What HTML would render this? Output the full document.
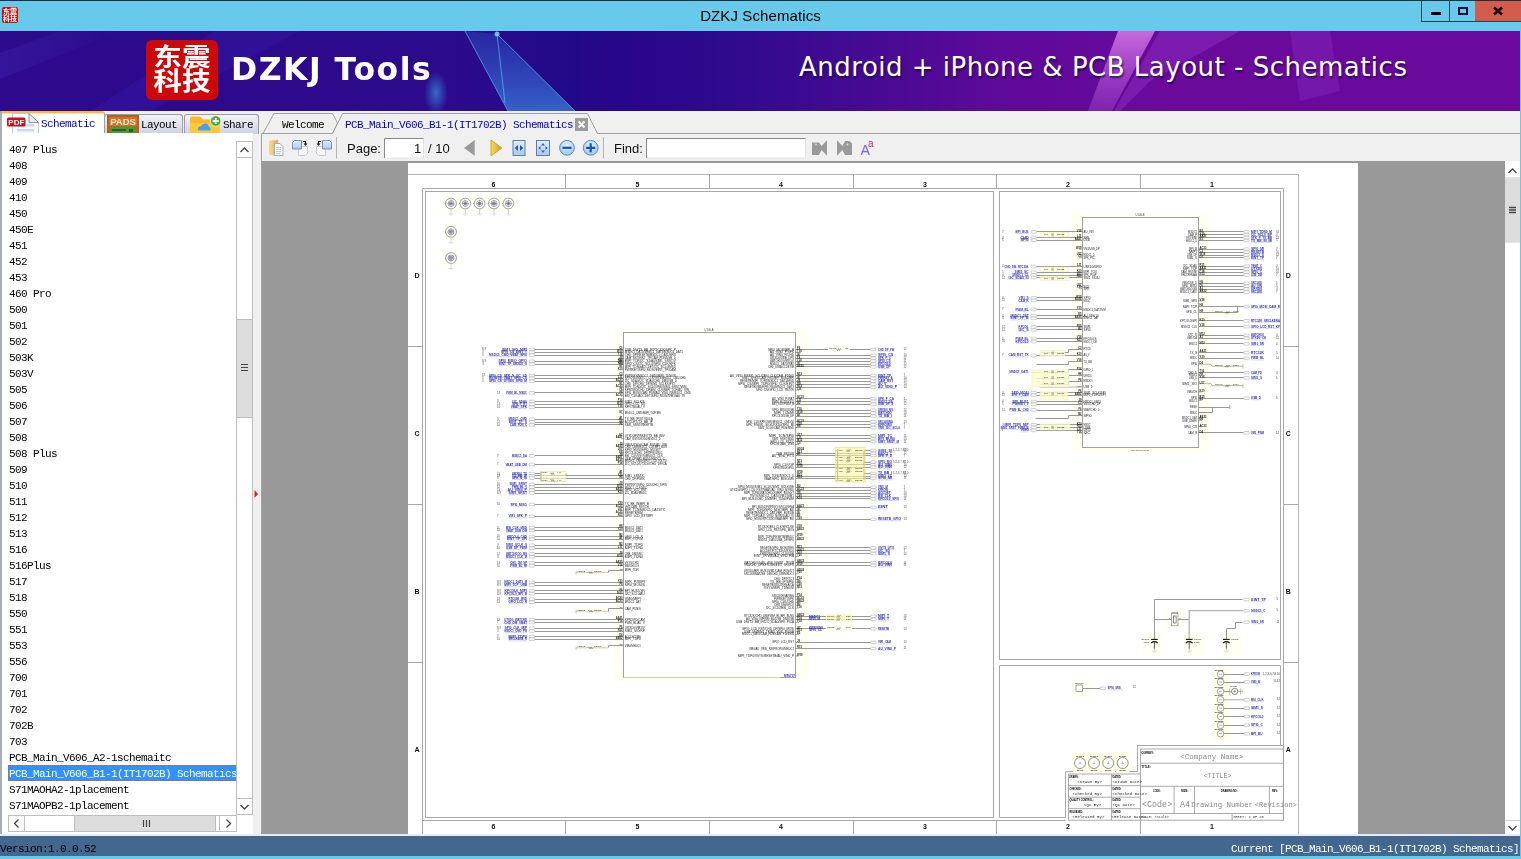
<!DOCTYPE html>
<html lang="en"><head><meta charset="utf-8"><title>DZKJ Schematics</title>
<style>
*{box-sizing:border-box;margin:0;padding:0}
html,body{width:1521px;height:859px;overflow:hidden}
body{position:relative;background:#67caea;font-family:"Liberation Sans",sans-serif;color:#000}
.abs{position:absolute}
.mono{font-family:"Liberation Mono",monospace;font-size:11px;letter-spacing:-0.6px;white-space:pre}
#topline{left:0;top:0;width:1521px;height:1px;background:#16323f}
#title{left:0;top:6px;width:1521px;text-align:center;font-size:15px;letter-spacing:.1px;line-height:20px;color:#000}
#appicon{left:2px;top:7px;width:16px;height:16px;background:#c4120c;border-radius:2px;color:#fff;font-size:7px;line-height:7px;font-family:"Liberation Sans","Noto Sans CJK SC",sans-serif;font-weight:bold;text-align:center;padding-top:1px;overflow:hidden}
#winbtns{left:1421px;top:1px;width:100px;height:21px;border-left:1px solid #12475c;border-bottom:1px solid #12475c}
#winbtns div{position:absolute;top:0;height:20px}
#bmin{left:0;width:28px;border-right:1px solid #12475c}
#bmax{left:28px;width:25px}
#bclose{left:53px;width:46px;background:#d35b4b}
#banner{left:0;top:31px;width:1520px;height:80px;overflow:hidden;background:linear-gradient(90deg,#2e0a8c 0%,#2b0a8b 30%,#220a88 37%,#29068a 42%,#2d0a8c 47%,#400a91 55%,#5e0a99 66%,#690a9b 76%,#6a0a9c 100%)}
#logo{left:146px;top:9px;width:72px;height:60px;background:#cc0808;border-radius:6px}
#logo span{position:absolute;left:0;top:4px;width:72px;color:#fff;font-family:"Noto Sans CJK SC","Liberation Sans",sans-serif;font-weight:700;font-size:24.5px;line-height:24px;text-align:center;transform:scaleX(1.17);transform-origin:36px 0;white-space:pre}
#brand{left:231px;top:18px;font-family:'DejaVu Sans',sans-serif;font-weight:bold;font-size:31.5px;line-height:40px;color:#fff;white-space:pre;letter-spacing:1.5px}
#slogan{left:799px;top:19px;font-family:'DejaVu Sans',sans-serif;letter-spacing:.5px;font-size:26px;line-height:34px;color:#fff;white-space:pre;text-shadow:1px 2px 2px rgba(20,0,60,.7)}
#tabrow{left:0;top:111px;width:1520px;height:50px;background:#f0f0f0}
.ltab{top:3px;height:20px;border:1px solid #9a9aa8;border-bottom:none;border-radius:3px 3px 0 0;background:linear-gradient(#f4f4f8,#cfd0e0)}
.ltab span{position:absolute;top:3px;line-height:14px}
#leftpane{left:2px;top:133px;width:251px;height:703px;background:#fff}
#list{left:6px;top:8px;width:229px;height:672px;overflow:hidden}
#list div{height:16px;line-height:16px;padding-left:1px;padding-top:1px;font-family:"Liberation Mono",monospace;font-size:11px;letter-spacing:-0.6px;white-space:pre}
#list div.sel{background:#3390ff;color:#fff;outline:1px dotted #c60;outline-offset:-1px}
#vsb{left:234px;top:8px;width:17px;height:674px;border:1px solid #bdbdbd;background:#fff}
#hsb{left:6px;top:682px;width:229px;height:17px;border:1px solid #bdbdbd;background:#fff}
#status{left:0;top:834px;width:1520px;height:22px;background:#44678f;border-top:2px solid #e4ecf4}
#status span{position:absolute;top:6px;color:#000;line-height:14px}
#viewer{left:262px;top:161px;width:1243px;height:673px;background:#999;overflow:hidden}
#page{left:146px;top:2px;width:950px;height:672px;background:#fff}
#rvsb{left:1505px;top:161px;width:15px;height:673px;background:#fff}
#toolbar{left:262px;top:134px;width:1258px;height:27px;background:#f0f0f0}
.tbt{font-size:13px;line-height:18px;top:6px;white-space:pre;color:#111}
.inp{background:#fff;border:1px solid #c8c8c8;border-top-color:#8c8c8c;border-left-color:#a8a8a8}

#schem,#list,#tabrow span,#status span,.tbt,#title{will-change:transform}

</style></head>
<body>
<div class="abs" id="title">DZKJ Schematics</div>
<div class="abs" id="topline"></div>
<div class="abs" id="appicon">东震<br>科技</div>
<div class="abs" id="winbtns">
  <div id="bmin"><svg width="27" height="20"><rect x="9" y="11" width="10" height="3" fill="#000"/></svg></div>
  <div id="bmax"><svg width="25" height="20"><rect x="9" y="7" width="8" height="6" fill="none" stroke="#0a0a3a" stroke-width="2"/></svg></div>
  <div id="bclose"><svg width="46" height="20"><path d="M19 6.5 L27 13.5 M27 6.5 L19 13.5" stroke="#1a0505" stroke-width="2.6" fill="none"/></svg></div>
</div>

<div class="abs" id="banner">
  <svg class="abs" style="left:0;top:0" width="1520" height="80" viewBox="0 0 1520 80">
    <defs>
      <linearGradient id="bg1" x1="0" x2="1" y1="0" y2="0"><stop offset="0" stop-color="#4a3fd0" stop-opacity=".22"/><stop offset="1" stop-color="#4a3fd0" stop-opacity="0"/></linearGradient>
      <linearGradient id="bg2" x1="0" x2="0" y1="0" y2="1"><stop offset="0" stop-color="#d77be8" stop-opacity=".85"/><stop offset="1" stop-color="#b050d8" stop-opacity=".35"/></linearGradient>
      <linearGradient id="bg4" x1="0" x2="0" y1="0" y2="1"><stop offset="0" stop-color="#2a3cb8" stop-opacity=".55"/><stop offset="1" stop-color="#3a78d8" stop-opacity=".8"/></linearGradient>
      <radialGradient id="bg3"><stop offset="0" stop-color="#3a8fe0" stop-opacity=".7"/><stop offset="1" stop-color="#3a8fe0" stop-opacity="0"/></radialGradient>
    </defs>
    <polygon points="0,22 60,0 120,0 0,48" fill="url(#bg1)"/>
    <polygon points="215,0 300,0 150,80 90,80" fill="#3a22b8" opacity=".28"/>
    <ellipse cx="436" cy="62" rx="12" ry="22" fill="url(#bg3)"/>
    <polygon points="465,0 497,3 575,80 508,80" fill="url(#bg4)"/>
    <path d="M465 0 L508 80 M497 3 L575 80 M497 3 L505 72" stroke="#58b8f0" stroke-width="1" opacity=".7" fill="none"/>
    <circle cx="497" cy="3" r="2.5" fill="#7fe0f0" opacity=".8"/>
    <polygon points="1118,0 1155,0 1112,80 1088,80" fill="url(#bg2)"/>
    <polygon points="1160,0 1240,0 1150,50 1120,80 1114,80" fill="#a040d0" opacity=".35"/>
    <polygon points="1290,0 1330,0 1340,60 1300,70" fill="#9a3fd0" opacity=".25"/>
  </svg>
  <div class="abs" id="logo"><span>东震
科技</span></div>
  <div class="abs" id="brand">DZKJ Tools</div>
  <div class="abs" id="slogan">Android + iPhone &amp; PCB Layout - Schematics</div>
</div>

<div class="abs" id="tabrow">
  <!-- left tool tabs -->
  <div class="abs" style="left:1px;top:0;width:104px;height:23px;background:#fff;border-left:1px solid #a8a8b0;border-right:1px solid #a8a8b0;border-top:2px solid #fbb640;border-radius:3px 3px 0 0;box-shadow:inset 0 1px 0 #fde4b4"></div>
  <svg class="abs" style="left:6px;top:2px" width="36" height="21" viewBox="6 113 36 21">
    <path d="M12.500 113.500 H29 L38.500 122.500 V133.500 H12.500Z" fill="#f6f9fd" stroke="#c0cad8" stroke-width="1"/>
    <path d="M29 113.500 L38.500 122.500 H29Z" fill="#e4ebf4" stroke="#7a8494" stroke-width=".8"/>
    <rect x="17" y="124" width="17" height="2.500" fill="#c9dcf0"/><rect x="17" y="129" width="17" height="2.500" fill="#c9dcf0"/>
    <rect x="7" y="117.500" width="18.500" height="9" rx="1.500" fill="#c8101c"/>
    <text x="16.300" y="125.100" font-family="Liberation Sans,sans-serif" font-weight="bold" font-size="8" fill="#fff" text-anchor="middle">PDF</text>
  </svg>
  <span class="abs mono" style="left:41px;top:6px;line-height:14px;color:#0000c8">Schematic</span>

  <div class="abs ltab" style="left:104px;width:79px"></div>
  <svg class="abs" style="left:107px;top:4px" width="32" height="19" viewBox="0 0 32 19">
    <rect x=".5" y=".5" width="31" height="18.5" fill="#c85a14" stroke="#a0642c"/>
    <rect x="2" y="2" width="28" height="9" fill="#d8702a"/>
    <rect x="3" y="11.5" width="26" height="7.5" fill="#4c9a2a"/>
    <rect x="5" y="14" width="14" height="2" fill="#2c5a38"/><rect x="22" y="14" width="4" height="3" fill="#2c5a38"/>
    <text x="16" y="9.8" font-family="Liberation Sans,sans-serif" font-weight="bold" font-size="9.5" fill="#fdf1c8" text-anchor="middle">PADS</text>
  </svg>
  <span class="abs mono" style="left:141px;top:7px;line-height:14px">Layout</span>

  <div class="abs ltab" style="left:184px;width:75px"></div>
  <svg class="abs" style="left:189px;top:3px" width="34" height="20" viewBox="0 0 34 20">
    <path d="M1 4 Q1 2.5 2.5 2.5 H11 L14 5.5 H29 Q31 5.5 31 7.5 V20 H1Z" fill="#fdb827"/>
    <path d="M1 9 H31 V20 H1Z" fill="#ffc83a"/>
    <path d="M11 16.500 Q8.300 16.500 9 14 Q9.800 12 12 12.300 Q13.500 9 17 9.600 Q19.800 10.300 19.800 13 Q22.200 13.300 21.400 16.500Z" fill="#4a9ff0"/>
    <circle cx="26.700" cy="7" r="5.300" fill="#4cae3c" stroke="#e9f6e4" stroke-width=".8"/>
    <path d="M26.700 4 V10 M23.700 7 H29.700" stroke="#fff" stroke-width="1.800"/>
  </svg>
  <span class="abs mono" style="left:223px;top:7px;line-height:14px">Share</span>

  <!-- document tabs -->
  <svg class="abs" style="left:259px;top:0" width="1261" height="26" viewBox="259 111 1261 26">
    <path d="M261.5 137 V133.5 H1520" fill="none" stroke="#a0a0a0" stroke-width="1"/>
    <path d="M263 133.5 L274 113.5 H332.500 L337.5 123 L332.5 133.5Z" fill="#f0f0f0" stroke="#a0a0a0" stroke-width="1"/>
    <path d="M332.5 134 L342.600 113.500 H587.500 L597.500 134Z" fill="#f0f0f0"/>
    <path d="M332.500 133.500 L342.600 113.500 H587.500 L597.500 133.500" fill="none" stroke="#a0a0a0" stroke-width="1"/>
    <rect x="575" y="118" width="13" height="13" fill="#9c9c9c"/>
    <path d="M578.500 121.500 L584.500 127.500 M584.500 121.500 L578.500 127.500" stroke="#fff" stroke-width="1.8"/>
  </svg>
  <span class="abs mono" style="left:282px;top:7px;line-height:14px">Welcome</span>
  <span class="abs mono" style="left:345px;top:7px;line-height:14px;color:#0000c8">PCB_Main_V606_B1-1(IT1702B) Schematics</span>
</div>

<div class="abs" style="left:0;top:111px;width:2px;height:725px;background:#a9aeb4"></div>
<div class="abs" id="leftpane">
  <div class="abs" id="list">
<div>407 Plus</div>
<div>408</div>
<div>409</div>
<div>410</div>
<div>450</div>
<div>450E</div>
<div>451</div>
<div>452</div>
<div>453</div>
<div>460 Pro</div>
<div>500</div>
<div>501</div>
<div>502</div>
<div>503K</div>
<div>503V</div>
<div>505</div>
<div>506</div>
<div>507</div>
<div>508</div>
<div>508 Plus</div>
<div>509</div>
<div>510</div>
<div>511</div>
<div>512</div>
<div>513</div>
<div>516</div>
<div>516Plus</div>
<div>517</div>
<div>518</div>
<div>550</div>
<div>551</div>
<div>553</div>
<div>556</div>
<div>700</div>
<div>701</div>
<div>702</div>
<div>702B</div>
<div>703</div>
<div>PCB_Main_V606_A2-1schemaitc</div>
<div class="sel">PCB_Main_V606_B1-1(IT1702B) Schematics</div>
<div>S71MAOHA2-1placement</div>
<div>S71MAOPB2-1placement</div>
  </div>
  <div class="abs" id="vsb">
    <div class="abs" style="left:0;top:0;width:15px;height:16px;border-bottom:1px solid #bdbdbd"><svg width="15" height="16"><path d="M3.500 10 L7.500 6 L11.500 10" fill="none" stroke="#444" stroke-width="1.3"/></svg></div>
    <div class="abs" style="left:0;top:177px;width:15px;height:99px;background:#dcdcdc;border-top:1px solid #bdbdbd;border-bottom:1px solid #bdbdbd"><svg width="15" height="99"><path d="M4 44.500 H11 M4 47.500 H11 M4 50.500 H11" stroke="#444" stroke-width="1.2"/></svg></div>
    <div class="abs" style="left:0;bottom:0;width:15px;height:16px;border-top:1px solid #bdbdbd"><svg width="15" height="16"><path d="M3.500 6 L7.500 10 L11.500 6" fill="none" stroke="#444" stroke-width="1.3"/></svg></div>
  </div>
  <div class="abs" id="hsb">
    <div class="abs" style="left:0;top:0;width:16px;height:15px;border-right:1px solid #bdbdbd"><svg width="16" height="15"><path d="M9.500 3.500 L5.500 7.500 L9.500 11.500" fill="none" stroke="#444" stroke-width="1.3"/></svg></div>
    <div class="abs" style="left:65px;top:0;width:142px;height:15px;background:#dcdcdc;border-left:1px solid #bdbdbd;border-right:1px solid #bdbdbd"><svg width="140" height="15"><path d="M68.500 4 V11 M71.500 4 V11 M74.500 4 V11" stroke="#444" stroke-width="1.2"/></svg></div>
    <div class="abs" style="right:0;top:0;width:17px;height:15px;border-left:1px solid #bdbdbd"><svg width="16" height="15"><path d="M6.500 3.500 L10.500 7.500 L6.500 11.500" fill="none" stroke="#444" stroke-width="1.3"/></svg></div>
  </div>
</div>
<div class="abs" style="left:253px;top:134px;width:9px;height:702px;background:#f0f0f0"></div>
<svg class="abs" style="left:253px;top:489px" width="6" height="10"><path d="M1.500 1 L5 5 L1.500 9Z" fill="#e02020"/></svg>

<div class="abs" id="toolbar">
<svg class="abs" style="left:0;top:0" width="640" height="27" viewBox="262 134 640 27">
  <defs>
    <linearGradient id="gfold" x1="0" x2="1"><stop offset="0" stop-color="#f6dc9c"/><stop offset="1" stop-color="#d8a848"/></linearGradient>
    <linearGradient id="gblue" x1="0" x2="0" y1="0" y2="1"><stop offset="0" stop-color="#e4f0fb"/><stop offset="1" stop-color="#a9c8ea"/></linearGradient>
    <linearGradient id="ggold" x1="0" x2="1"><stop offset="0" stop-color="#f4d868"/><stop offset="1" stop-color="#d8a010"/></linearGradient>
    <radialGradient id="gcirc" cx=".5" cy=".35" r=".7"><stop offset="0" stop-color="#eaf4ff"/><stop offset="1" stop-color="#8cc0f0"/></radialGradient>
  </defs>
  <!-- copy icon -->
  <path d="M269.500 141 L278 140 V154 L274 155.500 L269.500 154Z" fill="url(#gfold)" stroke="#e8c888" stroke-width=".6"/>
  <path d="M274.500 143.500 H280 L283 146.500 V155.500 H274.500Z" fill="#fdfdff" stroke="#9aa6b8" stroke-width=".9"/>
  <path d="M276 147.500 H281 M276 149.500 H281 M276 151.500 H281 M276 153.500 H280" stroke="#a8b8d0" stroke-width=".8"/>
  <!-- rotate icons -->
  <path d="M298.500 146.500 H307.500 V153 L305 155.500 H298.500Z" fill="#fff" stroke="#c0c4cc" stroke-width=".9"/>
  <path d="M292.500 142.500 L294.500 140.500 H301.500 V149 H292.500Z" fill="url(#gblue)" stroke="#6a8cb8" stroke-width=".9"/>
  <path d="M303 141.500 H305.500 V144" fill="none" stroke="#222" stroke-width="1.2"/><path d="M303.500 143.500 H307.500 L305.500 146Z" fill="#222"/>
  <path d="M316.500 146.500 H325.500 V155.500 H319 L316.500 153Z" fill="#fff" stroke="#c0c4cc" stroke-width=".9"/>
  <path d="M322.500 140.500 H329.500 L331.500 142.500 V149 H322.500Z" fill="url(#gblue)" stroke="#6a8cb8" stroke-width=".9"/>
  <path d="M321 141.500 H318.500 V144" fill="none" stroke="#222" stroke-width="1.2"/><path d="M316.500 143.500 H320.500 L318.500 146Z" fill="#222"/>
  <path d="M336.500 137 V158.500" stroke="#b4b4b4" stroke-width="1"/>
  <!-- page input -->
  <rect x="384.500" y="138.500" width="39" height="19.500" fill="#fff" stroke="#e4e4e4"/>
  <path d="M384.500 158 V138.500 H423.500" fill="none" stroke="#8a8a8a" stroke-width="1"/>
  <!-- prev / next -->
  <path d="M464 148 L474.700 140 V155.800Z" fill="#9a9a9a"/>
  <path d="M491 140 L501.800 148 L491 155.800Z" fill="url(#ggold)" stroke="#c89818" stroke-width=".8"/>
  <!-- fit width -->
  <rect x="513" y="140.500" width="12" height="15" fill="url(#gblue)" stroke="#5a7fb4" stroke-width="1"/>
  <path d="M518 145 V151 L514.800 148Z M520 145 V151 L523.200 148Z" fill="#1858b0"/>
  <!-- fit page -->
  <rect x="536.500" y="140.500" width="13" height="15" fill="url(#gblue)" stroke="#5a7fb4" stroke-width="1"/>
  <path d="M541 145.500 H545 L543 143Z M541 150.500 H545 L543 153Z M540.500 146 V150 L538.300 148Z M545.500 146 V150 L547.700 148Z" fill="#2a62b4"/>
  <!-- zoom out / in -->
  <circle cx="567" cy="147.800" r="7.400" fill="url(#gcirc)" stroke="#6a8ab4" stroke-width="1"/>
  <path d="M562.500 147.800 H571.500" stroke="#1058b0" stroke-width="2.2"/>
  <circle cx="590.700" cy="147.800" r="7.400" fill="url(#gcirc)" stroke="#6a8ab4" stroke-width="1"/>
  <path d="M586.200 147.800 H595.200 M590.700 143.300 V152.300" stroke="#1058b0" stroke-width="2.200"/>
  <path d="M603.500 137 V158.500" stroke="#b4b4b4" stroke-width="1"/>
  <!-- find input -->
  <rect x="646.500" y="138.500" width="159" height="19.500" fill="#fff" stroke="#e4e4e4"/>
  <path d="M646.500 158 V138.500 H805.500" fill="none" stroke="#8a8a8a" stroke-width="1"/>
  <!-- find prev / next -->
  <path d="M812 142.500 H819 L821.500 146 L827 140.300 V155.700 L821.500 150 L819 155 H812Z" fill="#9a9a9a"/>
  <path d="M837 140.300 L842.500 146 L845 141 H849.500 L852 143.500 V155 H845 L842.500 150 L837 155.700Z" fill="#9a9a9a"/>
  <circle cx="816" cy="144.500" r=".9" fill="#ddd"/><circle cx="847.500" cy="144.500" r=".9" fill="#ddd"/>
  <!-- Aa -->
  <text x="860.500" y="155.200" font-family="Liberation Sans,sans-serif" font-size="14" fill="#7a66d8">A</text>
  <text x="868" y="147.300" font-family="Liberation Sans,sans-serif" font-size="10" fill="#c42878">a</text>
</svg>
<span class="abs tbt" style="left:85px">Page:</span>
<span class="abs tbt" style="left:151.500px">1</span>
<span class="abs tbt" style="left:166px">/ 10</span>
<span class="abs tbt" style="left:351.500px">Find:</span>

</div>
<div class="abs" style="left:261px;top:134px;width:1px;height:702px;background:#a0a0a0"></div>

<div class="abs" id="viewer">
  <div class="abs" id="page">
<svg id="schem" class="abs" style="left:0;top:0" width="950" height="672" viewBox="408 163 950 672" font-family="Liberation Sans,sans-serif" fill="none" shape-rendering="auto">
<path d="M408 174.5L1298.5 174.5L1298.5 835" stroke="#b4b4b4" stroke-width="1" fill="none"/>
<path d="M422.5 835L422.5 188.5L1283.5 188.5L1283.5 820.5" stroke="#a8a8a8" stroke-width="1" fill="none"/>
<path d="M422.5 820.5L1065.5 820.5" stroke="#a8a8a8" stroke-width="1"/>
<path d="M565.5 174.5L565.5 188.5" stroke="#a8a8a8" stroke-width="1"/>
<path d="M709.5 174.5L709.5 188.5" stroke="#a8a8a8" stroke-width="1"/>
<path d="M853.5 174.5L853.5 188.5" stroke="#a8a8a8" stroke-width="1"/>
<path d="M996.5 174.5L996.5 188.5" stroke="#a8a8a8" stroke-width="1"/>
<path d="M1140.5 174.5L1140.5 188.5" stroke="#a8a8a8" stroke-width="1"/>
<path d="M565.5 820.5L565.5 835" stroke="#a8a8a8" stroke-width="1"/>
<path d="M709.5 820.5L709.5 835" stroke="#a8a8a8" stroke-width="1"/>
<path d="M853.5 820.5L853.5 835" stroke="#a8a8a8" stroke-width="1"/>
<path d="M996.5 820.5L996.5 835" stroke="#a8a8a8" stroke-width="1"/>
<path d="M1140.5 820.5L1140.5 835" stroke="#a8a8a8" stroke-width="1"/>
<path d="M408 346.5L422.5 346.5" stroke="#a8a8a8" stroke-width="1"/>
<path d="M1283.5 346.5L1298.5 346.5" stroke="#a8a8a8" stroke-width="1"/>
<path d="M408 504.5L422.5 504.5" stroke="#a8a8a8" stroke-width="1"/>
<path d="M1283.5 504.5L1298.5 504.5" stroke="#a8a8a8" stroke-width="1"/>
<path d="M408 662.5L422.5 662.5" stroke="#a8a8a8" stroke-width="1"/>
<path d="M1283.5 662.5L1298.5 662.5" stroke="#a8a8a8" stroke-width="1"/>
<rect x="425.5" y="191.5" width="568" height="626" fill="none" stroke="#a8a8a8" stroke-width="1"/>
<rect x="999.5" y="191.5" width="281" height="468" fill="none" stroke="#a8a8a8" stroke-width="1"/>
<path d="M1280.5 745.5L1280.5 665.5L999.5 665.5L999.5 817.5L1065.5 817.5L1065.5 771.5L1137.5 771.5L1137.5 745.5L1283.5 745.5" stroke="#a8a8a8" stroke-width="1" fill="none"/>
<text x="493.5" y="186.5" font-size="7" fill="#111" text-anchor="middle" font-weight="bold">6</text>
<text x="493.5" y="829.3" font-size="7" fill="#111" text-anchor="middle" font-weight="bold">6</text>
<text x="637.5" y="186.5" font-size="7" fill="#111" text-anchor="middle" font-weight="bold">5</text>
<text x="637.5" y="829.3" font-size="7" fill="#111" text-anchor="middle" font-weight="bold">5</text>
<text x="781" y="186.5" font-size="7" fill="#111" text-anchor="middle" font-weight="bold">4</text>
<text x="781" y="829.3" font-size="7" fill="#111" text-anchor="middle" font-weight="bold">4</text>
<text x="925" y="186.5" font-size="7" fill="#111" text-anchor="middle" font-weight="bold">3</text>
<text x="925" y="829.3" font-size="7" fill="#111" text-anchor="middle" font-weight="bold">3</text>
<text x="1068" y="186.5" font-size="7" fill="#111" text-anchor="middle" font-weight="bold">2</text>
<text x="1068" y="829.3" font-size="7" fill="#111" text-anchor="middle" font-weight="bold">2</text>
<text x="1212" y="186.5" font-size="7" fill="#111" text-anchor="middle" font-weight="bold">1</text>
<text x="1212" y="829.3" font-size="7" fill="#111" text-anchor="middle" font-weight="bold">1</text>
<text x="417" y="278.1" font-size="7" fill="#111" text-anchor="middle" font-weight="bold">D</text>
<text x="1288.3" y="278.1" font-size="7" fill="#111" text-anchor="middle" font-weight="bold">D</text>
<text x="417" y="435.8" font-size="7" fill="#111" text-anchor="middle" font-weight="bold">C</text>
<text x="1288.3" y="435.8" font-size="7" fill="#111" text-anchor="middle" font-weight="bold">C</text>
<text x="417" y="593.8" font-size="7" fill="#111" text-anchor="middle" font-weight="bold">B</text>
<text x="1288.3" y="593.8" font-size="7" fill="#111" text-anchor="middle" font-weight="bold">B</text>
<text x="417" y="751.8" font-size="7" fill="#111" text-anchor="middle" font-weight="bold">A</text>
<text x="1288.3" y="751.8" font-size="7" fill="#111" text-anchor="middle" font-weight="bold">A</text>
<rect x="443" y="196" width="74" height="18" fill="#fffff4" stroke="none" stroke-width="1"/>
<rect x="443" y="224" width="15" height="17" fill="#fffff4" stroke="none" stroke-width="1"/>
<rect x="443" y="250" width="15" height="17" fill="#fffff4" stroke="none" stroke-width="1"/>
<circle cx="451" cy="203.5" r="5.4" fill="#fff" stroke="#777" stroke-width="0.7"/>
<circle cx="451" cy="203.5" r="3" fill="none" stroke="#667" stroke-width="0.6"/>
<rect x="449.7" y="202.2" width="2.6" height="2.6" fill="#d0d0de" stroke="#667" stroke-width="0.4"/>
<path d="M448.2 203.5L453.8 203.5" stroke="#445" stroke-width="0.45"/>
<path d="M451 200.7L451 206.3" stroke="#445" stroke-width="0.45"/>
<path d="M451 208.7L451 214" stroke="#b8b8c8" stroke-width="0.6"/>
<path d="M448.6 214L453.4 214" stroke="#c4c4d4" stroke-width="0.6"/>
<path d="M449.6 215.3L452.4 215.3" stroke="#d4d4e0" stroke-width="0.5"/>
<text x="444.4" y="204.4" font-size="2.2" fill="#555">1</text>
<circle cx="465.3" cy="203.5" r="5.4" fill="#fff" stroke="#777" stroke-width="0.7"/>
<circle cx="465.3" cy="203.5" r="3" fill="none" stroke="#667" stroke-width="0.6"/>
<rect x="464" y="202.2" width="2.6" height="2.6" fill="#d0d0de" stroke="#667" stroke-width="0.4"/>
<path d="M462.5 203.5L468.1 203.5" stroke="#445" stroke-width="0.45"/>
<path d="M465.3 200.7L465.3 206.3" stroke="#445" stroke-width="0.45"/>
<path d="M465.3 208.7L465.3 214" stroke="#b8b8c8" stroke-width="0.6"/>
<path d="M462.9 214L467.7 214" stroke="#c4c4d4" stroke-width="0.6"/>
<path d="M463.9 215.3L466.7 215.3" stroke="#d4d4e0" stroke-width="0.5"/>
<text x="458.7" y="204.4" font-size="2.2" fill="#555">1</text>
<circle cx="479.6" cy="203.5" r="5.4" fill="#fff" stroke="#777" stroke-width="0.7"/>
<circle cx="479.6" cy="203.5" r="3" fill="none" stroke="#667" stroke-width="0.6"/>
<rect x="478.3" y="202.2" width="2.6" height="2.6" fill="#d0d0de" stroke="#667" stroke-width="0.4"/>
<path d="M476.8 203.5L482.4 203.5" stroke="#445" stroke-width="0.45"/>
<path d="M479.6 200.7L479.6 206.3" stroke="#445" stroke-width="0.45"/>
<path d="M479.6 208.7L479.6 214" stroke="#b8b8c8" stroke-width="0.6"/>
<path d="M477.2 214L482 214" stroke="#c4c4d4" stroke-width="0.6"/>
<path d="M478.2 215.3L481 215.3" stroke="#d4d4e0" stroke-width="0.5"/>
<text x="473" y="204.4" font-size="2.2" fill="#555">1</text>
<circle cx="494" cy="203.5" r="5.4" fill="#fff" stroke="#777" stroke-width="0.7"/>
<circle cx="494" cy="203.5" r="3" fill="none" stroke="#667" stroke-width="0.6"/>
<rect x="492.7" y="202.2" width="2.6" height="2.6" fill="#d0d0de" stroke="#667" stroke-width="0.4"/>
<path d="M491.2 203.5L496.8 203.5" stroke="#445" stroke-width="0.45"/>
<path d="M494 200.7L494 206.3" stroke="#445" stroke-width="0.45"/>
<path d="M494 208.7L494 214" stroke="#b8b8c8" stroke-width="0.6"/>
<path d="M491.6 214L496.4 214" stroke="#c4c4d4" stroke-width="0.6"/>
<path d="M492.6 215.3L495.4 215.3" stroke="#d4d4e0" stroke-width="0.5"/>
<text x="487.4" y="204.4" font-size="2.2" fill="#555">1</text>
<circle cx="508.4" cy="203.5" r="5.4" fill="#fff" stroke="#777" stroke-width="0.7"/>
<circle cx="508.4" cy="203.5" r="3" fill="none" stroke="#667" stroke-width="0.6"/>
<rect x="507.1" y="202.2" width="2.6" height="2.6" fill="#d0d0de" stroke="#667" stroke-width="0.4"/>
<path d="M505.6 203.5L511.2 203.5" stroke="#445" stroke-width="0.45"/>
<path d="M508.4 200.7L508.4 206.3" stroke="#445" stroke-width="0.45"/>
<path d="M508.4 208.7L508.4 214" stroke="#b8b8c8" stroke-width="0.6"/>
<path d="M506 214L510.8 214" stroke="#c4c4d4" stroke-width="0.6"/>
<path d="M507 215.3L509.8 215.3" stroke="#d4d4e0" stroke-width="0.5"/>
<text x="501.8" y="204.4" font-size="2.2" fill="#555">1</text>
<circle cx="451" cy="231.8" r="5.4" fill="#fff" stroke="#777" stroke-width="0.7"/>
<circle cx="451" cy="231.8" r="3" fill="none" stroke="#667" stroke-width="0.6"/>
<rect x="449.7" y="230.5" width="2.6" height="2.6" fill="#d0d0de" stroke="#667" stroke-width="0.4"/>
<path d="M448.2 231.8L453.8 231.8" stroke="#445" stroke-width="0.45"/>
<path d="M451 229L451 234.6" stroke="#445" stroke-width="0.45"/>
<path d="M451 237L451 242.3" stroke="#b8b8c8" stroke-width="0.6"/>
<path d="M448.6 242.3L453.4 242.3" stroke="#c4c4d4" stroke-width="0.6"/>
<path d="M449.6 243.6L452.4 243.6" stroke="#d4d4e0" stroke-width="0.5"/>
<text x="444.4" y="232.7" font-size="2.2" fill="#555">1</text>
<circle cx="451" cy="258" r="5.4" fill="#fff" stroke="#777" stroke-width="0.7"/>
<circle cx="451" cy="258" r="3" fill="none" stroke="#667" stroke-width="0.6"/>
<rect x="449.7" y="256.7" width="2.6" height="2.6" fill="#d0d0de" stroke="#667" stroke-width="0.4"/>
<path d="M448.2 258L453.8 258" stroke="#445" stroke-width="0.45"/>
<path d="M451 255.2L451 260.8" stroke="#445" stroke-width="0.45"/>
<path d="M451 263.2L451 268.5" stroke="#b8b8c8" stroke-width="0.6"/>
<path d="M448.6 268.5L453.4 268.5" stroke="#c4c4d4" stroke-width="0.6"/>
<path d="M449.6 269.8L452.4 269.8" stroke="#d4d4e0" stroke-width="0.5"/>
<text x="444.4" y="258.9" font-size="2.2" fill="#555">1</text>
<rect x="613" y="329" width="195" height="352" fill="#fffff0" stroke="none" stroke-width="1"/>
<rect x="615" y="331" width="190" height="348" fill="#fffff6" stroke="none" stroke-width="1"/>
<rect x="623.5" y="332.5" width="172" height="345" fill="#fff" stroke="#a0a0a0" stroke-width="1"/>
<text x="709" y="331.2" font-size="2.6" fill="#444" text-anchor="middle">U100-A</text>
<text x="795" y="677.2" font-size="3" fill="#2a2a9a" text-anchor="end" font-weight="bold">MT6737</text>
<path d="M623.5 677.6L780 677.6" stroke="#d8d8a8" stroke-width="1"/>
<path d="M534.8 349.5L623.5 349.5" stroke="#989898" stroke-width="1"/>
<rect x="529.2" y="348.2" width="5.4" height="2.6" fill="#fff" stroke="#9a9a9a" stroke-width="0.5" rx="0.8"/>
<text x="527" y="350.5" font-size="2.9" fill="#3030b4" text-anchor="end" font-weight="bold" textLength="25" lengthAdjust="spacingAndGlyphs">SIM1_SIO_MIPI</text>
<path d="M502 351L527 351" stroke="#8a8ad8" stroke-width="0.35"/>
<text x="482" y="350.4" font-size="2.9" fill="#555">8,9</text>
<text x="622.6" y="349.3" font-size="2.7" fill="#222" text-anchor="end" font-weight="bold">C3</text>
<path d="M534.8 352.5L623.5 352.5" stroke="#989898" stroke-width="1"/>
<rect x="529.2" y="351.1" width="5.4" height="2.6" fill="#fff" stroke="#9a9a9a" stroke-width="0.5" rx="0.8"/>
<text x="527" y="353.4" font-size="2.9" fill="#3030b4" text-anchor="end" font-weight="bold" textLength="26" lengthAdjust="spacingAndGlyphs">SPI0_CS_EINT_T</text>
<path d="M501 353.9L527 353.9" stroke="#8a8ad8" stroke-width="0.35"/>
<text x="482" y="353.3" font-size="2.9" fill="#555">3</text>
<text x="622.6" y="352.2" font-size="2.7" fill="#222" text-anchor="end" font-weight="bold">W19</text>
<path d="M534.8 355.5L623.5 355.5" stroke="#989898" stroke-width="1"/>
<rect x="529.2" y="354" width="5.4" height="2.6" fill="#fff" stroke="#9a9a9a" stroke-width="0.5" rx="0.8"/>
<text x="527" y="356.3" font-size="2.9" fill="#3030b4" text-anchor="end" font-weight="bold" textLength="38" lengthAdjust="spacingAndGlyphs">MSDC1_CMD_VBAT_SPI0</text>
<path d="M489 356.8L527 356.8" stroke="#8a8ad8" stroke-width="0.35"/>
<text x="482" y="356.2" font-size="2.9" fill="#555">3</text>
<text x="622.6" y="355.1" font-size="2.7" fill="#222" text-anchor="end" font-weight="bold">T16</text>
<path d="M534.8 361.5L623.5 361.5" stroke="#989898" stroke-width="1"/>
<rect x="529.2" y="360" width="5.4" height="2.6" fill="#fff" stroke="#9a9a9a" stroke-width="0.5" rx="0.8"/>
<text x="527" y="362.3" font-size="2.9" fill="#3030b4" text-anchor="end" font-weight="bold" textLength="28.5" lengthAdjust="spacingAndGlyphs">SPI0_MISO_GPIO</text>
<path d="M498.5 362.8L527 362.8" stroke="#8a8ad8" stroke-width="0.35"/>
<text x="482" y="362.2" font-size="2.9" fill="#555">8,9</text>
<text x="622.6" y="361.1" font-size="2.7" fill="#222" text-anchor="end" font-weight="bold">K10</text>
<path d="M534.8 364.5L623.5 364.5" stroke="#989898" stroke-width="1"/>
<rect x="529.2" y="362.9" width="5.4" height="2.6" fill="#fff" stroke="#9a9a9a" stroke-width="0.5" rx="0.8"/>
<text x="527" y="365.2" font-size="2.9" fill="#3030b4" text-anchor="end" font-weight="bold" textLength="28" lengthAdjust="spacingAndGlyphs">EINT_TP_URXD0_G</text>
<path d="M499 365.7L527 365.7" stroke="#8a8ad8" stroke-width="0.35"/>
<text x="482" y="365.1" font-size="2.9" fill="#555">3</text>
<text x="622.6" y="364" font-size="2.7" fill="#222" text-anchor="end" font-weight="bold">K10</text>
<path d="M534.8 375.5L623.5 375.5" stroke="#989898" stroke-width="1"/>
<rect x="529.2" y="374.2" width="5.4" height="2.6" fill="#fff" stroke="#9a9a9a" stroke-width="0.5" rx="0.8"/>
<text x="527" y="376.5" font-size="2.9" fill="#3030b4" text-anchor="end" font-weight="bold" textLength="38" lengthAdjust="spacingAndGlyphs">SPI0_CS_SPK_N_I2C_SD</text>
<path d="M489 377L527 377" stroke="#8a8ad8" stroke-width="0.35"/>
<text x="482" y="376.4" font-size="2.9" fill="#555">13</text>
<text x="622.6" y="375.3" font-size="2.7" fill="#222" text-anchor="end" font-weight="bold">C3</text>
<path d="M534.8 378.5L623.5 378.5" stroke="#989898" stroke-width="1"/>
<rect x="529.2" y="377.1" width="5.4" height="2.6" fill="#fff" stroke="#9a9a9a" stroke-width="0.5" rx="0.8"/>
<text x="527" y="379.4" font-size="2.9" fill="#3030b4" text-anchor="end" font-weight="bold" textLength="38" lengthAdjust="spacingAndGlyphs">RESETB_VBAT_SPI0_CS</text>
<path d="M489 379.9L527 379.9" stroke="#8a8ad8" stroke-width="0.35"/>
<text x="482" y="379.3" font-size="2.9" fill="#555">3</text>
<text x="622.6" y="378.2" font-size="2.7" fill="#222" text-anchor="end" font-weight="bold">L11</text>
<path d="M534.8 381.5L623.5 381.5" stroke="#989898" stroke-width="1"/>
<rect x="529.2" y="380" width="5.4" height="2.6" fill="#fff" stroke="#9a9a9a" stroke-width="0.5" rx="0.8"/>
<text x="527" y="382.3" font-size="2.9" fill="#3030b4" text-anchor="end" font-weight="bold" textLength="38" lengthAdjust="spacingAndGlyphs">SPI0_CS_UTXD0_SPI0_M</text>
<path d="M489 382.8L527 382.8" stroke="#8a8ad8" stroke-width="0.35"/>
<text x="482" y="382.2" font-size="2.9" fill="#555">3</text>
<text x="622.6" y="381.1" font-size="2.7" fill="#222" text-anchor="end" font-weight="bold">AC23</text>
<path d="M534.8 392.5L623.5 392.5" stroke="#989898" stroke-width="1"/>
<rect x="529.2" y="391.6" width="5.4" height="2.6" fill="#fff" stroke="#9a9a9a" stroke-width="0.5" rx="0.8"/>
<text x="527" y="393.9" font-size="2.9" fill="#3030b4" text-anchor="end" font-weight="bold" textLength="20.7" lengthAdjust="spacingAndGlyphs">PWM_BL_MSDC</text>
<path d="M506.3 394.4L527 394.4" stroke="#8a8ad8" stroke-width="0.35"/>
<text x="497" y="393.8" font-size="2.9" fill="#555">13</text>
<text x="622.6" y="392.7" font-size="2.7" fill="#222" text-anchor="end" font-weight="bold">F6</text>
<path d="M534.8 401.5L623.5 401.5" stroke="#989898" stroke-width="1"/>
<rect x="529.2" y="400.2" width="5.4" height="2.6" fill="#fff" stroke="#9a9a9a" stroke-width="0.5" rx="0.8"/>
<text x="527" y="402.5" font-size="2.9" fill="#3030b4" text-anchor="end" font-weight="bold" textLength="14.7" lengthAdjust="spacingAndGlyphs">I2C_SDA0</text>
<path d="M512.3 403L527 403" stroke="#8a8ad8" stroke-width="0.35"/>
<text x="497" y="402.4" font-size="2.9" fill="#555">3</text>
<text x="622.6" y="401.3" font-size="2.7" fill="#222" text-anchor="end" font-weight="bold">P14</text>
<path d="M534.8 404.5L623.5 404.5" stroke="#989898" stroke-width="1"/>
<rect x="529.2" y="403.1" width="5.4" height="2.6" fill="#fff" stroke="#9a9a9a" stroke-width="0.5" rx="0.8"/>
<text x="527" y="405.4" font-size="2.9" fill="#3030b4" text-anchor="end" font-weight="bold" textLength="14.7" lengthAdjust="spacingAndGlyphs">SPK_P_RT</text>
<path d="M512.3 405.9L527 405.9" stroke="#8a8ad8" stroke-width="0.35"/>
<text x="497" y="405.3" font-size="2.9" fill="#555">13</text>
<text x="622.6" y="404.2" font-size="2.7" fill="#222" text-anchor="end" font-weight="bold">W19</text>
<path d="M534.8 407.5L623.5 407.5" stroke="#989898" stroke-width="1"/>
<rect x="529.2" y="406" width="5.4" height="2.6" fill="#fff" stroke="#9a9a9a" stroke-width="0.5" rx="0.8"/>
<text x="527" y="408.3" font-size="2.9" fill="#3030b4" text-anchor="end" font-weight="bold" textLength="16.3" lengthAdjust="spacingAndGlyphs">VBAT_SPK</text>
<path d="M510.7 408.8L527 408.8" stroke="#8a8ad8" stroke-width="0.35"/>
<text x="497" y="408.2" font-size="2.9" fill="#555">10</text>
<text x="622.6" y="407.1" font-size="2.7" fill="#222" text-anchor="end" font-weight="bold">T16</text>
<path d="M534.8 419.5L623.5 419.5" stroke="#989898" stroke-width="1"/>
<rect x="529.2" y="417.8" width="5.4" height="2.6" fill="#fff" stroke="#9a9a9a" stroke-width="0.5" rx="0.8"/>
<text x="527" y="420.1" font-size="2.9" fill="#3030b4" text-anchor="end" font-weight="bold" textLength="18.6" lengthAdjust="spacingAndGlyphs">MSDC1_CMD</text>
<path d="M508.4 420.6L527 420.6" stroke="#8a8ad8" stroke-width="0.35"/>
<text x="497" y="420" font-size="2.9" fill="#555">3</text>
<text x="622.6" y="418.9" font-size="2.7" fill="#222" text-anchor="end" font-weight="bold">A1</text>
<path d="M534.8 422.5L623.5 422.5" stroke="#989898" stroke-width="1"/>
<rect x="529.2" y="420.7" width="5.4" height="2.6" fill="#fff" stroke="#9a9a9a" stroke-width="0.5" rx="0.8"/>
<text x="527" y="423" font-size="2.9" fill="#3030b4" text-anchor="end" font-weight="bold" textLength="18" lengthAdjust="spacingAndGlyphs">EINT_TP_S</text>
<path d="M509 423.5L527 423.5" stroke="#8a8ad8" stroke-width="0.35"/>
<text x="497" y="422.9" font-size="2.9" fill="#555">12</text>
<text x="622.6" y="421.8" font-size="2.7" fill="#222" text-anchor="end" font-weight="bold">D4</text>
<path d="M534.8 424.5L623.5 424.5" stroke="#989898" stroke-width="1"/>
<rect x="529.2" y="423.6" width="5.4" height="2.6" fill="#fff" stroke="#9a9a9a" stroke-width="0.5" rx="0.8"/>
<text x="527" y="425.9" font-size="2.9" fill="#3030b4" text-anchor="end" font-weight="bold" textLength="17" lengthAdjust="spacingAndGlyphs">CAM_PDN_C</text>
<path d="M510 426.4L527 426.4" stroke="#8a8ad8" stroke-width="0.35"/>
<text x="497" y="425.8" font-size="2.9" fill="#555">10</text>
<text x="622.6" y="424.7" font-size="2.7" fill="#222" text-anchor="end" font-weight="bold">F6</text>
<path d="M534.8 455.5L623.5 455.5" stroke="#989898" stroke-width="1"/>
<rect x="529.2" y="454.5" width="5.4" height="2.6" fill="#fff" stroke="#9a9a9a" stroke-width="0.5" rx="0.8"/>
<text x="527" y="456.8" font-size="2.9" fill="#3030b4" text-anchor="end" font-weight="bold" textLength="15" lengthAdjust="spacingAndGlyphs">MSDC1_DA</text>
<path d="M512 457.3L527 457.3" stroke="#8a8ad8" stroke-width="0.35"/>
<text x="497" y="456.7" font-size="2.9" fill="#555">7</text>
<text x="622.6" y="455.6" font-size="2.7" fill="#222" text-anchor="end" font-weight="bold">J9</text>
<path d="M534.8 464.5L623.5 464.5" stroke="#989898" stroke-width="1"/>
<rect x="529.2" y="463.2" width="5.4" height="2.6" fill="#fff" stroke="#9a9a9a" stroke-width="0.5" rx="0.8"/>
<text x="527" y="465.5" font-size="2.9" fill="#3030b4" text-anchor="end" font-weight="bold" textLength="21.6" lengthAdjust="spacingAndGlyphs">VBAT_USB_DM</text>
<path d="M505.4 466L527 466" stroke="#8a8ad8" stroke-width="0.35"/>
<text x="497" y="465.4" font-size="2.9" fill="#555">7</text>
<text x="622.6" y="464.3" font-size="2.7" fill="#222" text-anchor="end" font-weight="bold">P14</text>
<path d="M534.8 473.5L541 473.5" stroke="#989898" stroke-width="1"/>
<rect x="529.2" y="472.3" width="5.4" height="2.6" fill="#fff" stroke="#9a9a9a" stroke-width="0.5" rx="0.8"/>
<text x="527" y="474.6" font-size="2.9" fill="#3030b4" text-anchor="end" font-weight="bold" textLength="15" lengthAdjust="spacingAndGlyphs">URXD0_TX</text>
<path d="M512 475.1L527 475.1" stroke="#8a8ad8" stroke-width="0.35"/>
<text x="497" y="474.5" font-size="2.9" fill="#555">13</text>
<text x="622.6" y="473.4" font-size="2.7" fill="#222" text-anchor="end" font-weight="bold">A1</text>
<path d="M534.8 475.5L623.5 475.5" stroke="#989898" stroke-width="1"/>
<rect x="529.2" y="474.5" width="5.4" height="2.6" fill="#fff" stroke="#9a9a9a" stroke-width="0.5" rx="0.8"/>
<text x="527" y="476.8" font-size="2.9" fill="#3030b4" text-anchor="end" font-weight="bold" textLength="15" lengthAdjust="spacingAndGlyphs">TX_BB_IP</text>
<path d="M512 477.3L527 477.3" stroke="#8a8ad8" stroke-width="0.35"/>
<text x="497" y="476.7" font-size="2.9" fill="#555">13</text>
<text x="622.6" y="475.6" font-size="2.7" fill="#222" text-anchor="end" font-weight="bold">Y20</text>
<path d="M534.8 478.5L623.5 478.5" stroke="#989898" stroke-width="1"/>
<rect x="529.2" y="476.8" width="5.4" height="2.6" fill="#fff" stroke="#9a9a9a" stroke-width="0.5" rx="0.8"/>
<text x="527" y="479.1" font-size="2.9" fill="#3030b4" text-anchor="end" font-weight="bold" textLength="15" lengthAdjust="spacingAndGlyphs">SPK_N_SI</text>
<path d="M512 479.6L527 479.6" stroke="#8a8ad8" stroke-width="0.35"/>
<text x="497" y="479" font-size="2.9" fill="#555">3</text>
<text x="622.6" y="477.9" font-size="2.7" fill="#222" text-anchor="end" font-weight="bold">H8</text>
<path d="M534.8 484.5L623.5 484.5" stroke="#989898" stroke-width="1"/>
<rect x="529.2" y="483.1" width="5.4" height="2.6" fill="#fff" stroke="#9a9a9a" stroke-width="0.5" rx="0.8"/>
<text x="527" y="485.4" font-size="2.9" fill="#3030b4" text-anchor="end" font-weight="bold" textLength="17.5" lengthAdjust="spacingAndGlyphs">SIM1_SRST</text>
<path d="M509.5 485.9L527 485.9" stroke="#8a8ad8" stroke-width="0.35"/>
<text x="497" y="485.3" font-size="2.9" fill="#555">10</text>
<text x="622.6" y="484.2" font-size="2.7" fill="#222" text-anchor="end" font-weight="bold">J9</text>
<path d="M534.8 487.5L623.5 487.5" stroke="#989898" stroke-width="1"/>
<rect x="529.2" y="486" width="5.4" height="2.6" fill="#fff" stroke="#9a9a9a" stroke-width="0.5" rx="0.8"/>
<text x="527" y="488.3" font-size="2.9" fill="#3030b4" text-anchor="end" font-weight="bold" textLength="15" lengthAdjust="spacingAndGlyphs">PWM_BL_V</text>
<path d="M512 488.8L527 488.8" stroke="#8a8ad8" stroke-width="0.35"/>
<text x="497" y="488.2" font-size="2.9" fill="#555">12</text>
<text x="622.6" y="487.1" font-size="2.7" fill="#222" text-anchor="end" font-weight="bold">W19</text>
<path d="M534.8 490.5L623.5 490.5" stroke="#989898" stroke-width="1"/>
<rect x="529.2" y="488.9" width="5.4" height="2.6" fill="#fff" stroke="#9a9a9a" stroke-width="0.5" rx="0.8"/>
<text x="527" y="491.2" font-size="2.9" fill="#3030b4" text-anchor="end" font-weight="bold" textLength="19.4" lengthAdjust="spacingAndGlyphs">AU_VIN0_P</text>
<path d="M507.6 491.7L527 491.7" stroke="#8a8ad8" stroke-width="0.35"/>
<text x="497" y="491.1" font-size="2.9" fill="#555">13</text>
<text x="622.6" y="490" font-size="2.7" fill="#222" text-anchor="end" font-weight="bold">AE25</text>
<path d="M534.8 493.5L623.5 493.5" stroke="#989898" stroke-width="1"/>
<rect x="529.2" y="491.8" width="5.4" height="2.6" fill="#fff" stroke="#9a9a9a" stroke-width="0.5" rx="0.8"/>
<text x="527" y="494.1" font-size="2.9" fill="#3030b4" text-anchor="end" font-weight="bold" textLength="18.5" lengthAdjust="spacingAndGlyphs">SIM1_SRST</text>
<path d="M508.5 494.6L527 494.6" stroke="#8a8ad8" stroke-width="0.35"/>
<text x="497" y="494" font-size="2.9" fill="#555">8,9</text>
<text x="622.6" y="492.9" font-size="2.7" fill="#222" text-anchor="end" font-weight="bold">K10</text>
<path d="M534.8 504.5L623.5 504.5" stroke="#989898" stroke-width="1"/>
<rect x="529.2" y="503.2" width="5.4" height="2.6" fill="#fff" stroke="#9a9a9a" stroke-width="0.5" rx="0.8"/>
<text x="527" y="505.5" font-size="2.9" fill="#3030b4" text-anchor="end" font-weight="bold" textLength="16.5" lengthAdjust="spacingAndGlyphs">SPI0_MISO</text>
<path d="M510.5 506L527 506" stroke="#8a8ad8" stroke-width="0.35"/>
<text x="497" y="505.4" font-size="2.9" fill="#555">10</text>
<text x="622.6" y="504.3" font-size="2.7" fill="#222" text-anchor="end" font-weight="bold">Y20</text>
<path d="M534.8 516.5L623.5 516.5" stroke="#989898" stroke-width="1"/>
<rect x="529.2" y="515" width="5.4" height="2.6" fill="#fff" stroke="#9a9a9a" stroke-width="0.5" rx="0.8"/>
<text x="527" y="517.3" font-size="2.9" fill="#3030b4" text-anchor="end" font-weight="bold" textLength="18.6" lengthAdjust="spacingAndGlyphs">VM1_SPK_P</text>
<path d="M508.4 517.8L527 517.8" stroke="#8a8ad8" stroke-width="0.35"/>
<text x="497" y="517.2" font-size="2.9" fill="#555">7</text>
<text x="622.6" y="516.1" font-size="2.7" fill="#222" text-anchor="end" font-weight="bold">N13</text>
<path d="M534.8 527.5L623.5 527.5" stroke="#989898" stroke-width="1"/>
<rect x="529.2" y="526.3" width="5.4" height="2.6" fill="#fff" stroke="#9a9a9a" stroke-width="0.5" rx="0.8"/>
<text x="527" y="528.6" font-size="2.9" fill="#3030b4" text-anchor="end" font-weight="bold" textLength="21" lengthAdjust="spacingAndGlyphs">BSI_CLK_MSD</text>
<path d="M506 529.1L527 529.1" stroke="#8a8ad8" stroke-width="0.35"/>
<text x="497" y="528.5" font-size="2.9" fill="#555">3</text>
<text x="622.6" y="527.4" font-size="2.7" fill="#222" text-anchor="end" font-weight="bold">H8</text>
<path d="M534.8 530.5L623.5 530.5" stroke="#989898" stroke-width="1"/>
<rect x="529.2" y="529.2" width="5.4" height="2.6" fill="#fff" stroke="#9a9a9a" stroke-width="0.5" rx="0.8"/>
<text x="527" y="531.5" font-size="2.9" fill="#3030b4" text-anchor="end" font-weight="bold" textLength="21" lengthAdjust="spacingAndGlyphs">VBAT_USB_DM</text>
<path d="M506 532L527 532" stroke="#8a8ad8" stroke-width="0.35"/>
<text x="497" y="531.4" font-size="2.9" fill="#555">12</text>
<text x="622.6" y="530.3" font-size="2.7" fill="#222" text-anchor="end" font-weight="bold">Y20</text>
<path d="M534.8 536.5L623.5 536.5" stroke="#989898" stroke-width="1"/>
<rect x="529.2" y="535.2" width="5.4" height="2.6" fill="#fff" stroke="#9a9a9a" stroke-width="0.5" rx="0.8"/>
<text x="527" y="537.5" font-size="2.9" fill="#3030b4" text-anchor="end" font-weight="bold" textLength="20" lengthAdjust="spacingAndGlyphs">KPCOL0_CHD</text>
<path d="M507 538L527 538" stroke="#8a8ad8" stroke-width="0.35"/>
<text x="497" y="537.4" font-size="2.9" fill="#555">10</text>
<text x="622.6" y="536.3" font-size="2.7" fill="#222" text-anchor="end" font-weight="bold">B2</text>
<path d="M534.8 539.5L623.5 539.5" stroke="#989898" stroke-width="1"/>
<rect x="529.2" y="538.1" width="5.4" height="2.6" fill="#fff" stroke="#9a9a9a" stroke-width="0.5" rx="0.8"/>
<text x="527" y="540.4" font-size="2.9" fill="#3030b4" text-anchor="end" font-weight="bold" textLength="20" lengthAdjust="spacingAndGlyphs">EINT_TP_SPI</text>
<path d="M507 540.9L527 540.9" stroke="#8a8ad8" stroke-width="0.35"/>
<text x="497" y="540.3" font-size="2.9" fill="#555">10</text>
<text x="622.6" y="539.2" font-size="2.7" fill="#222" text-anchor="end" font-weight="bold">A1</text>
<path d="M534.8 545.5L623.5 545.5" stroke="#989898" stroke-width="1"/>
<rect x="529.2" y="543.9" width="5.4" height="2.6" fill="#fff" stroke="#9a9a9a" stroke-width="0.5" rx="0.8"/>
<text x="527" y="546.2" font-size="2.9" fill="#3030b4" text-anchor="end" font-weight="bold" textLength="21" lengthAdjust="spacingAndGlyphs">SIM1_SCLK_S</text>
<path d="M506 546.7L527 546.7" stroke="#8a8ad8" stroke-width="0.35"/>
<text x="497" y="546.1" font-size="2.9" fill="#555">3</text>
<text x="622.6" y="545" font-size="2.7" fill="#222" text-anchor="end" font-weight="bold">B2</text>
<path d="M534.8 548.5L623.5 548.5" stroke="#989898" stroke-width="1"/>
<rect x="529.2" y="546.9" width="5.4" height="2.6" fill="#fff" stroke="#9a9a9a" stroke-width="0.5" rx="0.8"/>
<text x="527" y="549.2" font-size="2.9" fill="#3030b4" text-anchor="end" font-weight="bold" textLength="21" lengthAdjust="spacingAndGlyphs">USB_DP_PWM</text>
<path d="M506 549.7L527 549.7" stroke="#8a8ad8" stroke-width="0.35"/>
<text x="497" y="549.1" font-size="2.9" fill="#555">10</text>
<text x="622.6" y="548" font-size="2.7" fill="#222" text-anchor="end" font-weight="bold">L11</text>
<path d="M534.8 553.5L623.5 553.5" stroke="#989898" stroke-width="1"/>
<rect x="529.2" y="552.6" width="5.4" height="2.6" fill="#fff" stroke="#9a9a9a" stroke-width="0.5" rx="0.8"/>
<text x="527" y="554.9" font-size="2.9" fill="#3030b4" text-anchor="end" font-weight="bold" textLength="21" lengthAdjust="spacingAndGlyphs">WATCHDOG_MS</text>
<path d="M506 555.4L527 555.4" stroke="#8a8ad8" stroke-width="0.35"/>
<text x="497" y="554.8" font-size="2.9" fill="#555">12</text>
<text x="622.6" y="553.7" font-size="2.7" fill="#222" text-anchor="end" font-weight="bold">J9</text>
<path d="M534.8 556.5L623.5 556.5" stroke="#989898" stroke-width="1"/>
<rect x="529.2" y="555.5" width="5.4" height="2.6" fill="#fff" stroke="#9a9a9a" stroke-width="0.5" rx="0.8"/>
<text x="527" y="557.8" font-size="2.9" fill="#3030b4" text-anchor="end" font-weight="bold" textLength="21" lengthAdjust="spacingAndGlyphs">MSDC1_CLK_M</text>
<path d="M506 558.3L527 558.3" stroke="#8a8ad8" stroke-width="0.35"/>
<text x="497" y="557.7" font-size="2.9" fill="#555">3</text>
<text x="622.6" y="556.6" font-size="2.7" fill="#222" text-anchor="end" font-weight="bold">W19</text>
<path d="M534.8 562.5L623.5 562.5" stroke="#989898" stroke-width="1"/>
<rect x="529.2" y="561.5" width="5.4" height="2.6" fill="#fff" stroke="#9a9a9a" stroke-width="0.5" rx="0.8"/>
<text x="527" y="563.8" font-size="2.9" fill="#3030b4" text-anchor="end" font-weight="bold" textLength="16.7" lengthAdjust="spacingAndGlyphs">CHD_DM_SP</text>
<path d="M510.3 564.3L527 564.3" stroke="#8a8ad8" stroke-width="0.35"/>
<text x="497" y="563.7" font-size="2.9" fill="#555">13</text>
<text x="622.6" y="562.6" font-size="2.7" fill="#222" text-anchor="end" font-weight="bold">AE25</text>
<path d="M534.8 565.5L623.5 565.5" stroke="#989898" stroke-width="1"/>
<rect x="529.2" y="564.4" width="5.4" height="2.6" fill="#fff" stroke="#9a9a9a" stroke-width="0.5" rx="0.8"/>
<text x="527" y="566.7" font-size="2.9" fill="#3030b4" text-anchor="end" font-weight="bold" textLength="16.7" lengthAdjust="spacingAndGlyphs">PWM_BL_MI</text>
<path d="M510.3 567.2L527 567.2" stroke="#8a8ad8" stroke-width="0.35"/>
<text x="497" y="566.6" font-size="2.9" fill="#555">10</text>
<text x="622.6" y="565.5" font-size="2.7" fill="#222" text-anchor="end" font-weight="bold">V18</text>
<path d="M534.8 582.5L623.5 582.5" stroke="#989898" stroke-width="1"/>
<rect x="529.2" y="581.1" width="5.4" height="2.6" fill="#fff" stroke="#9a9a9a" stroke-width="0.5" rx="0.8"/>
<text x="527" y="583.4" font-size="2.9" fill="#3030b4" text-anchor="end" font-weight="bold" textLength="22.7" lengthAdjust="spacingAndGlyphs">MSDC1_DAT1_M</text>
<path d="M504.3 583.9L527 583.9" stroke="#8a8ad8" stroke-width="0.35"/>
<text x="497" y="583.3" font-size="2.9" fill="#555">8,9</text>
<text x="622.6" y="582.2" font-size="2.7" fill="#222" text-anchor="end" font-weight="bold">Y20</text>
<path d="M534.8 585.5L623.5 585.5" stroke="#989898" stroke-width="1"/>
<rect x="529.2" y="583.9" width="5.4" height="2.6" fill="#fff" stroke="#9a9a9a" stroke-width="0.5" rx="0.8"/>
<text x="527" y="586.2" font-size="2.9" fill="#3030b4" text-anchor="end" font-weight="bold" textLength="22.7" lengthAdjust="spacingAndGlyphs">MIPI_TCP_USB</text>
<path d="M504.3 586.7L527 586.7" stroke="#8a8ad8" stroke-width="0.35"/>
<text x="497" y="586.1" font-size="2.9" fill="#555">8,9</text>
<text x="622.6" y="585" font-size="2.7" fill="#222" text-anchor="end" font-weight="bold">F6</text>
<path d="M534.8 590.5L623.5 590.5" stroke="#989898" stroke-width="1"/>
<rect x="529.2" y="589.5" width="5.4" height="2.6" fill="#fff" stroke="#9a9a9a" stroke-width="0.5" rx="0.8"/>
<text x="527" y="591.8" font-size="2.9" fill="#3030b4" text-anchor="end" font-weight="bold" textLength="22.5" lengthAdjust="spacingAndGlyphs">KPCOL0_MIPI</text>
<path d="M504.5 592.3L527 592.3" stroke="#8a8ad8" stroke-width="0.35"/>
<text x="497" y="591.7" font-size="2.9" fill="#555">8,9</text>
<text x="622.6" y="590.6" font-size="2.7" fill="#222" text-anchor="end" font-weight="bold">F6</text>
<path d="M534.8 593.5L623.5 593.5" stroke="#989898" stroke-width="1"/>
<rect x="529.2" y="592.4" width="5.4" height="2.6" fill="#fff" stroke="#9a9a9a" stroke-width="0.5" rx="0.8"/>
<text x="527" y="594.7" font-size="2.9" fill="#3030b4" text-anchor="end" font-weight="bold" textLength="22.5" lengthAdjust="spacingAndGlyphs">KPCOL0_BPI_B</text>
<path d="M504.5 595.2L527 595.2" stroke="#8a8ad8" stroke-width="0.35"/>
<text x="497" y="594.6" font-size="2.9" fill="#555">8,9</text>
<text x="622.6" y="593.5" font-size="2.7" fill="#222" text-anchor="end" font-weight="bold">M12</text>
<path d="M534.8 599.5L623.5 599.5" stroke="#989898" stroke-width="1"/>
<rect x="529.2" y="598" width="5.4" height="2.6" fill="#fff" stroke="#9a9a9a" stroke-width="0.5" rx="0.8"/>
<text x="527" y="600.3" font-size="2.9" fill="#3030b4" text-anchor="end" font-weight="bold" textLength="18.6" lengthAdjust="spacingAndGlyphs">RTC32K_MSD</text>
<path d="M508.4 600.8L527 600.8" stroke="#8a8ad8" stroke-width="0.35"/>
<text x="497" y="600.2" font-size="2.9" fill="#555">13</text>
<text x="622.6" y="599.1" font-size="2.7" fill="#222" text-anchor="end" font-weight="bold">AC23</text>
<path d="M534.8 602.5L623.5 602.5" stroke="#989898" stroke-width="1"/>
<rect x="529.2" y="601" width="5.4" height="2.6" fill="#fff" stroke="#9a9a9a" stroke-width="0.5" rx="0.8"/>
<text x="527" y="603.3" font-size="2.9" fill="#3030b4" text-anchor="end" font-weight="bold" textLength="18.6" lengthAdjust="spacingAndGlyphs">GPIO_LCD_R</text>
<path d="M508.4 603.8L527 603.8" stroke="#8a8ad8" stroke-width="0.35"/>
<text x="497" y="603.2" font-size="2.9" fill="#555">13</text>
<text x="622.6" y="602.1" font-size="2.7" fill="#222" text-anchor="end" font-weight="bold">AC23</text>
<path d="M534.8 619.5L623.5 619.5" stroke="#989898" stroke-width="1"/>
<rect x="529.2" y="618.3" width="5.4" height="2.6" fill="#fff" stroke="#9a9a9a" stroke-width="0.5" rx="0.8"/>
<text x="527" y="620.6" font-size="2.9" fill="#3030b4" text-anchor="end" font-weight="bold" textLength="22.7" lengthAdjust="spacingAndGlyphs">UTXD0_WATCHD</text>
<path d="M504.3 621.1L527 621.1" stroke="#8a8ad8" stroke-width="0.35"/>
<text x="497" y="620.5" font-size="2.9" fill="#555">13</text>
<text x="622.6" y="619.4" font-size="2.7" fill="#222" text-anchor="end" font-weight="bold">AA21</text>
<path d="M534.8 622.5L623.5 622.5" stroke="#989898" stroke-width="1"/>
<rect x="529.2" y="621.2" width="5.4" height="2.6" fill="#fff" stroke="#9a9a9a" stroke-width="0.5" rx="0.8"/>
<text x="527" y="623.5" font-size="2.9" fill="#3030b4" text-anchor="end" font-weight="bold" textLength="22.7" lengthAdjust="spacingAndGlyphs">CHD_DM_VBAT</text>
<path d="M504.3 624L527 624" stroke="#8a8ad8" stroke-width="0.35"/>
<text x="497" y="623.4" font-size="2.9" fill="#555">7</text>
<text x="622.6" y="622.3" font-size="2.7" fill="#222" text-anchor="end" font-weight="bold">P14</text>
<path d="M534.8 628.5L623.5 628.5" stroke="#989898" stroke-width="1"/>
<rect x="529.2" y="626.9" width="5.4" height="2.6" fill="#fff" stroke="#9a9a9a" stroke-width="0.5" rx="0.8"/>
<text x="527" y="629.2" font-size="2.9" fill="#3030b4" text-anchor="end" font-weight="bold" textLength="22.4" lengthAdjust="spacingAndGlyphs">SPI0_CLK_MIP</text>
<path d="M504.6 629.7L527 629.7" stroke="#8a8ad8" stroke-width="0.35"/>
<text x="497" y="629.1" font-size="2.9" fill="#555">8,9</text>
<text x="622.6" y="628" font-size="2.7" fill="#222" text-anchor="end" font-weight="bold">F6</text>
<path d="M534.8 631.5L623.5 631.5" stroke="#989898" stroke-width="1"/>
<rect x="529.2" y="629.8" width="5.4" height="2.6" fill="#fff" stroke="#9a9a9a" stroke-width="0.5" rx="0.8"/>
<text x="527" y="632.1" font-size="2.9" fill="#3030b4" text-anchor="end" font-weight="bold" textLength="22.4" lengthAdjust="spacingAndGlyphs">MSDC1_CMD_PW</text>
<path d="M504.6 632.6L527 632.6" stroke="#8a8ad8" stroke-width="0.35"/>
<text x="497" y="632" font-size="2.9" fill="#555">3</text>
<text x="622.6" y="630.9" font-size="2.7" fill="#222" text-anchor="end" font-weight="bold">N13</text>
<path d="M534.8 636.5L623.5 636.5" stroke="#989898" stroke-width="1"/>
<rect x="529.2" y="635.2" width="5.4" height="2.6" fill="#fff" stroke="#9a9a9a" stroke-width="0.5" rx="0.8"/>
<text x="527" y="637.5" font-size="2.9" fill="#3030b4" text-anchor="end" font-weight="bold" textLength="18.6" lengthAdjust="spacingAndGlyphs">MIPI_TDP0</text>
<path d="M508.4 638L527 638" stroke="#8a8ad8" stroke-width="0.35"/>
<text x="497" y="637.4" font-size="2.9" fill="#555">3</text>
<text x="622.6" y="636.3" font-size="2.7" fill="#222" text-anchor="end" font-weight="bold">D4</text>
<path d="M534.8 639.5L623.5 639.5" stroke="#989898" stroke-width="1"/>
<rect x="529.2" y="638.1" width="5.4" height="2.6" fill="#fff" stroke="#9a9a9a" stroke-width="0.5" rx="0.8"/>
<text x="527" y="640.4" font-size="2.9" fill="#3030b4" text-anchor="end" font-weight="bold" textLength="18.6" lengthAdjust="spacingAndGlyphs">SRCLKENA_R</text>
<path d="M508.4 640.9L527 640.9" stroke="#8a8ad8" stroke-width="0.35"/>
<text x="497" y="640.3" font-size="2.9" fill="#555">10</text>
<text x="622.6" y="639.2" font-size="2.7" fill="#222" text-anchor="end" font-weight="bold">AB22</text>
<rect x="540.5" y="471.5" width="25.5" height="10" fill="#ffffd0" stroke="#d8d890" stroke-width="0.5" fill-opacity=".6"/>
<text x="541" y="473.2" font-size="2.2" fill="#333">R1026</text>
<text x="557" y="473.2" font-size="2.2" fill="#333">4.7K</text>
<path d="M550 473.6L551 472.6L552 474.6L553 472.6L554 474.6L555 473.6" stroke="#555" stroke-width="0.5" fill="none"/>
<text x="541" y="481.3" font-size="2.2" fill="#333">R1027</text>
<text x="557" y="481.3" font-size="2.2" fill="#333">4.7K</text>
<path d="M550 480.4L551 479.4L552 481.4L553 479.4L554 481.4L555 480.4" stroke="#555" stroke-width="0.5" fill="none"/>
<path d="M541 472.5L541 480.5" stroke="#777" stroke-width="0.5"/>
<path d="M566 473.6L566 476" stroke="#777" stroke-width="0.5"/>
<rect x="574" y="569.5" width="36" height="6" fill="#fffff0" stroke="none" stroke-width="1"/>
<path d="M608.5 572.5L608.5 570.5L623.5 570.5" stroke="#989898" stroke-width="1" fill="none"/>
<path d="M576 572.6L608 572.6" stroke="#999" stroke-width="0.5"/>
<path d="M588 572.6L589 571.6L590 573.6L591 571.6L592 573.6L593 572.6" stroke="#555" stroke-width="0.5" fill="none"/>
<text x="575.6" y="572.2" font-size="2.5" fill="#222">AVDD18</text>
<text x="594" y="572.2" font-size="2.5" fill="#222">R1001</text>
<path d="M576 572.6L576 574.6" stroke="#888" stroke-width="0.5"/>
<text x="622.6" y="569.7" font-size="2.1" fill="#444" text-anchor="end">AB5</text>
<rect x="574" y="608.1" width="36" height="6" fill="#fffff0" stroke="none" stroke-width="1"/>
<path d="M608.5 611.5L608.5 608.5L623.5 608.5" stroke="#989898" stroke-width="1" fill="none"/>
<path d="M576 611.2L608 611.2" stroke="#999" stroke-width="0.5"/>
<path d="M588 611.2L589 610.2L590 612.2L591 610.2L592 612.2L593 611.2" stroke="#555" stroke-width="0.5" fill="none"/>
<text x="575.6" y="610.8" font-size="2.5" fill="#222">AVDD18</text>
<text x="594" y="610.8" font-size="2.5" fill="#222">R1001</text>
<path d="M576 611.2L576 613.2" stroke="#888" stroke-width="0.5"/>
<text x="622.6" y="608.3" font-size="2.1" fill="#444" text-anchor="end">AB5</text>
<rect x="574" y="644.7" width="36" height="6" fill="#fffff0" stroke="none" stroke-width="1"/>
<path d="M608.5 647.5L608.5 645.5L623.5 645.5" stroke="#989898" stroke-width="1" fill="none"/>
<path d="M576 647.8L608 647.8" stroke="#999" stroke-width="0.5"/>
<path d="M588 647.8L589 646.8L590 648.8L591 646.8L592 648.8L593 647.8" stroke="#555" stroke-width="0.5" fill="none"/>
<text x="575.6" y="647.4" font-size="2.5" fill="#222">AVDD18</text>
<text x="594" y="647.4" font-size="2.5" fill="#222">R1001</text>
<path d="M576 647.8L576 649.8" stroke="#888" stroke-width="0.5"/>
<text x="622.6" y="644.9" font-size="2.1" fill="#444" text-anchor="end">AB5</text>
<text x="624.8" y="350.5" font-size="2.9" fill="#1c1c1c" textLength="51" lengthAdjust="spacingAndGlyphs">USB_DM/TX_BB_IP/RTC32K/SPK_P</text>
<text x="624.8" y="353.4" font-size="2.9" fill="#1c1c1c" textLength="58" lengthAdjust="spacingAndGlyphs">MSDC1_DAT1/MSDC1_DAT1/MSDC1_DAT1</text>
<text x="624.8" y="356.3" font-size="2.9" fill="#1c1c1c" textLength="51" lengthAdjust="spacingAndGlyphs">CHD_DP/RESETB/MSDC1_DAT1/SPI0</text>
<text x="624.8" y="359.2" font-size="2.9" fill="#1c1c1c" textLength="51" lengthAdjust="spacingAndGlyphs">CAM_RST/EINT_TP/CAM_PDN/USB_D</text>
<text x="624.8" y="362.1" font-size="2.9" fill="#1c1c1c" textLength="51" lengthAdjust="spacingAndGlyphs">MIPI_TCP/I2C_SDA0/SIM1_SRST/V</text>
<text x="624.8" y="365" font-size="2.9" fill="#1c1c1c" textLength="51" lengthAdjust="spacingAndGlyphs">SPI0_CS/I2C_SCL0/SPI0_CLK/SPK</text>
<text x="624.8" y="367.9" font-size="2.9" fill="#1c1c1c" textLength="51" lengthAdjust="spacingAndGlyphs">MIPI_TDN0/ACCDET/I2C_SCL0/MSD</text>
<text x="624.8" y="370.8" font-size="2.9" fill="#1c1c1c" textLength="51" lengthAdjust="spacingAndGlyphs">PWRKEY/SPI0_MOSI/EINT_TP/CAM</text>
<text x="624.8" y="376.5" font-size="2.9" fill="#1c1c1c" textLength="51" lengthAdjust="spacingAndGlyphs">PWRKEY/MSDC1_DAT0/MIPI_TDN0/R</text>
<text x="624.8" y="379.4" font-size="2.9" fill="#1c1c1c" textLength="61" lengthAdjust="spacingAndGlyphs">KPROW0/MSDC1_CLK/VSYS/MSDC1_CMD/CHD</text>
<text x="624.8" y="382.3" font-size="2.9" fill="#1c1c1c" textLength="52" lengthAdjust="spacingAndGlyphs">I2C_SDA0/I2C_SDA0/CHD_DM/USB_D</text>
<text x="624.8" y="385.2" font-size="2.9" fill="#1c1c1c" textLength="50" lengthAdjust="spacingAndGlyphs">CHD_DP/CHD_DP/SIM1_SCLK/GPIO</text>
<text x="624.8" y="388.1" font-size="2.9" fill="#1c1c1c" textLength="62" lengthAdjust="spacingAndGlyphs">MIPI_TDN0/I2C_SCL0/VM0/SIM1_SRST/VM0</text>
<text x="624.8" y="391" font-size="2.9" fill="#1c1c1c" textLength="64" lengthAdjust="spacingAndGlyphs">KPROW0/CHD_DP/BSI_CLK/MIPI_TCP/AU_VIN</text>
<text x="624.8" y="393.9" font-size="2.9" fill="#1c1c1c" textLength="66" lengthAdjust="spacingAndGlyphs">SPI0_MOSI/CAM_PDN/AU_VIN0_N/MSDC1_CMD</text>
<text x="624.8" y="396.8" font-size="2.9" fill="#1c1c1c" textLength="60" lengthAdjust="spacingAndGlyphs">BSI_CLK/ACCDET/SPI0_MOSI/VM1/AU_VI</text>
<text x="624.8" y="402.5" font-size="2.9" fill="#1c1c1c" textLength="20" lengthAdjust="spacingAndGlyphs">SIM1_SCLK/S</text>
<text x="624.8" y="405.45" font-size="2.9" fill="#1c1c1c" textLength="20" lengthAdjust="spacingAndGlyphs">GPIO_LCD_RS</text>
<text x="624.8" y="408.4" font-size="2.9" fill="#1c1c1c" textLength="20" lengthAdjust="spacingAndGlyphs">KPROW0/AU_V</text>
<text x="624.8" y="414.2" font-size="2.9" fill="#1c1c1c" textLength="36" lengthAdjust="spacingAndGlyphs">MSDC1_CMD/MIPI_TCP/MS</text>
<text x="624.8" y="420.1" font-size="2.9" fill="#1c1c1c" textLength="28" lengthAdjust="spacingAndGlyphs">TX_BB_IP/UTXD0/A</text>
<text x="624.8" y="423" font-size="2.9" fill="#1c1c1c" textLength="28" lengthAdjust="spacingAndGlyphs">ACCDET/TX_BB_IP</text>
<text x="624.8" y="425.9" font-size="2.9" fill="#1c1c1c" textLength="28" lengthAdjust="spacingAndGlyphs">SIM1_SRST/RESETB</text>
<text x="624.8" y="436.7" font-size="2.9" fill="#1c1c1c" textLength="40" lengthAdjust="spacingAndGlyphs">UTXD0/PWRKEY/TX_BB_IN/V</text>
<text x="624.8" y="439.5" font-size="2.9" fill="#1c1c1c" textLength="36" lengthAdjust="spacingAndGlyphs">CAM_RST/URXD0/MSDC1_D</text>
<text x="624.8" y="445.7" font-size="2.9" fill="#1c1c1c" textLength="42" lengthAdjust="spacingAndGlyphs">VM0/UTXD0/CAM_RST/AU_VIN</text>
<text x="624.8" y="448.48" font-size="2.9" fill="#1c1c1c" textLength="42" lengthAdjust="spacingAndGlyphs">CHD_DM/MSDC1_CLK/BPI_BUS</text>
<text x="624.8" y="451.26" font-size="2.9" fill="#1c1c1c" textLength="36" lengthAdjust="spacingAndGlyphs">SPI0_MOSI/SPI0_MOSI/T</text>
<text x="624.8" y="454.04" font-size="2.9" fill="#1c1c1c" textLength="38" lengthAdjust="spacingAndGlyphs">KPCOL0/CHD_DP/KPROW0/C</text>
<text x="624.8" y="456.82" font-size="2.9" fill="#1c1c1c" textLength="38" lengthAdjust="spacingAndGlyphs">BSI_CLK/VSYS/MSDC1_CLK</text>
<text x="624.8" y="459.6" font-size="2.9" fill="#1c1c1c" textLength="40" lengthAdjust="spacingAndGlyphs">USB_DP/BPI_BUS1/MSDC1_C</text>
<text x="624.8" y="462.38" font-size="2.9" fill="#1c1c1c" textLength="42" lengthAdjust="spacingAndGlyphs">MSDC1_CMD/GPIO_LCD_RST/U</text>
<text x="624.8" y="465.16" font-size="2.9" fill="#1c1c1c" textLength="42" lengthAdjust="spacingAndGlyphs">I2C_SCL0/UTXD0/CHD_DP/CA</text>
<text x="624.8" y="477.1" font-size="2.9" fill="#1c1c1c" textLength="20" lengthAdjust="spacingAndGlyphs">SIM1_SRST/C</text>
<text x="624.8" y="479.8" font-size="2.9" fill="#1c1c1c" textLength="20" lengthAdjust="spacingAndGlyphs">CHD_DP/PWRK</text>
<text x="624.8" y="486" font-size="2.9" fill="#1c1c1c" textLength="42" lengthAdjust="spacingAndGlyphs">PWRKEY/SPI0_CLK/CHD_DP/S</text>
<text x="624.8" y="488.7" font-size="2.9" fill="#1c1c1c" textLength="22" lengthAdjust="spacingAndGlyphs">MSDC1_CLK/SRC</text>
<text x="624.8" y="491.4" font-size="2.9" fill="#1c1c1c" textLength="22" lengthAdjust="spacingAndGlyphs">GPIO_LCD_RST</text>
<text x="624.8" y="494.1" font-size="2.9" fill="#1c1c1c" textLength="22" lengthAdjust="spacingAndGlyphs">I2C_SDA0/MSDC</text>
<text x="624.8" y="505.4" font-size="2.9" fill="#1c1c1c" textLength="24" lengthAdjust="spacingAndGlyphs">TX_BB_IN/BPI_B</text>
<text x="624.8" y="508.3" font-size="2.9" fill="#1c1c1c" textLength="24" lengthAdjust="spacingAndGlyphs">VM1/CAM_RST/CH</text>
<text x="624.8" y="511.2" font-size="2.9" fill="#1c1c1c" textLength="40" lengthAdjust="spacingAndGlyphs">MIPI_TCN/MSDC1_DAT3/TX</text>
<text x="624.8" y="514.1" font-size="2.9" fill="#1c1c1c" textLength="18" lengthAdjust="spacingAndGlyphs">RESETB/SIM</text>
<text x="624.8" y="517" font-size="2.9" fill="#1c1c1c" textLength="28" lengthAdjust="spacingAndGlyphs">GPIO_LCD_RST/BPI</text>
<text x="624.8" y="528.6" font-size="2.9" fill="#1c1c1c" textLength="18" lengthAdjust="spacingAndGlyphs">MSDC1_DAT1</text>
<text x="624.8" y="531.5" font-size="2.9" fill="#1c1c1c" textLength="18" lengthAdjust="spacingAndGlyphs">MSDC1_DAT1</text>
<text x="624.8" y="537.5" font-size="2.9" fill="#1c1c1c" textLength="18" lengthAdjust="spacingAndGlyphs">GPIO_LCD_R</text>
<text x="624.8" y="540.4" font-size="2.9" fill="#1c1c1c" textLength="18" lengthAdjust="spacingAndGlyphs">MIPI_TCP/M</text>
<text x="624.8" y="546.2" font-size="2.9" fill="#1c1c1c" textLength="18" lengthAdjust="spacingAndGlyphs">MIPI_TDP0</text>
<text x="624.8" y="549.1" font-size="2.9" fill="#1c1c1c" textLength="18" lengthAdjust="spacingAndGlyphs">MIPI_TDN0</text>
<text x="624.8" y="554.9" font-size="2.9" fill="#1c1c1c" textLength="18" lengthAdjust="spacingAndGlyphs">USB_DM/SRC</text>
<text x="624.8" y="557.8" font-size="2.9" fill="#1c1c1c" textLength="18" lengthAdjust="spacingAndGlyphs">MIPI_TDN0</text>
<text x="624.8" y="563.8" font-size="2.9" fill="#1c1c1c" textLength="14" lengthAdjust="spacingAndGlyphs">VSYS/CHD</text>
<text x="624.8" y="566.7" font-size="2.9" fill="#1c1c1c" textLength="14" lengthAdjust="spacingAndGlyphs">WATCHDOG</text>
<text x="624.8" y="571.3" font-size="2.9" fill="#1c1c1c" textLength="14" lengthAdjust="spacingAndGlyphs">MIPI_TDN</text>
<text x="624.8" y="583.4" font-size="2.9" fill="#1c1c1c" textLength="20" lengthAdjust="spacingAndGlyphs">SPK_P/MIPI</text>
<text x="624.8" y="586.3" font-size="2.9" fill="#1c1c1c" textLength="20" lengthAdjust="spacingAndGlyphs">SPI0_MOSI/S</text>
<text x="624.8" y="591.8" font-size="2.9" fill="#1c1c1c" textLength="20" lengthAdjust="spacingAndGlyphs">BPI_BUS1/SR</text>
<text x="624.8" y="594.7" font-size="2.9" fill="#1c1c1c" textLength="20" lengthAdjust="spacingAndGlyphs">I2C_SCL0/AU</text>
<text x="624.8" y="600.3" font-size="2.9" fill="#1c1c1c" textLength="16" lengthAdjust="spacingAndGlyphs">VM0/MIPI</text>
<text x="624.8" y="603.3" font-size="2.9" fill="#1c1c1c" textLength="16" lengthAdjust="spacingAndGlyphs">MSDC1_DAT</text>
<text x="624.8" y="609.9" font-size="2.9" fill="#1c1c1c" textLength="16" lengthAdjust="spacingAndGlyphs">CAM_PDN/S</text>
<text x="624.8" y="620.6" font-size="2.9" fill="#1c1c1c" textLength="20" lengthAdjust="spacingAndGlyphs">KPROW0/CAM</text>
<text x="624.8" y="623.5" font-size="2.9" fill="#1c1c1c" textLength="20" lengthAdjust="spacingAndGlyphs">PWM_BL/AU_V</text>
<text x="624.8" y="629.2" font-size="2.9" fill="#1c1c1c" textLength="20" lengthAdjust="spacingAndGlyphs">URXD0/VM1/V</text>
<text x="624.8" y="632.1" font-size="2.9" fill="#1c1c1c" textLength="20" lengthAdjust="spacingAndGlyphs">SIM1_SIO/KP</text>
<text x="624.8" y="637.5" font-size="2.9" fill="#1c1c1c" textLength="16" lengthAdjust="spacingAndGlyphs">ACCDET/MS</text>
<text x="624.8" y="640.4" font-size="2.9" fill="#1c1c1c" textLength="16" lengthAdjust="spacingAndGlyphs">MIPI_TDP0</text>
<text x="624.8" y="646.5" font-size="2.9" fill="#1c1c1c" textLength="16" lengthAdjust="spacingAndGlyphs">VM0/MSDC1</text>
<text x="622.6" y="358" font-size="2.7" fill="#222" text-anchor="end" font-weight="bold">J9</text>
<path d="M621 358.3L623.5 358.3" stroke="#666" stroke-width="0.5"/>
<text x="622.6" y="360.9" font-size="2.7" fill="#222" text-anchor="end" font-weight="bold">B2</text>
<path d="M621 361.2L623.5 361.2" stroke="#666" stroke-width="0.5"/>
<text x="622.6" y="363.8" font-size="2.7" fill="#222" text-anchor="end" font-weight="bold">E5</text>
<path d="M621 364.1L623.5 364.1" stroke="#666" stroke-width="0.5"/>
<text x="622.6" y="366.7" font-size="2.7" fill="#222" text-anchor="end" font-weight="bold">G7</text>
<path d="M621 367L623.5 367" stroke="#666" stroke-width="0.5"/>
<text x="622.6" y="369.6" font-size="2.7" fill="#222" text-anchor="end" font-weight="bold">K10</text>
<path d="M621 369.9L623.5 369.9" stroke="#666" stroke-width="0.5"/>
<text x="622.6" y="384" font-size="2.7" fill="#222" text-anchor="end" font-weight="bold">G7</text>
<path d="M621 384.3L623.5 384.3" stroke="#666" stroke-width="0.5"/>
<text x="622.6" y="386.9" font-size="2.7" fill="#222" text-anchor="end" font-weight="bold">AC23</text>
<path d="M621 387.2L623.5 387.2" stroke="#666" stroke-width="0.5"/>
<text x="622.6" y="389.8" font-size="2.7" fill="#222" text-anchor="end" font-weight="bold">F6</text>
<path d="M621 390.1L623.5 390.1" stroke="#666" stroke-width="0.5"/>
<text x="622.6" y="395.6" font-size="2.7" fill="#222" text-anchor="end" font-weight="bold">AC23</text>
<path d="M621 395.9L623.5 395.9" stroke="#666" stroke-width="0.5"/>
<text x="622.6" y="413" font-size="2.7" fill="#222" text-anchor="end" font-weight="bold">G7</text>
<path d="M621 413.3L623.5 413.3" stroke="#666" stroke-width="0.5"/>
<text x="622.6" y="435.5" font-size="2.7" fill="#222" text-anchor="end" font-weight="bold">G7</text>
<path d="M621 435.8L623.5 435.8" stroke="#666" stroke-width="0.5"/>
<text x="622.6" y="438.3" font-size="2.7" fill="#222" text-anchor="end" font-weight="bold">AA21</text>
<path d="M621 438.6L623.5 438.6" stroke="#666" stroke-width="0.5"/>
<text x="622.6" y="444.5" font-size="2.7" fill="#222" text-anchor="end" font-weight="bold">J9</text>
<path d="M621 444.8L623.5 444.8" stroke="#666" stroke-width="0.5"/>
<text x="622.6" y="447.28" font-size="2.7" fill="#222" text-anchor="end" font-weight="bold">AE25</text>
<path d="M621 447.58L623.5 447.58" stroke="#666" stroke-width="0.5"/>
<text x="622.6" y="450.06" font-size="2.7" fill="#222" text-anchor="end" font-weight="bold">U17</text>
<path d="M621 450.36L623.5 450.36" stroke="#666" stroke-width="0.5"/>
<text x="622.6" y="452.84" font-size="2.7" fill="#222" text-anchor="end" font-weight="bold">D4</text>
<path d="M621 453.14L623.5 453.14" stroke="#666" stroke-width="0.5"/>
<text x="622.6" y="458.4" font-size="2.7" fill="#222" text-anchor="end" font-weight="bold">AA21</text>
<path d="M621 458.7L623.5 458.7" stroke="#666" stroke-width="0.5"/>
<text x="622.6" y="461.18" font-size="2.7" fill="#222" text-anchor="end" font-weight="bold">AE25</text>
<path d="M621 461.48L623.5 461.48" stroke="#666" stroke-width="0.5"/>
<text x="622.6" y="507.1" font-size="2.7" fill="#222" text-anchor="end" font-weight="bold">AC23</text>
<path d="M621 507.4L623.5 507.4" stroke="#666" stroke-width="0.5"/>
<text x="622.6" y="510" font-size="2.7" fill="#222" text-anchor="end" font-weight="bold">U17</text>
<path d="M621 510.3L623.5 510.3" stroke="#666" stroke-width="0.5"/>
<text x="622.6" y="512.9" font-size="2.7" fill="#222" text-anchor="end" font-weight="bold">AC23</text>
<path d="M621 513.2L623.5 513.2" stroke="#666" stroke-width="0.5"/>
<path d="M795.5 349.5L870.4 349.5" stroke="#989898" stroke-width="1"/>
<rect x="870.6" y="348.2" width="5.4" height="2.6" fill="#fff" stroke="#9a9a9a" stroke-width="0.5" rx="0.8"/>
<text x="878" y="350.5" font-size="2.9" fill="#3030b4" font-weight="bold" textLength="16.3" lengthAdjust="spacingAndGlyphs">CHD_DP_PW</text>
<path d="M878 351L894.3 351" stroke="#8a8ad8" stroke-width="0.35"/>
<text x="903.5" y="350.4" font-size="2.9" fill="#555">12</text>
<text x="797" y="349.3" font-size="2.7" fill="#222" font-weight="bold">F6</text>
<path d="M795.5 355.5L870.4 355.5" stroke="#989898" stroke-width="1"/>
<rect x="870.6" y="354" width="5.4" height="2.6" fill="#fff" stroke="#9a9a9a" stroke-width="0.5" rx="0.8"/>
<text x="878" y="356.3" font-size="2.9" fill="#3030b4" font-weight="bold" textLength="15.3" lengthAdjust="spacingAndGlyphs">SPI0_CS</text>
<path d="M878 356.8L893.3 356.8" stroke="#8a8ad8" stroke-width="0.35"/>
<text x="903.5" y="356.2" font-size="2.9" fill="#555">10</text>
<text x="797" y="355.1" font-size="2.7" fill="#222" font-weight="bold">G7</text>
<path d="M795.5 358.5L870.4 358.5" stroke="#989898" stroke-width="1"/>
<rect x="870.6" y="356.9" width="5.4" height="2.6" fill="#fff" stroke="#9a9a9a" stroke-width="0.5" rx="0.8"/>
<text x="878" y="359.2" font-size="2.9" fill="#3030b4" font-weight="bold" textLength="13" lengthAdjust="spacingAndGlyphs">SPK_P_C</text>
<path d="M878 359.7L891 359.7" stroke="#8a8ad8" stroke-width="0.35"/>
<text x="903.5" y="359.1" font-size="2.9" fill="#555">12</text>
<text x="797" y="358" font-size="2.7" fill="#222" font-weight="bold">F6</text>
<path d="M795.5 361.5L870.4 361.5" stroke="#989898" stroke-width="1"/>
<rect x="870.6" y="359.8" width="5.4" height="2.6" fill="#fff" stroke="#9a9a9a" stroke-width="0.5" rx="0.8"/>
<text x="878" y="362.1" font-size="2.9" fill="#3030b4" font-weight="bold" textLength="12.6" lengthAdjust="spacingAndGlyphs">SPI0_CS</text>
<path d="M878 362.6L890.6 362.6" stroke="#8a8ad8" stroke-width="0.35"/>
<text x="903.5" y="362" font-size="2.9" fill="#555">11</text>
<text x="797" y="360.9" font-size="2.7" fill="#222" font-weight="bold">T16</text>
<path d="M795.5 364.5L870.4 364.5" stroke="#989898" stroke-width="1"/>
<rect x="870.6" y="362.7" width="5.4" height="2.6" fill="#fff" stroke="#9a9a9a" stroke-width="0.5" rx="0.8"/>
<text x="878" y="365" font-size="2.9" fill="#3030b4" font-weight="bold" textLength="12.6" lengthAdjust="spacingAndGlyphs">KPCOL0</text>
<path d="M878 365.5L890.6 365.5" stroke="#8a8ad8" stroke-width="0.35"/>
<text x="903.5" y="364.9" font-size="2.9" fill="#555">12</text>
<text x="797" y="363.8" font-size="2.7" fill="#222" font-weight="bold">G7</text>
<path d="M795.5 366.5L870.4 366.5" stroke="#989898" stroke-width="1"/>
<rect x="870.6" y="365.6" width="5.4" height="2.6" fill="#fff" stroke="#9a9a9a" stroke-width="0.5" rx="0.8"/>
<text x="878" y="367.9" font-size="2.9" fill="#3030b4" font-weight="bold" textLength="12.6" lengthAdjust="spacingAndGlyphs">USB_DP</text>
<path d="M878 368.4L890.6 368.4" stroke="#8a8ad8" stroke-width="0.35"/>
<text x="903.5" y="367.8" font-size="2.9" fill="#555">12</text>
<text x="797" y="366.7" font-size="2.7" fill="#222" font-weight="bold">AE25</text>
<path d="M795.5 375.5L870.4 375.5" stroke="#989898" stroke-width="1"/>
<rect x="870.6" y="374.2" width="5.4" height="2.6" fill="#fff" stroke="#9a9a9a" stroke-width="0.5" rx="0.8"/>
<text x="878" y="376.5" font-size="2.9" fill="#3030b4" font-weight="bold" textLength="13" lengthAdjust="spacingAndGlyphs">EINT_TP</text>
<path d="M878 377L891 377" stroke="#8a8ad8" stroke-width="0.35"/>
<text x="903.5" y="376.4" font-size="2.9" fill="#555">7</text>
<text x="797" y="375.3" font-size="2.7" fill="#222" font-weight="bold">N13</text>
<path d="M795.5 378.5L870.4 378.5" stroke="#989898" stroke-width="1"/>
<rect x="870.6" y="377.1" width="5.4" height="2.6" fill="#fff" stroke="#9a9a9a" stroke-width="0.5" rx="0.8"/>
<text x="878" y="379.4" font-size="2.9" fill="#3030b4" font-weight="bold" textLength="14.7" lengthAdjust="spacingAndGlyphs">PWRKEY_A</text>
<path d="M878 379.9L892.7 379.9" stroke="#8a8ad8" stroke-width="0.35"/>
<text x="903.5" y="379.3" font-size="2.9" fill="#555">10</text>
<text x="797" y="378.2" font-size="2.7" fill="#222" font-weight="bold">G7</text>
<path d="M795.5 381.5L870.4 381.5" stroke="#989898" stroke-width="1"/>
<rect x="870.6" y="380" width="5.4" height="2.6" fill="#fff" stroke="#9a9a9a" stroke-width="0.5" rx="0.8"/>
<text x="878" y="382.3" font-size="2.9" fill="#3030b4" font-weight="bold" textLength="15.3" lengthAdjust="spacingAndGlyphs">CAM_RST</text>
<path d="M878 382.8L893.3 382.8" stroke="#8a8ad8" stroke-width="0.35"/>
<text x="903.5" y="382.2" font-size="2.9" fill="#555">13</text>
<text x="797" y="381.1" font-size="2.7" fill="#222" font-weight="bold">J9</text>
<path d="M795.5 384.5L870.4 384.5" stroke="#989898" stroke-width="1"/>
<rect x="870.6" y="382.9" width="5.4" height="2.6" fill="#fff" stroke="#9a9a9a" stroke-width="0.5" rx="0.8"/>
<text x="878" y="385.2" font-size="2.9" fill="#3030b4" font-weight="bold" textLength="8.4" lengthAdjust="spacingAndGlyphs">AU_V</text>
<path d="M878 385.7L886.4 385.7" stroke="#8a8ad8" stroke-width="0.35"/>
<text x="903.5" y="385.1" font-size="2.9" fill="#555">10</text>
<text x="797" y="384" font-size="2.7" fill="#222" font-weight="bold">H8</text>
<path d="M795.5 387.5L870.4 387.5" stroke="#989898" stroke-width="1"/>
<rect x="870.6" y="385.8" width="5.4" height="2.6" fill="#fff" stroke="#9a9a9a" stroke-width="0.5" rx="0.8"/>
<text x="878" y="388.1" font-size="2.9" fill="#3030b4" font-weight="bold" textLength="19" lengthAdjust="spacingAndGlyphs">AU_VIN0_P</text>
<path d="M878 388.6L897 388.6" stroke="#8a8ad8" stroke-width="0.35"/>
<text x="903.5" y="388" font-size="2.9" fill="#555">10</text>
<text x="797" y="386.9" font-size="2.7" fill="#222" font-weight="bold">R15</text>
<path d="M795.5 398.5L870.4 398.5" stroke="#989898" stroke-width="1"/>
<rect x="870.6" y="397.3" width="5.4" height="2.6" fill="#fff" stroke="#9a9a9a" stroke-width="0.5" rx="0.8"/>
<text x="878" y="399.6" font-size="2.9" fill="#3030b4" font-weight="bold" textLength="15.8" lengthAdjust="spacingAndGlyphs">SPK_P_CA</text>
<path d="M878 400.1L893.8 400.1" stroke="#8a8ad8" stroke-width="0.35"/>
<text x="903.5" y="399.5" font-size="2.9" fill="#555">7</text>
<text x="797" y="398.4" font-size="2.7" fill="#222" font-weight="bold">AC23</text>
<path d="M795.5 401.5L870.4 401.5" stroke="#989898" stroke-width="1"/>
<rect x="870.6" y="400.2" width="5.4" height="2.6" fill="#fff" stroke="#9a9a9a" stroke-width="0.5" rx="0.8"/>
<text x="878" y="402.5" font-size="2.9" fill="#3030b4" font-weight="bold" textLength="14.7" lengthAdjust="spacingAndGlyphs">MSDC1_DA</text>
<path d="M878 403L892.7 403" stroke="#8a8ad8" stroke-width="0.35"/>
<text x="903.5" y="402.4" font-size="2.9" fill="#555">12</text>
<text x="797" y="401.3" font-size="2.7" fill="#222" font-weight="bold">L11</text>
<path d="M795.5 404.5L870.4 404.5" stroke="#989898" stroke-width="1"/>
<rect x="870.6" y="403.1" width="5.4" height="2.6" fill="#fff" stroke="#9a9a9a" stroke-width="0.5" rx="0.8"/>
<text x="878" y="405.4" font-size="2.9" fill="#3030b4" font-weight="bold" textLength="15.3" lengthAdjust="spacingAndGlyphs">USB_DP_S</text>
<path d="M878 405.9L893.3 405.9" stroke="#8a8ad8" stroke-width="0.35"/>
<text x="903.5" y="405.3" font-size="2.9" fill="#555">12</text>
<text x="797" y="404.2" font-size="2.7" fill="#222" font-weight="bold">B2</text>
<path d="M795.5 410.5L870.4 410.5" stroke="#989898" stroke-width="1"/>
<rect x="870.6" y="408.9" width="5.4" height="2.6" fill="#fff" stroke="#9a9a9a" stroke-width="0.5" rx="0.8"/>
<text x="878" y="411.2" font-size="2.9" fill="#3030b4" font-weight="bold" textLength="15.3" lengthAdjust="spacingAndGlyphs">URXD0_MS</text>
<path d="M878 411.7L893.3 411.7" stroke="#8a8ad8" stroke-width="0.35"/>
<text x="903.5" y="411.1" font-size="2.9" fill="#555">12</text>
<text x="797" y="410" font-size="2.7" fill="#222" font-weight="bold">T16</text>
<path d="M795.5 413.5L870.4 413.5" stroke="#989898" stroke-width="1"/>
<rect x="870.6" y="411.8" width="5.4" height="2.6" fill="#fff" stroke="#9a9a9a" stroke-width="0.5" rx="0.8"/>
<text x="878" y="414.1" font-size="2.9" fill="#3030b4" font-weight="bold" textLength="13.7" lengthAdjust="spacingAndGlyphs">WATCHDO</text>
<path d="M878 414.6L891.7 414.6" stroke="#8a8ad8" stroke-width="0.35"/>
<text x="903.5" y="414" font-size="2.9" fill="#555">13</text>
<text x="797" y="412.9" font-size="2.7" fill="#222" font-weight="bold">W19</text>
<path d="M795.5 416.5L870.4 416.5" stroke="#989898" stroke-width="1"/>
<rect x="870.6" y="414.7" width="5.4" height="2.6" fill="#fff" stroke="#9a9a9a" stroke-width="0.5" rx="0.8"/>
<text x="878" y="417" font-size="2.9" fill="#3030b4" font-weight="bold" textLength="14.2" lengthAdjust="spacingAndGlyphs">TX_BB_I</text>
<path d="M878 417.5L892.2 417.5" stroke="#8a8ad8" stroke-width="0.35"/>
<text x="903.5" y="416.9" font-size="2.9" fill="#555">11</text>
<text x="797" y="415.8" font-size="2.7" fill="#222" font-weight="bold">A1</text>
<path d="M795.5 421.5L870.4 421.5" stroke="#989898" stroke-width="1"/>
<rect x="870.6" y="420.5" width="5.4" height="2.6" fill="#fff" stroke="#9a9a9a" stroke-width="0.5" rx="0.8"/>
<text x="878" y="422.8" font-size="2.9" fill="#3030b4" font-weight="bold" textLength="15" lengthAdjust="spacingAndGlyphs">SRCLKENA</text>
<path d="M878 423.3L893 423.3" stroke="#8a8ad8" stroke-width="0.35"/>
<text x="903.5" y="422.7" font-size="2.9" fill="#555">13</text>
<text x="797" y="421.6" font-size="2.7" fill="#222" font-weight="bold">AC23</text>
<path d="M795.5 424.5L870.4 424.5" stroke="#989898" stroke-width="1"/>
<rect x="870.6" y="423.4" width="5.4" height="2.6" fill="#fff" stroke="#9a9a9a" stroke-width="0.5" rx="0.8"/>
<text x="878" y="425.7" font-size="2.9" fill="#3030b4" font-weight="bold" textLength="13.7" lengthAdjust="spacingAndGlyphs">KPROW0</text>
<path d="M878 426.2L891.7 426.2" stroke="#8a8ad8" stroke-width="0.35"/>
<text x="903.5" y="425.6" font-size="2.9" fill="#555">7</text>
<text x="797" y="424.5" font-size="2.7" fill="#222" font-weight="bold">V18</text>
<path d="M795.5 427.5L870.4 427.5" stroke="#989898" stroke-width="1"/>
<rect x="870.6" y="426.3" width="5.4" height="2.6" fill="#fff" stroke="#9a9a9a" stroke-width="0.5" rx="0.8"/>
<text x="878" y="428.6" font-size="2.9" fill="#3030b4" font-weight="bold" textLength="22" lengthAdjust="spacingAndGlyphs">VM0_I2C_SCL0</text>
<path d="M878 429.1L900 429.1" stroke="#8a8ad8" stroke-width="0.35"/>
<text x="903.5" y="428.5" font-size="2.9" fill="#555">7</text>
<text x="797" y="427.4" font-size="2.7" fill="#222" font-weight="bold">H8</text>
<path d="M795.5 435.5L870.4 435.5" stroke="#989898" stroke-width="1"/>
<rect x="870.6" y="434.5" width="5.4" height="2.6" fill="#fff" stroke="#9a9a9a" stroke-width="0.5" rx="0.8"/>
<text x="878" y="436.8" font-size="2.9" fill="#3030b4" font-weight="bold" textLength="14" lengthAdjust="spacingAndGlyphs">MIPI_TC</text>
<path d="M878 437.3L892 437.3" stroke="#8a8ad8" stroke-width="0.35"/>
<text x="903.5" y="436.7" font-size="2.9" fill="#555">11</text>
<text x="797" y="435.6" font-size="2.7" fill="#222" font-weight="bold">U17</text>
<path d="M795.5 438.5L870.4 438.5" stroke="#989898" stroke-width="1"/>
<rect x="870.6" y="437.4" width="5.4" height="2.6" fill="#fff" stroke="#9a9a9a" stroke-width="0.5" rx="0.8"/>
<text x="878" y="439.7" font-size="2.9" fill="#3030b4" font-weight="bold" textLength="17" lengthAdjust="spacingAndGlyphs">BPI_BUS0</text>
<path d="M878 440.2L895 440.2" stroke="#8a8ad8" stroke-width="0.35"/>
<text x="903.5" y="439.6" font-size="2.9" fill="#555">10</text>
<text x="797" y="438.5" font-size="2.7" fill="#222" font-weight="bold">L11</text>
<path d="M795.5 441.5L870.4 441.5" stroke="#989898" stroke-width="1"/>
<rect x="870.6" y="440.3" width="5.4" height="2.6" fill="#fff" stroke="#9a9a9a" stroke-width="0.5" rx="0.8"/>
<text x="878" y="442.6" font-size="2.9" fill="#3030b4" font-weight="bold" textLength="21" lengthAdjust="spacingAndGlyphs">SIM1_SRST_M</text>
<path d="M878 443.1L899 443.1" stroke="#8a8ad8" stroke-width="0.35"/>
<text x="903.5" y="442.5" font-size="2.9" fill="#555">11</text>
<text x="797" y="441.4" font-size="2.7" fill="#222" font-weight="bold">M12</text>
<path d="M864 450.5L870.4 450.5" stroke="#989898" stroke-width="1"/>
<rect x="870.6" y="449.2" width="5.4" height="2.6" fill="#fff" stroke="#9a9a9a" stroke-width="0.5" rx="0.8"/>
<text x="878" y="451.5" font-size="2.9" fill="#3030b4" font-weight="bold" textLength="14" lengthAdjust="spacingAndGlyphs">SIM1_SI</text>
<path d="M878 452L892 452" stroke="#8a8ad8" stroke-width="0.35"/>
<text x="903.5" y="451.4" font-size="2.9" fill="#555">12</text>
<text x="797" y="450.3" font-size="2.7" fill="#222" font-weight="bold">AD24</text>
<path d="M795.5 453.5L870.4 453.5" stroke="#989898" stroke-width="1"/>
<rect x="870.6" y="452.2" width="5.4" height="2.6" fill="#fff" stroke="#9a9a9a" stroke-width="0.5" rx="0.8"/>
<text x="878" y="454.5" font-size="2.9" fill="#3030b4" font-weight="bold" textLength="14" lengthAdjust="spacingAndGlyphs">MSDC1_C</text>
<path d="M878 455L892 455" stroke="#8a8ad8" stroke-width="0.35"/>
<text x="903.5" y="454.4" font-size="2.9" fill="#555">12</text>
<text x="797" y="453.3" font-size="2.7" fill="#222" font-weight="bold">N13</text>
<path d="M795.5 455.5L870.4 455.5" stroke="#989898" stroke-width="1"/>
<rect x="870.6" y="454.3" width="5.4" height="2.6" fill="#fff" stroke="#9a9a9a" stroke-width="0.5" rx="0.8"/>
<text x="878" y="456.6" font-size="2.9" fill="#3030b4" font-weight="bold" textLength="14" lengthAdjust="spacingAndGlyphs">SPK_P_U</text>
<path d="M878 457.1L892 457.1" stroke="#8a8ad8" stroke-width="0.35"/>
<text x="903.5" y="456.5" font-size="2.9" fill="#555">7</text>
<text x="797" y="455.4" font-size="2.7" fill="#222" font-weight="bold">A1</text>
<path d="M864 462.5L870.4 462.5" stroke="#989898" stroke-width="1"/>
<rect x="870.6" y="460.8" width="5.4" height="2.6" fill="#fff" stroke="#9a9a9a" stroke-width="0.5" rx="0.8"/>
<text x="878" y="463.1" font-size="2.9" fill="#3030b4" font-weight="bold" textLength="14" lengthAdjust="spacingAndGlyphs">SPI0_MO</text>
<path d="M878 463.6L892 463.6" stroke="#8a8ad8" stroke-width="0.35"/>
<text x="903.5" y="463" font-size="2.9" fill="#555">7</text>
<text x="797" y="461.9" font-size="2.7" fill="#222" font-weight="bold">N13</text>
<path d="M795.5 464.5L870.4 464.5" stroke="#989898" stroke-width="1"/>
<rect x="870.6" y="463.4" width="5.4" height="2.6" fill="#fff" stroke="#9a9a9a" stroke-width="0.5" rx="0.8"/>
<text x="878" y="465.7" font-size="2.9" fill="#3030b4" font-weight="bold" textLength="14" lengthAdjust="spacingAndGlyphs">AU_VIN0</text>
<path d="M878 466.2L892 466.2" stroke="#8a8ad8" stroke-width="0.35"/>
<text x="903.5" y="465.6" font-size="2.9" fill="#555">10</text>
<text x="797" y="464.5" font-size="2.7" fill="#222" font-weight="bold">P14</text>
<path d="M795.5 467.5L870.4 467.5" stroke="#989898" stroke-width="1"/>
<rect x="870.6" y="466" width="5.4" height="2.6" fill="#fff" stroke="#9a9a9a" stroke-width="0.5" rx="0.8"/>
<text x="878" y="468.3" font-size="2.9" fill="#3030b4" font-weight="bold" textLength="14" lengthAdjust="spacingAndGlyphs">AU_VIN0</text>
<path d="M878 468.8L892 468.8" stroke="#8a8ad8" stroke-width="0.35"/>
<text x="903.5" y="468.2" font-size="2.9" fill="#555">12</text>
<text x="797" y="467.1" font-size="2.7" fill="#222" font-weight="bold">W19</text>
<path d="M864 473.5L870.4 473.5" stroke="#989898" stroke-width="1"/>
<rect x="870.6" y="472.1" width="5.4" height="2.6" fill="#fff" stroke="#9a9a9a" stroke-width="0.5" rx="0.8"/>
<text x="878" y="474.4" font-size="2.9" fill="#3030b4" font-weight="bold" textLength="14" lengthAdjust="spacingAndGlyphs">TX_BB_I</text>
<path d="M878 474.9L892 474.9" stroke="#8a8ad8" stroke-width="0.35"/>
<text x="903.5" y="474.3" font-size="2.9" fill="#555">11</text>
<text x="797" y="473.2" font-size="2.7" fill="#222" font-weight="bold">W19</text>
<path d="M795.5 476.5L870.4 476.5" stroke="#989898" stroke-width="1"/>
<rect x="870.6" y="474.8" width="5.4" height="2.6" fill="#fff" stroke="#9a9a9a" stroke-width="0.5" rx="0.8"/>
<text x="878" y="477.1" font-size="2.9" fill="#3030b4" font-weight="bold" textLength="14" lengthAdjust="spacingAndGlyphs">GPIO_LC</text>
<path d="M878 477.6L892 477.6" stroke="#8a8ad8" stroke-width="0.35"/>
<text x="903.5" y="477" font-size="2.9" fill="#555">13</text>
<text x="797" y="475.9" font-size="2.7" fill="#222" font-weight="bold">R15</text>
<path d="M795.5 478.5L870.4 478.5" stroke="#989898" stroke-width="1"/>
<rect x="870.6" y="477.1" width="5.4" height="2.6" fill="#fff" stroke="#9a9a9a" stroke-width="0.5" rx="0.8"/>
<text x="878" y="479.4" font-size="2.9" fill="#3030b4" font-weight="bold" textLength="14" lengthAdjust="spacingAndGlyphs">SPI0_MI</text>
<path d="M878 479.9L892 479.9" stroke="#8a8ad8" stroke-width="0.35"/>
<text x="903.5" y="479.3" font-size="2.9" fill="#555">11</text>
<text x="797" y="478.2" font-size="2.7" fill="#222" font-weight="bold">R15</text>
<path d="M795.5 487.5L870.4 487.5" stroke="#989898" stroke-width="1"/>
<rect x="870.6" y="486" width="5.4" height="2.6" fill="#fff" stroke="#9a9a9a" stroke-width="0.5" rx="0.8"/>
<text x="878" y="488.3" font-size="2.9" fill="#3030b4" font-weight="bold" textLength="10" lengthAdjust="spacingAndGlyphs">VM1_M</text>
<path d="M878 488.8L888 488.8" stroke="#8a8ad8" stroke-width="0.35"/>
<text x="903.5" y="488.2" font-size="2.9" fill="#555">7</text>
<text x="797" y="487.1" font-size="2.7" fill="#222" font-weight="bold">B2</text>
<path d="M795.5 490.5L870.4 490.5" stroke="#989898" stroke-width="1"/>
<rect x="870.6" y="488.9" width="5.4" height="2.6" fill="#fff" stroke="#9a9a9a" stroke-width="0.5" rx="0.8"/>
<text x="878" y="491.2" font-size="2.9" fill="#3030b4" font-weight="bold" textLength="10" lengthAdjust="spacingAndGlyphs">KPROW</text>
<path d="M878 491.7L888 491.7" stroke="#8a8ad8" stroke-width="0.35"/>
<text x="903.5" y="491.1" font-size="2.9" fill="#555">7</text>
<text x="797" y="490" font-size="2.7" fill="#222" font-weight="bold">AC23</text>
<path d="M795.5 493.5L870.4 493.5" stroke="#989898" stroke-width="1"/>
<rect x="870.6" y="491.8" width="5.4" height="2.6" fill="#fff" stroke="#9a9a9a" stroke-width="0.5" rx="0.8"/>
<text x="878" y="494.1" font-size="2.9" fill="#3030b4" font-weight="bold" textLength="12.6" lengthAdjust="spacingAndGlyphs">ACCDET</text>
<path d="M878 494.6L890.6 494.6" stroke="#8a8ad8" stroke-width="0.35"/>
<text x="903.5" y="494" font-size="2.9" fill="#555">10</text>
<text x="797" y="492.9" font-size="2.7" fill="#222" font-weight="bold">H8</text>
<path d="M795.5 496.5L870.4 496.5" stroke="#989898" stroke-width="1"/>
<rect x="870.6" y="494.7" width="5.4" height="2.6" fill="#fff" stroke="#9a9a9a" stroke-width="0.5" rx="0.8"/>
<text x="878" y="497" font-size="2.9" fill="#3030b4" font-weight="bold" textLength="13" lengthAdjust="spacingAndGlyphs">BSI_CLK</text>
<path d="M878 497.5L891 497.5" stroke="#8a8ad8" stroke-width="0.35"/>
<text x="903.5" y="496.9" font-size="2.9" fill="#555">13</text>
<text x="797" y="495.8" font-size="2.7" fill="#222" font-weight="bold">Y20</text>
<path d="M795.5 498.5L870.4 498.5" stroke="#989898" stroke-width="1"/>
<rect x="870.6" y="497.6" width="5.4" height="2.6" fill="#fff" stroke="#9a9a9a" stroke-width="0.5" rx="0.8"/>
<text x="878" y="499.9" font-size="2.9" fill="#3030b4" font-weight="bold" textLength="21" lengthAdjust="spacingAndGlyphs">KPCOL0_SPI0</text>
<path d="M878 500.4L899 500.4" stroke="#8a8ad8" stroke-width="0.35"/>
<text x="903.5" y="499.8" font-size="2.9" fill="#555">11</text>
<text x="797" y="498.7" font-size="2.7" fill="#222" font-weight="bold">K10</text>
<path d="M795.5 507.5L870.4 507.5" stroke="#989898" stroke-width="1"/>
<rect x="870.6" y="506.1" width="5.4" height="2.6" fill="#fff" stroke="#9a9a9a" stroke-width="0.5" rx="0.8"/>
<text x="878" y="508.4" font-size="2.9" fill="#3030b4" font-weight="bold" textLength="10" lengthAdjust="spacingAndGlyphs">EINT</text>
<path d="M878 508.9L888 508.9" stroke="#8a8ad8" stroke-width="0.35"/>
<text x="903.5" y="508.3" font-size="2.9" fill="#555">13</text>
<text x="797" y="507.2" font-size="2.7" fill="#222" font-weight="bold">AA21</text>
<path d="M795.5 519.5L870.4 519.5" stroke="#989898" stroke-width="1"/>
<rect x="870.6" y="518" width="5.4" height="2.6" fill="#fff" stroke="#9a9a9a" stroke-width="0.5" rx="0.8"/>
<text x="878" y="520.3" font-size="2.9" fill="#3030b4" font-weight="bold" textLength="23" lengthAdjust="spacingAndGlyphs">RESETB_GPIO</text>
<path d="M878 520.8L901 520.8" stroke="#8a8ad8" stroke-width="0.35"/>
<text x="903.5" y="520.2" font-size="2.9" fill="#555">13</text>
<text x="797" y="519.1" font-size="2.7" fill="#222" font-weight="bold">Y20</text>
<path d="M795.5 547.5L870.4 547.5" stroke="#989898" stroke-width="1"/>
<rect x="870.6" y="546.6" width="5.4" height="2.6" fill="#fff" stroke="#9a9a9a" stroke-width="0.5" rx="0.8"/>
<text x="878" y="548.9" font-size="2.9" fill="#3030b4" font-weight="bold" textLength="16" lengthAdjust="spacingAndGlyphs">VSYS_UTX</text>
<path d="M878 549.4L894 549.4" stroke="#8a8ad8" stroke-width="0.35"/>
<text x="903.5" y="548.8" font-size="2.9" fill="#555">12</text>
<text x="797" y="547.7" font-size="2.7" fill="#222" font-weight="bold">R15</text>
<path d="M795.5 550.5L870.4 550.5" stroke="#989898" stroke-width="1"/>
<rect x="870.6" y="549.5" width="5.4" height="2.6" fill="#fff" stroke="#9a9a9a" stroke-width="0.5" rx="0.8"/>
<text x="878" y="551.8" font-size="2.9" fill="#3030b4" font-weight="bold" textLength="12" lengthAdjust="spacingAndGlyphs">I2C_SD</text>
<path d="M878 552.3L890 552.3" stroke="#8a8ad8" stroke-width="0.35"/>
<text x="903.5" y="551.7" font-size="2.9" fill="#555">7</text>
<text x="797" y="550.6" font-size="2.7" fill="#222" font-weight="bold">AA21</text>
<path d="M795.5 553.5L870.4 553.5" stroke="#989898" stroke-width="1"/>
<rect x="870.6" y="552.3" width="5.4" height="2.6" fill="#fff" stroke="#9a9a9a" stroke-width="0.5" rx="0.8"/>
<text x="878" y="554.6" font-size="2.9" fill="#3030b4" font-weight="bold" textLength="12" lengthAdjust="spacingAndGlyphs">SIM1_S</text>
<path d="M878 555.1L890 555.1" stroke="#8a8ad8" stroke-width="0.35"/>
<text x="903.5" y="554.5" font-size="2.9" fill="#555">10</text>
<text x="797" y="553.4" font-size="2.7" fill="#222" font-weight="bold">K10</text>
<path d="M795.5 562.5L870.4 562.5" stroke="#989898" stroke-width="1"/>
<rect x="870.6" y="561.3" width="5.4" height="2.6" fill="#fff" stroke="#9a9a9a" stroke-width="0.5" rx="0.8"/>
<text x="878" y="563.6" font-size="2.9" fill="#3030b4" font-weight="bold" textLength="14" lengthAdjust="spacingAndGlyphs">KPCOL0</text>
<path d="M878 564.1L892 564.1" stroke="#8a8ad8" stroke-width="0.35"/>
<text x="903.5" y="563.5" font-size="2.9" fill="#555">11</text>
<text x="797" y="562.4" font-size="2.7" fill="#222" font-weight="bold">AB22</text>
<path d="M795.5 565.5L870.4 565.5" stroke="#989898" stroke-width="1"/>
<rect x="870.6" y="564.1" width="5.4" height="2.6" fill="#fff" stroke="#9a9a9a" stroke-width="0.5" rx="0.8"/>
<text x="878" y="566.4" font-size="2.9" fill="#3030b4" font-weight="bold" textLength="14" lengthAdjust="spacingAndGlyphs">AU_VIN0</text>
<path d="M878 566.9L892 566.9" stroke="#8a8ad8" stroke-width="0.35"/>
<text x="903.5" y="566.3" font-size="2.9" fill="#555">11</text>
<text x="797" y="565.2" font-size="2.7" fill="#222" font-weight="bold">W19</text>
<path d="M795.5 616.5L870.4 616.5" stroke="#989898" stroke-width="1"/>
<rect x="870.6" y="615.1" width="5.4" height="2.6" fill="#fff" stroke="#9a9a9a" stroke-width="0.5" rx="0.8"/>
<text x="878" y="617.4" font-size="2.9" fill="#3030b4" font-weight="bold" textLength="11" lengthAdjust="spacingAndGlyphs">MIPI_T</text>
<path d="M878 617.9L889 617.9" stroke="#8a8ad8" stroke-width="0.35"/>
<text x="903.5" y="617.3" font-size="2.9" fill="#555">13</text>
<text x="797" y="616.2" font-size="2.7" fill="#222" font-weight="bold">AB22</text>
<path d="M795.5 619.5L870.4 619.5" stroke="#989898" stroke-width="1"/>
<rect x="870.6" y="618.1" width="5.4" height="2.6" fill="#fff" stroke="#9a9a9a" stroke-width="0.5" rx="0.8"/>
<text x="878" y="620.4" font-size="2.9" fill="#3030b4" font-weight="bold" textLength="11" lengthAdjust="spacingAndGlyphs">MIPI_T</text>
<path d="M878 620.9L889 620.9" stroke="#8a8ad8" stroke-width="0.35"/>
<text x="903.5" y="620.3" font-size="2.9" fill="#555">11</text>
<text x="797" y="619.2" font-size="2.7" fill="#222" font-weight="bold">P14</text>
<path d="M795.5 628.5L870.4 628.5" stroke="#989898" stroke-width="1"/>
<rect x="870.6" y="627.4" width="5.4" height="2.6" fill="#fff" stroke="#9a9a9a" stroke-width="0.5" rx="0.8"/>
<text x="878" y="629.7" font-size="2.9" fill="#3030b4" font-weight="bold" textLength="11" lengthAdjust="spacingAndGlyphs">RESETB</text>
<path d="M878 630.2L889 630.2" stroke="#8a8ad8" stroke-width="0.35"/>
<text x="903.5" y="629.6" font-size="2.9" fill="#555">13</text>
<text x="797" y="628.5" font-size="2.7" fill="#222" font-weight="bold">G7</text>
<path d="M795.5 642.5L870.4 642.5" stroke="#989898" stroke-width="1"/>
<rect x="870.6" y="641.1" width="5.4" height="2.6" fill="#fff" stroke="#9a9a9a" stroke-width="0.5" rx="0.8"/>
<text x="878" y="643.4" font-size="2.9" fill="#3030b4" font-weight="bold" textLength="13" lengthAdjust="spacingAndGlyphs">VM1_CAM</text>
<path d="M878 643.9L891 643.9" stroke="#8a8ad8" stroke-width="0.35"/>
<text x="903.5" y="643.3" font-size="2.9" fill="#555">13</text>
<text x="797" y="642.2" font-size="2.7" fill="#222" font-weight="bold">J9</text>
<path d="M795.5 648.5L870.4 648.5" stroke="#989898" stroke-width="1"/>
<rect x="870.6" y="647.2" width="5.4" height="2.6" fill="#fff" stroke="#9a9a9a" stroke-width="0.5" rx="0.8"/>
<text x="878" y="649.5" font-size="2.9" fill="#3030b4" font-weight="bold" textLength="18" lengthAdjust="spacingAndGlyphs">AU_VIN0_P</text>
<path d="M878 650L896 650" stroke="#8a8ad8" stroke-width="0.35"/>
<text x="903.5" y="649.4" font-size="2.9" fill="#555">11</text>
<text x="797" y="648.3" font-size="2.7" fill="#222" font-weight="bold">R15</text>
<text x="893" y="451.1" font-size="2.9" fill="#555">1,2,3,7,8,10</text>
<text x="893" y="462.7" font-size="2.9" fill="#555">1,2,3,7,8,10</text>
<text x="893" y="474" font-size="2.9" fill="#555">1,2,3,7,8,10</text>
<rect x="828" y="346" width="22" height="5" fill="#fffff0" stroke="none" stroke-width="1"/>
<text x="829" y="348.9" font-size="2.5" fill="#222">R1005</text>
<text x="845" y="348.9" font-size="2.5" fill="#222">0R</text>
<path d="M836.5 349.5L837.5 350.7L838.5 348.5L839.5 350.7L840.5 348.5L841.5 349.5" stroke="#555" stroke-width="0.5" fill="none"/>
<rect x="835.2" y="447.6" width="30" height="34.4" fill="#fafa9a" stroke="#e0e070" stroke-width="0.6" fill-opacity=".6"/>
<text x="838.5" y="450.9" font-size="2.5" fill="#222">47K</text>
<text x="855" y="450.7" font-size="2.5" fill="#222">R1012</text>
<path d="M846 450.5L847 451.7L848 449.5L849 451.7L850 449.5L851 450.5" stroke="#555" stroke-width="0.5" fill="none"/>
<circle cx="836.6" cy="450.5" r="0.35" fill="#333" stroke="none" stroke-width="0.7"/>
<text x="838.5" y="457.9" font-size="2.5" fill="#222">47K</text>
<text x="855" y="457.7" font-size="2.5" fill="#222">R1012</text>
<path d="M846 457.5L847 458.7L848 456.5L849 458.7L850 456.5L851 457.5" stroke="#555" stroke-width="0.5" fill="none"/>
<circle cx="836.6" cy="457.5" r="0.35" fill="#333" stroke="none" stroke-width="0.7"/>
<text x="838.5" y="460.9" font-size="2.5" fill="#222">47K</text>
<text x="855" y="460.7" font-size="2.5" fill="#222">R1012</text>
<path d="M846 460.5L847 461.7L848 459.5L849 461.7L850 459.5L851 460.5" stroke="#555" stroke-width="0.5" fill="none"/>
<circle cx="836.6" cy="460.5" r="0.35" fill="#333" stroke="none" stroke-width="0.7"/>
<text x="838.5" y="468.9" font-size="2.5" fill="#222">47K</text>
<text x="855" y="468.7" font-size="2.5" fill="#222">R1012</text>
<path d="M846 468.5L847 469.7L848 467.5L849 469.7L850 467.5L851 468.5" stroke="#555" stroke-width="0.5" fill="none"/>
<circle cx="836.6" cy="468.5" r="0.35" fill="#333" stroke="none" stroke-width="0.7"/>
<text x="838.5" y="471.9" font-size="2.5" fill="#222">47K</text>
<text x="855" y="471.7" font-size="2.5" fill="#222">R1012</text>
<path d="M846 471.5L847 472.7L848 470.5L849 472.7L850 470.5L851 471.5" stroke="#555" stroke-width="0.5" fill="none"/>
<circle cx="836.6" cy="471.5" r="0.35" fill="#333" stroke="none" stroke-width="0.7"/>
<text x="838.5" y="480.9" font-size="2.5" fill="#222">47K</text>
<text x="855" y="480.7" font-size="2.5" fill="#222">R1012</text>
<path d="M846 480.5L847 481.7L848 479.5L849 481.7L850 479.5L851 480.5" stroke="#555" stroke-width="0.5" fill="none"/>
<circle cx="836.6" cy="480.5" r="0.35" fill="#333" stroke="none" stroke-width="0.7"/>
<path d="M837.6 449L837.6 481" stroke="#888" stroke-width="0.5"/>
<path d="M864 450.5L864 480" stroke="#888" stroke-width="0.5"/>
<rect x="826" y="614" width="26" height="7.5" fill="#fafac8" stroke="none" stroke-width="1"/>
<rect x="826" y="625.5" width="26" height="5" fill="#fffff0" stroke="none" stroke-width="1"/>
<text x="827" y="617" font-size="2.5" fill="#222">R1030</text>
<text x="846" y="617" font-size="2.5" fill="#222">22R</text>
<path d="M836 616.4L837 617.5L838 615.4L839 617.5L840 615.4L841 616.4" stroke="#555" stroke-width="0.5" fill="none"/>
<text x="827" y="620" font-size="2.5" fill="#222">R1030</text>
<text x="846" y="620" font-size="2.5" fill="#222">22R</text>
<path d="M836 619.4L837 620.5L838 618.4L839 620.5L840 618.4L841 619.4" stroke="#555" stroke-width="0.5" fill="none"/>
<text x="827" y="628.2" font-size="2.5" fill="#222">R1032</text>
<text x="846" y="628.2" font-size="2.5" fill="#222">10R</text>
<path d="M836 628.7L837 629.8L838 627.7L839 629.8L840 627.7L841 628.7" stroke="#555" stroke-width="0.5" fill="none"/>
<text x="809" y="617.5" font-size="2.9" fill="#2828a8" font-weight="bold" textLength="11" lengthAdjust="spacingAndGlyphs">MSDC1</text>
<text x="809" y="620.3" font-size="2.9" fill="#2828a8" font-weight="bold" textLength="11" lengthAdjust="spacingAndGlyphs">SPI0_M</text>
<text x="809" y="628.5" font-size="2.9" fill="#2828a8" font-weight="bold" textLength="14" lengthAdjust="spacingAndGlyphs">KPROW0</text>
<text x="809" y="631.1" font-size="2.9" fill="#2828a8" font-weight="bold" textLength="13" lengthAdjust="spacingAndGlyphs">SPI0_CL</text>
<text x="794" y="350.5" font-size="2.9" fill="#1c1c1c" text-anchor="end" textLength="26" lengthAdjust="spacingAndGlyphs">SPI0_MOSI/BPI_B</text>
<text x="794" y="353.4" font-size="2.9" fill="#1c1c1c" text-anchor="end" textLength="24" lengthAdjust="spacingAndGlyphs">AU_VIN0_P/SPK</text>
<text x="797" y="352.2" font-size="2.7" fill="#222" font-weight="bold">T16</text>
<path d="M795.5 352.5L799 352.5" stroke="#666" stroke-width="0.5"/>
<text x="794" y="356.3" font-size="2.9" fill="#1c1c1c" text-anchor="end" textLength="24" lengthAdjust="spacingAndGlyphs">AU_VIN0_P/CHD</text>
<text x="794" y="359.2" font-size="2.9" fill="#1c1c1c" text-anchor="end" textLength="24" lengthAdjust="spacingAndGlyphs">URXD0/USB_DP/I</text>
<text x="794" y="362.1" font-size="2.9" fill="#1c1c1c" text-anchor="end" textLength="24" lengthAdjust="spacingAndGlyphs">WATCHDOG/SRCLK</text>
<text x="794" y="365" font-size="2.9" fill="#1c1c1c" text-anchor="end" textLength="24" lengthAdjust="spacingAndGlyphs">MSDC1_DAT3/WAT</text>
<text x="794" y="367.9" font-size="2.9" fill="#1c1c1c" text-anchor="end" textLength="26" lengthAdjust="spacingAndGlyphs">CHD_DM/ACCDET/M</text>
<text x="794" y="376.5" font-size="2.9" fill="#1c1c1c" text-anchor="end" textLength="64" lengthAdjust="spacingAndGlyphs">AU_VIN0_P/SIM1_SCLK/BSI_CLK/CAM_PDN/U</text>
<text x="794" y="379.4" font-size="2.9" fill="#1c1c1c" text-anchor="end" textLength="52" lengthAdjust="spacingAndGlyphs">SIM1_SRST/CAM_RST/BPI_BUS0/BPI</text>
<text x="794" y="382.3" font-size="2.9" fill="#1c1c1c" text-anchor="end" textLength="54" lengthAdjust="spacingAndGlyphs">RESETB/MIPI_TDP0/MSDC1_DAT1/MSD</text>
<text x="794" y="385.2" font-size="2.9" fill="#1c1c1c" text-anchor="end" textLength="56" lengthAdjust="spacingAndGlyphs">SPI0_CS/MIPI_TDP0/SPI0_CLK/EINT</text>
<text x="794" y="388.1" font-size="2.9" fill="#1c1c1c" text-anchor="end" textLength="50" lengthAdjust="spacingAndGlyphs">RESETB/VM0/KPROW0/MSDC1_DAT3</text>
<text x="794" y="391" font-size="2.9" fill="#1c1c1c" text-anchor="end" textLength="38" lengthAdjust="spacingAndGlyphs">SPI0_CS/GPIO_LCD_RST/W</text>
<text x="797" y="389.8" font-size="2.7" fill="#222" font-weight="bold">L11</text>
<path d="M795.5 390.1L799 390.1" stroke="#666" stroke-width="0.5"/>
<text x="794" y="399.6" font-size="2.9" fill="#1c1c1c" text-anchor="end" textLength="22" lengthAdjust="spacingAndGlyphs">AU_VIN0_P/WAT</text>
<text x="794" y="402.5" font-size="2.9" fill="#1c1c1c" text-anchor="end" textLength="22" lengthAdjust="spacingAndGlyphs">PWM_BL/VSYS/U</text>
<text x="794" y="405.4" font-size="2.9" fill="#1c1c1c" text-anchor="end" textLength="22" lengthAdjust="spacingAndGlyphs">BSI_CLK/PWM_B</text>
<text x="794" y="411.2" font-size="2.9" fill="#1c1c1c" text-anchor="end" textLength="22" lengthAdjust="spacingAndGlyphs">SPI0_MISO/USB</text>
<text x="794" y="414.1" font-size="2.9" fill="#1c1c1c" text-anchor="end" textLength="20" lengthAdjust="spacingAndGlyphs">MIPI_TCN/MI</text>
<text x="794" y="417" font-size="2.9" fill="#1c1c1c" text-anchor="end" textLength="22" lengthAdjust="spacingAndGlyphs">KPCOL0/USB_DP</text>
<text x="794" y="422.8" font-size="2.9" fill="#1c1c1c" text-anchor="end" textLength="48" lengthAdjust="spacingAndGlyphs">SPI0_CLK/KPROW0/MSDC1_CMD/SI</text>
<text x="794" y="425.7" font-size="2.9" fill="#1c1c1c" text-anchor="end" textLength="48" lengthAdjust="spacingAndGlyphs">SPK_P/SIM1_SIO/URXD0/SPI0_MI</text>
<text x="794" y="428.6" font-size="2.9" fill="#1c1c1c" text-anchor="end" textLength="36" lengthAdjust="spacingAndGlyphs">SIM1_SCLK/CAM_PDN/MSD</text>
<text x="794" y="436.8" font-size="2.9" fill="#1c1c1c" text-anchor="end" textLength="25" lengthAdjust="spacingAndGlyphs">MIPI_TCN/SPI0</text>
<text x="794" y="439.65" font-size="2.9" fill="#1c1c1c" text-anchor="end" textLength="22" lengthAdjust="spacingAndGlyphs">SIM1_SRST/MSD</text>
<text x="794" y="442.5" font-size="2.9" fill="#1c1c1c" text-anchor="end" textLength="24" lengthAdjust="spacingAndGlyphs">GPIO_LCD_RST/C</text>
<text x="794" y="445.35" font-size="2.9" fill="#1c1c1c" text-anchor="end" textLength="24" lengthAdjust="spacingAndGlyphs">KPCOL0/AU_VIN0</text>
<text x="797" y="444.15" font-size="2.7" fill="#222" font-weight="bold">C3</text>
<path d="M795.5 444.45L799 444.45" stroke="#666" stroke-width="0.5"/>
<text x="794" y="454.5" font-size="2.9" fill="#1c1c1c" text-anchor="end" textLength="18" lengthAdjust="spacingAndGlyphs">CAM_RST/UR</text>
<text x="794" y="457.2" font-size="2.9" fill="#1c1c1c" text-anchor="end" textLength="22" lengthAdjust="spacingAndGlyphs">AU_VIN0_P/TX</text>
<text x="794" y="465.7" font-size="2.9" fill="#1c1c1c" text-anchor="end" textLength="20" lengthAdjust="spacingAndGlyphs">SPI0_CLK/GP</text>
<text x="794" y="468.6" font-size="2.9" fill="#1c1c1c" text-anchor="end" textLength="21" lengthAdjust="spacingAndGlyphs">KPROW0/GPIO</text>
<text x="794" y="477.1" font-size="2.9" fill="#1c1c1c" text-anchor="end" textLength="30" lengthAdjust="spacingAndGlyphs">MIPI_TDN0/MSDC1_D</text>
<text x="794" y="479.9" font-size="2.9" fill="#1c1c1c" text-anchor="end" textLength="30" lengthAdjust="spacingAndGlyphs">VBAT/SPI0_MISO/MS</text>
<text x="794" y="488.3" font-size="2.9" fill="#1c1c1c" text-anchor="end" textLength="56" lengthAdjust="spacingAndGlyphs">SPI0_MOSI/SIM1_SCLK/SIM1_SCLK/RE</text>
<text x="794" y="491.2" font-size="2.9" fill="#1c1c1c" text-anchor="end" textLength="64" lengthAdjust="spacingAndGlyphs">UTXD0/GPIO_LCD_RST/VBAT/AU_VIN0_N/VM1</text>
<text x="794" y="494.1" font-size="2.9" fill="#1c1c1c" text-anchor="end" textLength="50" lengthAdjust="spacingAndGlyphs">MIPI_TDN0/WATCHDOG/BPI_BUS0/T</text>
<text x="794" y="497" font-size="2.9" fill="#1c1c1c" text-anchor="end" textLength="44" lengthAdjust="spacingAndGlyphs">VSYS/MSDC1_DAT0/VM1/SIM1</text>
<text x="794" y="499.9" font-size="2.9" fill="#1c1c1c" text-anchor="end" textLength="52" lengthAdjust="spacingAndGlyphs">BPI_BUS1/CHD_DM/MIPI_TDN0/PWM</text>
<text x="794" y="508.4" font-size="2.9" fill="#1c1c1c" text-anchor="end" textLength="42" lengthAdjust="spacingAndGlyphs">BPI_BUS1/PWRKEY/SRCLKENA</text>
<text x="794" y="511.35" font-size="2.9" fill="#1c1c1c" text-anchor="end" textLength="46" lengthAdjust="spacingAndGlyphs">MIPI_TDN0/SPI0_MISO/BPI_BU</text>
<text x="797" y="510.15" font-size="2.7" fill="#222" font-weight="bold">G7</text>
<path d="M795.5 510.45L799 510.45" stroke="#666" stroke-width="0.5"/>
<text x="794" y="514.3" font-size="2.9" fill="#1c1c1c" text-anchor="end" textLength="48" lengthAdjust="spacingAndGlyphs">RESETB/MSDC1_DAT3/BPI_BUS1/B</text>
<text x="797" y="513.1" font-size="2.7" fill="#222" font-weight="bold">G7</text>
<path d="M795.5 513.4L799 513.4" stroke="#666" stroke-width="0.5"/>
<text x="794" y="517.25" font-size="2.9" fill="#1c1c1c" text-anchor="end" textLength="50" lengthAdjust="spacingAndGlyphs">MIPI_TDP0/AU_VIN0_N/VM1/AU_VI</text>
<text x="797" y="516.05" font-size="2.7" fill="#222" font-weight="bold">E5</text>
<path d="M795.5 516.35L799 516.35" stroke="#666" stroke-width="0.5"/>
<text x="794" y="520.2" font-size="2.9" fill="#1c1c1c" text-anchor="end" textLength="48" lengthAdjust="spacingAndGlyphs">SPI0_MOSI/RTC32K/VBAT/BPI_BU</text>
<text x="794" y="528.2" font-size="2.9" fill="#1c1c1c" text-anchor="end" textLength="36" lengthAdjust="spacingAndGlyphs">RTC32K/BSI_CLK/SRCLKE</text>
<text x="797" y="527" font-size="2.7" fill="#222" font-weight="bold">V18</text>
<path d="M795.5 527.3L799 527.3" stroke="#666" stroke-width="0.5"/>
<text x="794" y="531.4" font-size="2.9" fill="#1c1c1c" text-anchor="end" textLength="36" lengthAdjust="spacingAndGlyphs">GPIO_LCD_RST/SPI0_MOS</text>
<text x="797" y="530.2" font-size="2.7" fill="#222" font-weight="bold">AB22</text>
<path d="M795.5 530.5L799 530.5" stroke="#666" stroke-width="0.5"/>
<text x="794" y="537.6" font-size="2.9" fill="#1c1c1c" text-anchor="end" textLength="36" lengthAdjust="spacingAndGlyphs">MIPI_TDP0/RESETB/MSDC</text>
<text x="797" y="536.4" font-size="2.7" fill="#222" font-weight="bold">W19</text>
<path d="M795.5 536.7L799 536.7" stroke="#666" stroke-width="0.5"/>
<text x="794" y="540.7" font-size="2.9" fill="#1c1c1c" text-anchor="end" textLength="36" lengthAdjust="spacingAndGlyphs">MSDC1_DAT0/USB_DP/SPK</text>
<text x="797" y="539.5" font-size="2.7" fill="#222" font-weight="bold">AB22</text>
<path d="M795.5 539.8L799 539.8" stroke="#666" stroke-width="0.5"/>
<text x="794" y="548.9" font-size="2.9" fill="#1c1c1c" text-anchor="end" textLength="34" lengthAdjust="spacingAndGlyphs">RESETB/SPI0_MOSI/RES</text>
<text x="794" y="551.75" font-size="2.9" fill="#1c1c1c" text-anchor="end" textLength="34" lengthAdjust="spacingAndGlyphs">ACCDET/RTC32K/URXD0</text>
<text x="794" y="554.6" font-size="2.9" fill="#1c1c1c" text-anchor="end" textLength="34" lengthAdjust="spacingAndGlyphs">KPROW0/SPI0_CLK/USB</text>
<text x="794" y="557.45" font-size="2.9" fill="#1c1c1c" text-anchor="end" textLength="40" lengthAdjust="spacingAndGlyphs">EINT_TP/VM0/AU_VIN0_P/A</text>
<text x="797" y="556.25" font-size="2.7" fill="#222" font-weight="bold">Y20</text>
<path d="M795.5 556.55L799 556.55" stroke="#666" stroke-width="0.5"/>
<text x="794" y="563.6" font-size="2.9" fill="#1c1c1c" text-anchor="end" textLength="50" lengthAdjust="spacingAndGlyphs">WATCHDOG/AU_VIN0_N/EINT_TP/VM</text>
<text x="794" y="566.4" font-size="2.9" fill="#1c1c1c" text-anchor="end" textLength="50" lengthAdjust="spacingAndGlyphs">VM0/CHD_DP/KPROW0/EINT_TP/KPR</text>
<text x="794" y="571.8" font-size="2.9" fill="#1c1c1c" text-anchor="end" textLength="50" lengthAdjust="spacingAndGlyphs">URXD0/BPI_BUS1/VM1/CAM_PDN/UT</text>
<text x="797" y="570.6" font-size="2.7" fill="#222" font-weight="bold">AD24</text>
<path d="M795.5 570.9L799 570.9" stroke="#666" stroke-width="0.5"/>
<text x="794" y="574.6" font-size="2.9" fill="#1c1c1c" text-anchor="end" textLength="50" lengthAdjust="spacingAndGlyphs">SRCLKENA/USB_DM/CHD_DM/MSDC1</text>
<text x="797" y="573.4" font-size="2.7" fill="#222" font-weight="bold">Y20</text>
<path d="M795.5 573.7L799 573.7" stroke="#666" stroke-width="0.5"/>
<text x="794" y="580.2" font-size="2.9" fill="#1c1c1c" text-anchor="end" textLength="20" lengthAdjust="spacingAndGlyphs">CHD_DP/RTC3</text>
<text x="797" y="579" font-size="2.7" fill="#222" font-weight="bold">P14</text>
<path d="M795.5 579.3L799 579.3" stroke="#666" stroke-width="0.5"/>
<text x="794" y="583.05" font-size="2.9" fill="#1c1c1c" text-anchor="end" textLength="24" lengthAdjust="spacingAndGlyphs">TX_BB_IP/SPI0</text>
<text x="797" y="581.85" font-size="2.7" fill="#222" font-weight="bold">D4</text>
<path d="M795.5 582.15L799 582.15" stroke="#666" stroke-width="0.5"/>
<text x="794" y="585.9" font-size="2.9" fill="#1c1c1c" text-anchor="end" textLength="32" lengthAdjust="spacingAndGlyphs">RESETB/SRCLKENA/CA</text>
<text x="797" y="584.7" font-size="2.7" fill="#222" font-weight="bold">Y20</text>
<path d="M795.5 585L799 585" stroke="#666" stroke-width="0.5"/>
<text x="794" y="588.75" font-size="2.9" fill="#1c1c1c" text-anchor="end" textLength="30" lengthAdjust="spacingAndGlyphs">VSYS/MIPI_TDN0/SI</text>
<text x="797" y="587.55" font-size="2.7" fill="#222" font-weight="bold">R15</text>
<path d="M795.5 587.85L799 587.85" stroke="#666" stroke-width="0.5"/>
<text x="794" y="597.4" font-size="2.9" fill="#1c1c1c" text-anchor="end" textLength="22" lengthAdjust="spacingAndGlyphs">SRCLKENA/VM0</text>
<text x="797" y="596.2" font-size="2.7" fill="#222" font-weight="bold">P14</text>
<path d="M795.5 596.5L799 596.5" stroke="#666" stroke-width="0.5"/>
<text x="794" y="600.3" font-size="2.9" fill="#1c1c1c" text-anchor="end" textLength="20" lengthAdjust="spacingAndGlyphs">PWRKEY/SPK</text>
<text x="797" y="599.1" font-size="2.7" fill="#222" font-weight="bold">AC23</text>
<path d="M795.5 599.4L799 599.4" stroke="#666" stroke-width="0.5"/>
<text x="794" y="603.2" font-size="2.9" fill="#1c1c1c" text-anchor="end" textLength="22" lengthAdjust="spacingAndGlyphs">SPI0_CLK/CHD</text>
<text x="797" y="602" font-size="2.7" fill="#222" font-weight="bold">AB22</text>
<path d="M795.5 602.3L799 602.3" stroke="#666" stroke-width="0.5"/>
<text x="794" y="606.1" font-size="2.9" fill="#1c1c1c" text-anchor="end" textLength="20" lengthAdjust="spacingAndGlyphs">CHD_DM/KPCO</text>
<text x="797" y="604.9" font-size="2.7" fill="#222" font-weight="bold">B2</text>
<path d="M795.5 605.2L799 605.2" stroke="#666" stroke-width="0.5"/>
<text x="794" y="609" font-size="2.9" fill="#1c1c1c" text-anchor="end" textLength="28" lengthAdjust="spacingAndGlyphs">I2C_SCL0/BSI_CLK</text>
<text x="797" y="607.8" font-size="2.7" fill="#222" font-weight="bold">T16</text>
<path d="M795.5 608.1L799 608.1" stroke="#666" stroke-width="0.5"/>
<text x="794" y="617.4" font-size="2.9" fill="#1c1c1c" text-anchor="end" textLength="50" lengthAdjust="spacingAndGlyphs">RTC32K/CHD_DM/PWM_BL/BPI_BUS0</text>
<text x="794" y="620.4" font-size="2.9" fill="#1c1c1c" text-anchor="end" textLength="48" lengthAdjust="spacingAndGlyphs">AU_VIN0_N/PWM_BL/USB_DM/USB</text>
<text x="794" y="623.4" font-size="2.9" fill="#1c1c1c" text-anchor="end" textLength="58" lengthAdjust="spacingAndGlyphs">USB_DM/TX_BB_IP/I2C_SDA0/SPK_P/CA</text>
<text x="797" y="622.2" font-size="2.7" fill="#222" font-weight="bold">P14</text>
<path d="M795.5 622.5L799 622.5" stroke="#666" stroke-width="0.5"/>
<text x="794" y="629.7" font-size="2.9" fill="#1c1c1c" text-anchor="end" textLength="52" lengthAdjust="spacingAndGlyphs">GPIO_LCD_RST/CHD_DP/SPI0_MOSI</text>
<text x="794" y="632.55" font-size="2.9" fill="#1c1c1c" text-anchor="end" textLength="50" lengthAdjust="spacingAndGlyphs">USB_DM/EINT_TP/AU_VIN0_P/USB</text>
<text x="797" y="631.35" font-size="2.7" fill="#222" font-weight="bold">R15</text>
<path d="M795.5 631.65L799 631.65" stroke="#666" stroke-width="0.5"/>
<text x="794" y="635.4" font-size="2.9" fill="#1c1c1c" text-anchor="end" textLength="52" lengthAdjust="spacingAndGlyphs">MSDC1_DAT0/CAM_PDN/CAM_PDN/EIN</text>
<text x="797" y="634.2" font-size="2.7" fill="#222" font-weight="bold">E5</text>
<path d="M795.5 634.5L799 634.5" stroke="#666" stroke-width="0.5"/>
<text x="794" y="643.4" font-size="2.9" fill="#1c1c1c" text-anchor="end" textLength="22" lengthAdjust="spacingAndGlyphs">GPIO_LCD_RST</text>
<text x="794" y="649.5" font-size="2.9" fill="#1c1c1c" text-anchor="end" textLength="45" lengthAdjust="spacingAndGlyphs">VM0/AU_VIN0_N/KPROW0/MSDC1</text>
<text x="794" y="657" font-size="2.9" fill="#1c1c1c" text-anchor="end" textLength="56" lengthAdjust="spacingAndGlyphs">MIPI_TDP0/VSYS/RESETB/AU_VIN0_P</text>
<text x="797" y="655.8" font-size="2.7" fill="#222" font-weight="bold">W19</text>
<path d="M795.5 656.1L799 656.1" stroke="#666" stroke-width="0.5"/>
<rect x="1072" y="213" width="137" height="240" fill="#fffff2" stroke="none" stroke-width="1"/>
<rect x="1082.5" y="217.5" width="116" height="230" fill="#fff" stroke="#a0a0a0" stroke-width="1"/>
<text x="1140" y="216.3" font-size="2.6" fill="#444" text-anchor="middle">U100-B</text>
<text x="1140" y="451" font-size="2.4" fill="#444" text-anchor="middle">MT6737/MT6328</text>
<path d="M1036.6 231.5L1082.5 231.5" stroke="#989898" stroke-width="1"/>
<rect x="1031" y="230.5" width="5.4" height="2.6" fill="#fff" stroke="#9a9a9a" stroke-width="0.5" rx="0.8"/>
<text x="1028.6" y="232.8" font-size="2.9" fill="#3030b4" text-anchor="end" font-weight="bold" textLength="13" lengthAdjust="spacingAndGlyphs">BPI_BUS</text>
<path d="M1015.6 233.3L1028.6 233.3" stroke="#8a8ad8" stroke-width="0.35"/>
<text x="1002" y="232.7" font-size="2.9" fill="#555">7</text>
<text x="1081.6" y="231.6" font-size="2.7" fill="#222" text-anchor="end" font-weight="bold">V18</text>
<path d="M1036.6 237.5L1082.5 237.5" stroke="#989898" stroke-width="1"/>
<rect x="1031" y="236.3" width="5.4" height="2.6" fill="#fff" stroke="#9a9a9a" stroke-width="0.5" rx="0.8"/>
<text x="1028.6" y="238.6" font-size="2.9" fill="#3030b4" text-anchor="end" font-weight="bold" textLength="8" lengthAdjust="spacingAndGlyphs">CHD</text>
<path d="M1020.6 239.1L1028.6 239.1" stroke="#8a8ad8" stroke-width="0.35"/>
<text x="1002" y="238.5" font-size="2.9" fill="#555">4</text>
<text x="1081.6" y="237.4" font-size="2.7" fill="#222" text-anchor="end" font-weight="bold">L11</text>
<path d="M1036.6 240.5L1082.5 240.5" stroke="#989898" stroke-width="1"/>
<rect x="1031" y="238.9" width="5.4" height="2.6" fill="#fff" stroke="#9a9a9a" stroke-width="0.5" rx="0.8"/>
<text x="1028.6" y="241.2" font-size="2.9" fill="#3030b4" text-anchor="end" font-weight="bold" textLength="8" lengthAdjust="spacingAndGlyphs">SPI0</text>
<path d="M1020.6 241.7L1028.6 241.7" stroke="#8a8ad8" stroke-width="0.35"/>
<text x="1002" y="241.1" font-size="2.9" fill="#555">5</text>
<text x="1081.6" y="240" font-size="2.7" fill="#222" text-anchor="end" font-weight="bold">AA21</text>
<path d="M1036.6 266.5L1082.5 266.5" stroke="#989898" stroke-width="1"/>
<rect x="1031" y="265.2" width="5.4" height="2.6" fill="#fff" stroke="#9a9a9a" stroke-width="0.5" rx="0.8"/>
<text x="1028.6" y="267.5" font-size="2.9" fill="#3030b4" text-anchor="end" font-weight="bold" textLength="24" lengthAdjust="spacingAndGlyphs">CHD_DM_RTC32K</text>
<path d="M1004.6 268L1028.6 268" stroke="#8a8ad8" stroke-width="0.35"/>
<text x="1002" y="267.4" font-size="2.9" fill="#555">4</text>
<text x="1081.6" y="266.3" font-size="2.7" fill="#222" text-anchor="end" font-weight="bold">L11</text>
<path d="M1036.6 272.5L1082.5 272.5" stroke="#989898" stroke-width="1"/>
<rect x="1031" y="271" width="5.4" height="2.6" fill="#fff" stroke="#9a9a9a" stroke-width="0.5" rx="0.8"/>
<text x="1028.6" y="273.3" font-size="2.9" fill="#3030b4" text-anchor="end" font-weight="bold" textLength="14" lengthAdjust="spacingAndGlyphs">SIM1_SC</text>
<path d="M1014.6 273.8L1028.6 273.8" stroke="#8a8ad8" stroke-width="0.35"/>
<text x="1002" y="273.2" font-size="2.9" fill="#555">5</text>
<text x="1081.6" y="272.1" font-size="2.7" fill="#222" text-anchor="end" font-weight="bold">K10</text>
<path d="M1036.6 275.5L1082.5 275.5" stroke="#989898" stroke-width="1"/>
<rect x="1031" y="273.7" width="5.4" height="2.6" fill="#fff" stroke="#9a9a9a" stroke-width="0.5" rx="0.8"/>
<text x="1028.6" y="276" font-size="2.9" fill="#3030b4" text-anchor="end" font-weight="bold" textLength="16" lengthAdjust="spacingAndGlyphs">MSDC1_CL</text>
<path d="M1012.6 276.5L1028.6 276.5" stroke="#8a8ad8" stroke-width="0.35"/>
<text x="1002" y="275.9" font-size="2.9" fill="#555">4</text>
<text x="1081.6" y="274.8" font-size="2.7" fill="#222" text-anchor="end" font-weight="bold">N13</text>
<path d="M1036.6 277.5L1082.5 277.5" stroke="#989898" stroke-width="1"/>
<rect x="1031" y="276.3" width="5.4" height="2.6" fill="#fff" stroke="#9a9a9a" stroke-width="0.5" rx="0.8"/>
<text x="1028.6" y="278.6" font-size="2.9" fill="#3030b4" text-anchor="end" font-weight="bold" textLength="20" lengthAdjust="spacingAndGlyphs">I2C_SDA0_SI</text>
<path d="M1008.6 279.1L1028.6 279.1" stroke="#8a8ad8" stroke-width="0.35"/>
<text x="1002" y="278.5" font-size="2.9" fill="#555">12</text>
<text x="1081.6" y="277.4" font-size="2.7" fill="#222" text-anchor="end" font-weight="bold">N13</text>
<path d="M1036.6 297.5L1082.5 297.5" stroke="#989898" stroke-width="1"/>
<rect x="1031" y="296.6" width="5.4" height="2.6" fill="#fff" stroke="#9a9a9a" stroke-width="0.5" rx="0.8"/>
<text x="1028.6" y="298.9" font-size="2.9" fill="#3030b4" text-anchor="end" font-weight="bold" textLength="10" lengthAdjust="spacingAndGlyphs">VM1_S</text>
<path d="M1018.6 299.4L1028.6 299.4" stroke="#8a8ad8" stroke-width="0.35"/>
<text x="1002" y="298.8" font-size="2.9" fill="#555">4</text>
<text x="1081.6" y="297.7" font-size="2.7" fill="#222" text-anchor="end" font-weight="bold">W19</text>
<path d="M1036.6 300.5L1082.5 300.5" stroke="#989898" stroke-width="1"/>
<rect x="1031" y="299.2" width="5.4" height="2.6" fill="#fff" stroke="#9a9a9a" stroke-width="0.5" rx="0.8"/>
<text x="1028.6" y="301.5" font-size="2.9" fill="#3030b4" text-anchor="end" font-weight="bold" textLength="10" lengthAdjust="spacingAndGlyphs">CAM_R</text>
<path d="M1018.6 302L1028.6 302" stroke="#8a8ad8" stroke-width="0.35"/>
<text x="1002" y="301.4" font-size="2.9" fill="#555">12</text>
<text x="1081.6" y="300.3" font-size="2.7" fill="#222" text-anchor="end" font-weight="bold">AD24</text>
<path d="M1036.6 309.5L1082.5 309.5" stroke="#989898" stroke-width="1"/>
<rect x="1031" y="308.2" width="5.4" height="2.6" fill="#fff" stroke="#9a9a9a" stroke-width="0.5" rx="0.8"/>
<text x="1028.6" y="310.5" font-size="2.9" fill="#3030b4" text-anchor="end" font-weight="bold" textLength="13" lengthAdjust="spacingAndGlyphs">PWM_BL</text>
<path d="M1015.6 311L1028.6 311" stroke="#8a8ad8" stroke-width="0.35"/>
<text x="1002" y="310.4" font-size="2.9" fill="#555">7</text>
<text x="1081.6" y="309.3" font-size="2.7" fill="#222" text-anchor="end" font-weight="bold">Y20</text>
<path d="M1036.6 315.5L1082.5 315.5" stroke="#989898" stroke-width="1"/>
<rect x="1031" y="314.3" width="5.4" height="2.6" fill="#fff" stroke="#9a9a9a" stroke-width="0.5" rx="0.8"/>
<text x="1028.6" y="316.6" font-size="2.9" fill="#3030b4" text-anchor="end" font-weight="bold" textLength="18" lengthAdjust="spacingAndGlyphs">MSDC1_DAT</text>
<path d="M1010.6 317.1L1028.6 317.1" stroke="#8a8ad8" stroke-width="0.35"/>
<text x="1002" y="316.5" font-size="2.9" fill="#555">4</text>
<text x="1081.6" y="315.4" font-size="2.7" fill="#222" text-anchor="end" font-weight="bold">E5</text>
<path d="M1036.6 318.5L1082.5 318.5" stroke="#989898" stroke-width="1"/>
<rect x="1031" y="317.1" width="5.4" height="2.6" fill="#fff" stroke="#9a9a9a" stroke-width="0.5" rx="0.8"/>
<text x="1028.6" y="319.4" font-size="2.9" fill="#3030b4" text-anchor="end" font-weight="bold" textLength="18" lengthAdjust="spacingAndGlyphs">EINT_TP_M</text>
<path d="M1010.6 319.9L1028.6 319.9" stroke="#8a8ad8" stroke-width="0.35"/>
<text x="1002" y="319.3" font-size="2.9" fill="#555">4</text>
<text x="1081.6" y="318.2" font-size="2.7" fill="#222" text-anchor="end" font-weight="bold">AE25</text>
<path d="M1036.6 326.5L1082.5 326.5" stroke="#989898" stroke-width="1"/>
<rect x="1031" y="325.5" width="5.4" height="2.6" fill="#fff" stroke="#9a9a9a" stroke-width="0.5" rx="0.8"/>
<text x="1028.6" y="327.8" font-size="2.9" fill="#3030b4" text-anchor="end" font-weight="bold" textLength="10" lengthAdjust="spacingAndGlyphs">KPCOL</text>
<path d="M1018.6 328.3L1028.6 328.3" stroke="#8a8ad8" stroke-width="0.35"/>
<text x="1002" y="327.7" font-size="2.9" fill="#555">12</text>
<text x="1081.6" y="326.6" font-size="2.7" fill="#222" text-anchor="end" font-weight="bold">R15</text>
<path d="M1036.6 329.5L1082.5 329.5" stroke="#989898" stroke-width="1"/>
<rect x="1031" y="328.5" width="5.4" height="2.6" fill="#fff" stroke="#9a9a9a" stroke-width="0.5" rx="0.8"/>
<text x="1028.6" y="330.8" font-size="2.9" fill="#3030b4" text-anchor="end" font-weight="bold" textLength="10" lengthAdjust="spacingAndGlyphs">I2C_S</text>
<path d="M1018.6 331.3L1028.6 331.3" stroke="#8a8ad8" stroke-width="0.35"/>
<text x="1002" y="330.7" font-size="2.9" fill="#555">12</text>
<text x="1081.6" y="329.6" font-size="2.7" fill="#222" text-anchor="end" font-weight="bold">B2</text>
<path d="M1036.6 338.5L1082.5 338.5" stroke="#989898" stroke-width="1"/>
<rect x="1031" y="337.3" width="5.4" height="2.6" fill="#fff" stroke="#9a9a9a" stroke-width="0.5" rx="0.8"/>
<text x="1028.6" y="339.6" font-size="2.9" fill="#3030b4" text-anchor="end" font-weight="bold" textLength="13" lengthAdjust="spacingAndGlyphs">PWM_BL</text>
<path d="M1015.6 340.1L1028.6 340.1" stroke="#8a8ad8" stroke-width="0.35"/>
<text x="1002" y="339.5" font-size="2.9" fill="#555">5</text>
<text x="1081.6" y="338.4" font-size="2.7" fill="#222" text-anchor="end" font-weight="bold">V18</text>
<path d="M1036.6 341.5L1082.5 341.5" stroke="#989898" stroke-width="1"/>
<rect x="1031" y="340.2" width="5.4" height="2.6" fill="#fff" stroke="#9a9a9a" stroke-width="0.5" rx="0.8"/>
<text x="1028.6" y="342.5" font-size="2.9" fill="#3030b4" text-anchor="end" font-weight="bold" textLength="13" lengthAdjust="spacingAndGlyphs">KPCOL0</text>
<path d="M1015.6 343L1028.6 343" stroke="#8a8ad8" stroke-width="0.35"/>
<text x="1002" y="342.4" font-size="2.9" fill="#555">10</text>
<text x="1081.6" y="341.3" font-size="2.7" fill="#222" text-anchor="end" font-weight="bold">N13</text>
<path d="M1036.6 355.5L1082.5 355.5" stroke="#989898" stroke-width="1"/>
<rect x="1031" y="354.1" width="5.4" height="2.6" fill="#fff" stroke="#9a9a9a" stroke-width="0.5" rx="0.8"/>
<text x="1028.6" y="356.4" font-size="2.9" fill="#3030b4" text-anchor="end" font-weight="bold" textLength="20" lengthAdjust="spacingAndGlyphs">CAM_RST_TX</text>
<path d="M1008.6 356.9L1028.6 356.9" stroke="#8a8ad8" stroke-width="0.35"/>
<text x="1002" y="356.3" font-size="2.9" fill="#555">7</text>
<text x="1081.6" y="355.2" font-size="2.7" fill="#222" text-anchor="end" font-weight="bold">K10</text>
<path d="M1036.6 392.5L1082.5 392.5" stroke="#989898" stroke-width="1"/>
<rect x="1031" y="391.3" width="5.4" height="2.6" fill="#fff" stroke="#9a9a9a" stroke-width="0.5" rx="0.8"/>
<text x="1028.6" y="393.6" font-size="2.9" fill="#3030b4" text-anchor="end" font-weight="bold" textLength="17" lengthAdjust="spacingAndGlyphs">SPI0_MOSI</text>
<path d="M1011.6 394.1L1028.6 394.1" stroke="#8a8ad8" stroke-width="0.35"/>
<text x="1002" y="393.5" font-size="2.9" fill="#555">4</text>
<text x="1081.6" y="392.4" font-size="2.7" fill="#222" text-anchor="end" font-weight="bold">F6</text>
<path d="M1036.6 395.5L1082.5 395.5" stroke="#989898" stroke-width="1"/>
<rect x="1031" y="394" width="5.4" height="2.6" fill="#fff" stroke="#9a9a9a" stroke-width="0.5" rx="0.8"/>
<text x="1028.6" y="396.3" font-size="2.9" fill="#3030b4" text-anchor="end" font-weight="bold" textLength="17" lengthAdjust="spacingAndGlyphs">SPK_P_CAM</text>
<path d="M1011.6 396.8L1028.6 396.8" stroke="#8a8ad8" stroke-width="0.35"/>
<text x="1002" y="396.2" font-size="2.9" fill="#555">12</text>
<text x="1081.6" y="395.1" font-size="2.7" fill="#222" text-anchor="end" font-weight="bold">AB22</text>
<path d="M1036.6 401.5L1082.5 401.5" stroke="#989898" stroke-width="1"/>
<rect x="1031" y="400.2" width="5.4" height="2.6" fill="#fff" stroke="#9a9a9a" stroke-width="0.5" rx="0.8"/>
<text x="1028.6" y="402.5" font-size="2.9" fill="#3030b4" text-anchor="end" font-weight="bold" textLength="16" lengthAdjust="spacingAndGlyphs">BPI_BUS1</text>
<path d="M1012.6 403L1028.6 403" stroke="#8a8ad8" stroke-width="0.35"/>
<text x="1002" y="402.4" font-size="2.9" fill="#555">4</text>
<text x="1081.6" y="401.3" font-size="2.7" fill="#222" text-anchor="end" font-weight="bold">J9</text>
<path d="M1036.6 404.5L1082.5 404.5" stroke="#989898" stroke-width="1"/>
<rect x="1031" y="403.1" width="5.4" height="2.6" fill="#fff" stroke="#9a9a9a" stroke-width="0.5" rx="0.8"/>
<text x="1028.6" y="405.4" font-size="2.9" fill="#3030b4" text-anchor="end" font-weight="bold" textLength="16" lengthAdjust="spacingAndGlyphs">PWRKEY_V</text>
<path d="M1012.6 405.9L1028.6 405.9" stroke="#8a8ad8" stroke-width="0.35"/>
<text x="1002" y="405.3" font-size="2.9" fill="#555">5</text>
<text x="1081.6" y="404.2" font-size="2.7" fill="#222" text-anchor="end" font-weight="bold">C3</text>
<path d="M1036.6 410.5L1082.5 410.5" stroke="#989898" stroke-width="1"/>
<rect x="1031" y="408.7" width="5.4" height="2.6" fill="#fff" stroke="#9a9a9a" stroke-width="0.5" rx="0.8"/>
<text x="1028.6" y="411" font-size="2.9" fill="#3030b4" text-anchor="end" font-weight="bold" textLength="19" lengthAdjust="spacingAndGlyphs">PWM_BL_CHD</text>
<path d="M1009.6 411.5L1028.6 411.5" stroke="#8a8ad8" stroke-width="0.35"/>
<text x="1002" y="410.9" font-size="2.9" fill="#555">12</text>
<text x="1081.6" y="409.8" font-size="2.7" fill="#222" text-anchor="end" font-weight="bold">F6</text>
<path d="M1036.6 424.5L1082.5 424.5" stroke="#989898" stroke-width="1"/>
<rect x="1031" y="423.5" width="5.4" height="2.6" fill="#fff" stroke="#9a9a9a" stroke-width="0.5" rx="0.8"/>
<text x="1028.6" y="425.8" font-size="2.9" fill="#3030b4" text-anchor="end" font-weight="bold" textLength="24" lengthAdjust="spacingAndGlyphs">MIPI_TDP0_MIP</text>
<path d="M1004.6 426.3L1028.6 426.3" stroke="#8a8ad8" stroke-width="0.35"/>
<text x="1002" y="425.7" font-size="2.9" fill="#555">4</text>
<text x="1081.6" y="424.6" font-size="2.7" fill="#222" text-anchor="end" font-weight="bold">K10</text>
<path d="M1036.6 427.5L1082.5 427.5" stroke="#989898" stroke-width="1"/>
<rect x="1031" y="426.3" width="5.4" height="2.6" fill="#fff" stroke="#9a9a9a" stroke-width="0.5" rx="0.8"/>
<text x="1028.6" y="428.6" font-size="2.9" fill="#3030b4" text-anchor="end" font-weight="bold" textLength="28" lengthAdjust="spacingAndGlyphs">SIM1_SRST_PWM_B</text>
<path d="M1000.6 429.1L1028.6 429.1" stroke="#8a8ad8" stroke-width="0.35"/>
<text x="1002" y="428.5" font-size="2.9" fill="#555">7</text>
<text x="1081.6" y="427.4" font-size="2.7" fill="#222" text-anchor="end" font-weight="bold">R15</text>
<path d="M1036.6 430.5L1082.5 430.5" stroke="#989898" stroke-width="1"/>
<rect x="1031" y="429.1" width="5.4" height="2.6" fill="#fff" stroke="#9a9a9a" stroke-width="0.5" rx="0.8"/>
<text x="1028.6" y="431.4" font-size="2.9" fill="#3030b4" text-anchor="end" font-weight="bold" textLength="8" lengthAdjust="spacingAndGlyphs">VM0</text>
<path d="M1020.6 431.9L1028.6 431.9" stroke="#8a8ad8" stroke-width="0.35"/>
<text x="1002" y="431.3" font-size="2.9" fill="#555">7</text>
<text x="1081.6" y="430.2" font-size="2.7" fill="#222" text-anchor="end" font-weight="bold">L11</text>
<path d="M1082.5 349.5L1068.5 349.5L1068.5 352.5L1040.5 352.5" stroke="#989898" stroke-width="1" fill="none"/>
<text x="1081.6" y="349.2" font-size="2.7" fill="#222" text-anchor="end" font-weight="bold">C3</text>
<path d="M1082.5 361.5L1068.5 361.5L1068.5 364.5L1036.5 364.5" stroke="#989898" stroke-width="1" fill="none"/>
<text x="1081.6" y="361.3" font-size="2.7" fill="#222" text-anchor="end" font-weight="bold">V18</text>
<path d="M1082.5 369.5L1068.5 369.5L1068.5 372.5L1032.5 372.5" stroke="#989898" stroke-width="1" fill="none"/>
<text x="1081.6" y="369.5" font-size="2.7" fill="#222" text-anchor="end" font-weight="bold">P14</text>
<path d="M1082.5 375.5L1068.5 375.5L1068.5 378.5L1036.5 378.5" stroke="#989898" stroke-width="1" fill="none"/>
<text x="1081.6" y="375.3" font-size="2.7" fill="#222" text-anchor="end" font-weight="bold">H8</text>
<path d="M1082.5 381.5L1068.5 381.5L1068.5 384.5L1040.5 384.5" stroke="#989898" stroke-width="1" fill="none"/>
<text x="1081.6" y="381.1" font-size="2.7" fill="#222" text-anchor="end" font-weight="bold">F6</text>
<path d="M1082.5 415.5L1068.5 415.5L1068.5 418.5L1035.5 418.5" stroke="#989898" stroke-width="1" fill="none"/>
<text x="1081.6" y="415.3" font-size="2.7" fill="#222" text-anchor="end" font-weight="bold">B2</text>
<path d="M1040 387.1L1082.5 387.1" stroke="#aaa" stroke-width="0.9"/>
<text x="1081.6" y="386.9" font-size="2.1" fill="#444" text-anchor="end">AC20</text>
<text x="1028.6" y="373.4" font-size="2.9" fill="#3030b4" text-anchor="end" font-weight="bold">MSDC1_DAT1</text>
<rect x="1040" y="232.5" width="29" height="4.4" fill="#fdfdd0" stroke="#ecec98" stroke-width="0.5" opacity=".8"/>
<rect x="1040" y="267" width="29" height="4.4" fill="#fdfdd0" stroke="#ecec98" stroke-width="0.5" opacity=".8"/>
<rect x="1040" y="276" width="29" height="4.6" fill="#fdfdd0" stroke="#ecec98" stroke-width="0.5" opacity=".8"/>
<rect x="1040" y="350.5" width="25" height="6" fill="#fdfdd0" stroke="#ecec98" stroke-width="0.5" opacity=".8"/>
<rect x="1032" y="370" width="37" height="17" fill="#fdfdd0" stroke="#ecec98" stroke-width="0.5" opacity=".8"/>
<rect x="1040" y="391" width="28" height="9" fill="#fdfdd0" stroke="#ecec98" stroke-width="0.5" opacity=".8"/>
<rect x="1040" y="424" width="30" height="6" fill="#fdfdd0" stroke="#ecec98" stroke-width="0.5" opacity=".8"/>
<text x="1044" y="235.2" font-size="2.5" fill="#222">1uF</text>
<text x="1057" y="235.2" font-size="2.5" fill="#222">C1021</text>
<path d="M1052 233.2L1052 236.2" stroke="#555" stroke-width="0.5"/>
<path d="M1053.2 233.2L1053.2 236.2" stroke="#555" stroke-width="0.5"/>
<text x="1044" y="269.8" font-size="2.5" fill="#222">1uF</text>
<text x="1057" y="269.8" font-size="2.5" fill="#222">C1021</text>
<path d="M1052 267.8L1052 270.8" stroke="#555" stroke-width="0.5"/>
<path d="M1053.2 267.8L1053.2 270.8" stroke="#555" stroke-width="0.5"/>
<text x="1044" y="279" font-size="2.5" fill="#222">1uF</text>
<text x="1057" y="279" font-size="2.5" fill="#222">C1021</text>
<path d="M1052 277L1052 280" stroke="#555" stroke-width="0.5"/>
<path d="M1053.2 277L1053.2 280" stroke="#555" stroke-width="0.5"/>
<text x="1044" y="353.6" font-size="2.5" fill="#222">1uF</text>
<text x="1057" y="353.6" font-size="2.5" fill="#222">C1021</text>
<path d="M1052 351.6L1052 354.6" stroke="#555" stroke-width="0.5"/>
<path d="M1053.2 351.6L1053.2 354.6" stroke="#555" stroke-width="0.5"/>
<text x="1044" y="372.4" font-size="2.5" fill="#222">1uF</text>
<text x="1057" y="372.4" font-size="2.5" fill="#222">C1021</text>
<path d="M1052 370.4L1052 373.4" stroke="#555" stroke-width="0.5"/>
<path d="M1053.2 370.4L1053.2 373.4" stroke="#555" stroke-width="0.5"/>
<text x="1044" y="378.2" font-size="2.5" fill="#222">1uF</text>
<text x="1057" y="378.2" font-size="2.5" fill="#222">C1021</text>
<path d="M1052 376.2L1052 379.2" stroke="#555" stroke-width="0.5"/>
<path d="M1053.2 376.2L1053.2 379.2" stroke="#555" stroke-width="0.5"/>
<text x="1044" y="384.1" font-size="2.5" fill="#222">1uF</text>
<text x="1057" y="384.1" font-size="2.5" fill="#222">C1021</text>
<path d="M1052 382.1L1052 385.1" stroke="#555" stroke-width="0.5"/>
<path d="M1053.2 382.1L1053.2 385.1" stroke="#555" stroke-width="0.5"/>
<text x="1044" y="394.3" font-size="2.5" fill="#222">1uF</text>
<text x="1057" y="394.3" font-size="2.5" fill="#222">C1021</text>
<path d="M1052 392.3L1052 395.3" stroke="#555" stroke-width="0.5"/>
<path d="M1053.2 392.3L1053.2 395.3" stroke="#555" stroke-width="0.5"/>
<text x="1044" y="427.8" font-size="2.5" fill="#222">1uF</text>
<text x="1057" y="427.8" font-size="2.5" fill="#222">C1021</text>
<path d="M1052 425.8L1052 428.8" stroke="#555" stroke-width="0.5"/>
<path d="M1053.2 425.8L1053.2 428.8" stroke="#555" stroke-width="0.5"/>
<path d="M1079 249.2L1082.5 249.2" stroke="#666" stroke-width="0.5"/>
<text x="1081.6" y="249" font-size="2.7" fill="#222" text-anchor="end" font-weight="bold">W19</text>
<path d="M1079 255L1082.5 255" stroke="#666" stroke-width="0.5"/>
<text x="1081.6" y="254.8" font-size="2.7" fill="#222" text-anchor="end" font-weight="bold">U17</text>
<path d="M1079 257.6L1082.5 257.6" stroke="#666" stroke-width="0.5"/>
<text x="1081.6" y="257.4" font-size="2.7" fill="#222" text-anchor="end" font-weight="bold">C3</text>
<path d="M1079 286.5L1082.5 286.5" stroke="#666" stroke-width="0.5"/>
<text x="1081.6" y="286.3" font-size="2.7" fill="#222" text-anchor="end" font-weight="bold">U17</text>
<path d="M1079 288.6L1082.5 288.6" stroke="#666" stroke-width="0.5"/>
<text x="1081.6" y="288.4" font-size="2.7" fill="#222" text-anchor="end" font-weight="bold">Y20</text>
<path d="M1079 433.2L1082.5 433.2" stroke="#666" stroke-width="0.5"/>
<text x="1081.6" y="433" font-size="2.7" fill="#222" text-anchor="end" font-weight="bold">T16</text>
<text x="1083.6" y="232.8" font-size="2.8" fill="#1c1c1c" textLength="10" lengthAdjust="spacingAndGlyphs">AU_VIN</text>
<text x="1083.6" y="238.6" font-size="2.8" fill="#1c1c1c" textLength="6" lengthAdjust="spacingAndGlyphs">SPK</text>
<text x="1083.6" y="241.2" font-size="2.8" fill="#1c1c1c" textLength="6" lengthAdjust="spacingAndGlyphs">USB</text>
<text x="1083.6" y="250.2" font-size="2.8" fill="#1c1c1c" textLength="16" lengthAdjust="spacingAndGlyphs">VM1/USB_DP</text>
<text x="1083.6" y="256" font-size="2.8" fill="#1c1c1c" textLength="11" lengthAdjust="spacingAndGlyphs">MSDC1_D</text>
<text x="1083.6" y="258.6" font-size="2.8" fill="#1c1c1c" textLength="11" lengthAdjust="spacingAndGlyphs">SPK_P/C</text>
<text x="1083.6" y="267.5" font-size="2.8" fill="#1c1c1c" textLength="18" lengthAdjust="spacingAndGlyphs">URXD0/GPIO</text>
<text x="1083.6" y="273.3" font-size="2.8" fill="#1c1c1c" textLength="13" lengthAdjust="spacingAndGlyphs">MIPI_TCN</text>
<text x="1083.6" y="276" font-size="2.8" fill="#1c1c1c" textLength="13" lengthAdjust="spacingAndGlyphs">SPK_P/GP</text>
<text x="1083.6" y="278.6" font-size="2.8" fill="#1c1c1c" textLength="16" lengthAdjust="spacingAndGlyphs">SIM1_SIO/U</text>
<text x="1083.6" y="287.5" font-size="2.8" fill="#1c1c1c" textLength="6" lengthAdjust="spacingAndGlyphs">MSDC</text>
<text x="1083.6" y="289.6" font-size="2.8" fill="#1c1c1c" textLength="6" lengthAdjust="spacingAndGlyphs">SPK</text>
<text x="1083.6" y="298.9" font-size="2.8" fill="#1c1c1c" textLength="7" lengthAdjust="spacingAndGlyphs">SPI0</text>
<text x="1083.6" y="301.5" font-size="2.8" fill="#1c1c1c" textLength="7" lengthAdjust="spacingAndGlyphs">MSDC</text>
<text x="1083.6" y="310.5" font-size="2.8" fill="#1c1c1c" textLength="22" lengthAdjust="spacingAndGlyphs">MSDC1_DAT2/VM</text>
<text x="1083.6" y="316.6" font-size="2.8" fill="#1c1c1c" textLength="15" lengthAdjust="spacingAndGlyphs">AU_VIN0_N</text>
<text x="1083.6" y="319.4" font-size="2.8" fill="#1c1c1c" textLength="15" lengthAdjust="spacingAndGlyphs">MSDC1_DAT</text>
<text x="1083.6" y="327.8" font-size="2.8" fill="#1c1c1c" textLength="7" lengthAdjust="spacingAndGlyphs">SIM1</text>
<text x="1083.6" y="330.8" font-size="2.8" fill="#1c1c1c" textLength="7" lengthAdjust="spacingAndGlyphs">SPI0</text>
<text x="1083.6" y="339.6" font-size="2.8" fill="#1c1c1c" textLength="13" lengthAdjust="spacingAndGlyphs">KPCOL0/S</text>
<text x="1083.6" y="342.5" font-size="2.8" fill="#1c1c1c" textLength="13" lengthAdjust="spacingAndGlyphs">MSDC1_CM</text>
<text x="1083.6" y="350.4" font-size="2.8" fill="#1c1c1c" textLength="7" lengthAdjust="spacingAndGlyphs">RTC3</text>
<text x="1083.6" y="356.4" font-size="2.8" fill="#1c1c1c" textLength="6" lengthAdjust="spacingAndGlyphs">AU_V</text>
<text x="1083.6" y="362.5" font-size="2.8" fill="#1c1c1c" textLength="8" lengthAdjust="spacingAndGlyphs">TX_BB</text>
<text x="1083.6" y="370.7" font-size="2.8" fill="#1c1c1c" textLength="10" lengthAdjust="spacingAndGlyphs">GPIO_L</text>
<text x="1083.6" y="376.5" font-size="2.8" fill="#1c1c1c" textLength="8" lengthAdjust="spacingAndGlyphs">URXD0</text>
<text x="1083.6" y="382.3" font-size="2.8" fill="#1c1c1c" textLength="9" lengthAdjust="spacingAndGlyphs">MSDC1</text>
<text x="1083.6" y="388.1" font-size="2.8" fill="#1c1c1c" textLength="9" lengthAdjust="spacingAndGlyphs">USB_D</text>
<text x="1083.6" y="393.6" font-size="2.8" fill="#1c1c1c" textLength="22" lengthAdjust="spacingAndGlyphs">SIM1_SCLK/SPI</text>
<text x="1083.6" y="396.3" font-size="2.8" fill="#1c1c1c" textLength="22" lengthAdjust="spacingAndGlyphs">MIPI_TDP0/SPI</text>
<text x="1083.6" y="402.5" font-size="2.8" fill="#1c1c1c" textLength="17" lengthAdjust="spacingAndGlyphs">MSDC1_DAT3</text>
<text x="1083.6" y="405.4" font-size="2.8" fill="#1c1c1c" textLength="17" lengthAdjust="spacingAndGlyphs">VM1/CHD_DP</text>
<text x="1083.6" y="411" font-size="2.8" fill="#1c1c1c" textLength="16" lengthAdjust="spacingAndGlyphs">VBAT/CHD_D</text>
<text x="1083.6" y="416.5" font-size="2.8" fill="#1c1c1c" textLength="8" lengthAdjust="spacingAndGlyphs">SPI0</text>
<text x="1083.6" y="425.8" font-size="2.8" fill="#1c1c1c" textLength="7" lengthAdjust="spacingAndGlyphs">MSDC</text>
<text x="1083.6" y="428.6" font-size="2.8" fill="#1c1c1c" textLength="7" lengthAdjust="spacingAndGlyphs">USB</text>
<text x="1083.6" y="431.4" font-size="2.8" fill="#1c1c1c" textLength="7" lengthAdjust="spacingAndGlyphs">URXD</text>
<text x="1083.6" y="434.2" font-size="2.8" fill="#1c1c1c" textLength="7" lengthAdjust="spacingAndGlyphs">I2C</text>
<path d="M1198.3 231.5L1243.6 231.5" stroke="#989898" stroke-width="1"/>
<rect x="1243.8" y="230.5" width="5.4" height="2.6" fill="#fff" stroke="#9a9a9a" stroke-width="0.5" rx="0.8"/>
<text x="1251" y="232.8" font-size="2.9" fill="#3030b4" font-weight="bold" textLength="21" lengthAdjust="spacingAndGlyphs">MIPI_TDN0_M</text>
<path d="M1251 233.3L1272 233.3" stroke="#8a8ad8" stroke-width="0.35"/>
<text x="1276" y="232.7" font-size="2.9" fill="#555">10</text>
<text x="1199.6" y="231.6" font-size="2.7" fill="#222" font-weight="bold">B2</text>
<path d="M1198.3 234.5L1243.6 234.5" stroke="#989898" stroke-width="1"/>
<rect x="1243.8" y="233.4" width="5.4" height="2.6" fill="#fff" stroke="#9a9a9a" stroke-width="0.5" rx="0.8"/>
<text x="1251" y="235.7" font-size="2.9" fill="#3030b4" font-weight="bold" textLength="21" lengthAdjust="spacingAndGlyphs">I2C_SCL0_BP</text>
<path d="M1251 236.2L1272 236.2" stroke="#8a8ad8" stroke-width="0.35"/>
<text x="1276" y="235.6" font-size="2.9" fill="#555">4</text>
<text x="1199.6" y="234.5" font-size="2.7" fill="#222" font-weight="bold">Y20</text>
<path d="M1198.3 237.5L1243.6 237.5" stroke="#989898" stroke-width="1"/>
<rect x="1243.8" y="236.3" width="5.4" height="2.6" fill="#fff" stroke="#9a9a9a" stroke-width="0.5" rx="0.8"/>
<text x="1251" y="238.6" font-size="2.9" fill="#3030b4" font-weight="bold" textLength="21" lengthAdjust="spacingAndGlyphs">SPK_P_TX_BB</text>
<path d="M1251 239.1L1272 239.1" stroke="#8a8ad8" stroke-width="0.35"/>
<text x="1276" y="238.5" font-size="2.9" fill="#555">12</text>
<text x="1199.6" y="237.4" font-size="2.7" fill="#222" font-weight="bold">AA21</text>
<path d="M1198.3 240.5L1243.6 240.5" stroke="#989898" stroke-width="1"/>
<rect x="1243.8" y="239.2" width="5.4" height="2.6" fill="#fff" stroke="#9a9a9a" stroke-width="0.5" rx="0.8"/>
<text x="1251" y="241.5" font-size="2.9" fill="#3030b4" font-weight="bold" textLength="21" lengthAdjust="spacingAndGlyphs">TX_BB_IN_MI</text>
<path d="M1251 242L1272 242" stroke="#8a8ad8" stroke-width="0.35"/>
<text x="1276" y="241.4" font-size="2.9" fill="#555">5</text>
<text x="1199.6" y="240.3" font-size="2.7" fill="#222" font-weight="bold">E5</text>
<path d="M1198.3 249.5L1243.6 249.5" stroke="#989898" stroke-width="1"/>
<rect x="1243.8" y="247.9" width="5.4" height="2.6" fill="#fff" stroke="#9a9a9a" stroke-width="0.5" rx="0.8"/>
<text x="1251" y="250.2" font-size="2.9" fill="#3030b4" font-weight="bold" textLength="13" lengthAdjust="spacingAndGlyphs">SPI0_MI</text>
<path d="M1251 250.7L1264 250.7" stroke="#8a8ad8" stroke-width="0.35"/>
<text x="1276" y="250.1" font-size="2.9" fill="#555">7</text>
<text x="1199.6" y="249" font-size="2.7" fill="#222" font-weight="bold">AC23</text>
<path d="M1198.3 252.5L1243.6 252.5" stroke="#989898" stroke-width="1"/>
<rect x="1243.8" y="250.8" width="5.4" height="2.6" fill="#fff" stroke="#9a9a9a" stroke-width="0.5" rx="0.8"/>
<text x="1251" y="253.1" font-size="2.9" fill="#3030b4" font-weight="bold" textLength="13" lengthAdjust="spacingAndGlyphs">RESETB</text>
<path d="M1251 253.6L1264 253.6" stroke="#8a8ad8" stroke-width="0.35"/>
<text x="1276" y="253" font-size="2.9" fill="#555">10</text>
<text x="1199.6" y="251.9" font-size="2.7" fill="#222" font-weight="bold">C3</text>
<path d="M1198.3 255.5L1243.6 255.5" stroke="#989898" stroke-width="1"/>
<rect x="1243.8" y="253.7" width="5.4" height="2.6" fill="#fff" stroke="#9a9a9a" stroke-width="0.5" rx="0.8"/>
<text x="1251" y="256" font-size="2.9" fill="#3030b4" font-weight="bold" textLength="13" lengthAdjust="spacingAndGlyphs">MSDC1_D</text>
<path d="M1251 256.5L1264 256.5" stroke="#8a8ad8" stroke-width="0.35"/>
<text x="1276" y="255.9" font-size="2.9" fill="#555">12</text>
<text x="1199.6" y="254.8" font-size="2.7" fill="#222" font-weight="bold">W19</text>
<path d="M1198.3 257.5L1243.6 257.5" stroke="#989898" stroke-width="1"/>
<rect x="1243.8" y="256.6" width="5.4" height="2.6" fill="#fff" stroke="#9a9a9a" stroke-width="0.5" rx="0.8"/>
<text x="1251" y="258.9" font-size="2.9" fill="#3030b4" font-weight="bold" textLength="13" lengthAdjust="spacingAndGlyphs">EINT_TP</text>
<path d="M1251 259.4L1264 259.4" stroke="#8a8ad8" stroke-width="0.35"/>
<text x="1276" y="258.8" font-size="2.9" fill="#555">7</text>
<text x="1199.6" y="257.7" font-size="2.7" fill="#222" font-weight="bold">G7</text>
<path d="M1198.3 266.5L1243.6 266.5" stroke="#989898" stroke-width="1"/>
<rect x="1243.8" y="265" width="5.4" height="2.6" fill="#fff" stroke="#9a9a9a" stroke-width="0.5" rx="0.8"/>
<text x="1251" y="267.3" font-size="2.9" fill="#3030b4" font-weight="bold" textLength="11" lengthAdjust="spacingAndGlyphs">VBAT_C</text>
<path d="M1251 267.8L1262 267.8" stroke="#8a8ad8" stroke-width="0.35"/>
<text x="1276" y="267.2" font-size="2.9" fill="#555">4</text>
<text x="1199.6" y="266.1" font-size="2.7" fill="#222" font-weight="bold">R15</text>
<path d="M1198.3 269.5L1243.6 269.5" stroke="#989898" stroke-width="1"/>
<rect x="1243.8" y="267.9" width="5.4" height="2.6" fill="#fff" stroke="#9a9a9a" stroke-width="0.5" rx="0.8"/>
<text x="1251" y="270.2" font-size="2.9" fill="#3030b4" font-weight="bold" textLength="11" lengthAdjust="spacingAndGlyphs">UTXD0</text>
<path d="M1251 270.7L1262 270.7" stroke="#8a8ad8" stroke-width="0.35"/>
<text x="1276" y="270.1" font-size="2.9" fill="#555">10</text>
<text x="1199.6" y="269" font-size="2.7" fill="#222" font-weight="bold">AA21</text>
<path d="M1198.3 272.5L1243.6 272.5" stroke="#989898" stroke-width="1"/>
<rect x="1243.8" y="270.8" width="5.4" height="2.6" fill="#fff" stroke="#9a9a9a" stroke-width="0.5" rx="0.8"/>
<text x="1251" y="273.1" font-size="2.9" fill="#3030b4" font-weight="bold" textLength="11" lengthAdjust="spacingAndGlyphs">SPI0_C</text>
<path d="M1251 273.6L1262 273.6" stroke="#8a8ad8" stroke-width="0.35"/>
<text x="1276" y="273" font-size="2.9" fill="#555">10</text>
<text x="1199.6" y="271.9" font-size="2.7" fill="#222" font-weight="bold">P14</text>
<path d="M1198.3 275.5L1243.6 275.5" stroke="#989898" stroke-width="1"/>
<rect x="1243.8" y="273.7" width="5.4" height="2.6" fill="#fff" stroke="#9a9a9a" stroke-width="0.5" rx="0.8"/>
<text x="1251" y="276" font-size="2.9" fill="#3030b4" font-weight="bold" textLength="11" lengthAdjust="spacingAndGlyphs">USB_DM</text>
<path d="M1251 276.5L1262 276.5" stroke="#8a8ad8" stroke-width="0.35"/>
<text x="1276" y="275.9" font-size="2.9" fill="#555">7</text>
<text x="1199.6" y="274.8" font-size="2.7" fill="#222" font-weight="bold">N13</text>
<path d="M1198.3 283.5L1243.6 283.5" stroke="#989898" stroke-width="1"/>
<rect x="1243.8" y="282.1" width="5.4" height="2.6" fill="#fff" stroke="#9a9a9a" stroke-width="0.5" rx="0.8"/>
<text x="1251" y="284.4" font-size="2.9" fill="#3030b4" font-weight="bold" textLength="11" lengthAdjust="spacingAndGlyphs">SRCLKE</text>
<path d="M1251 284.9L1262 284.9" stroke="#8a8ad8" stroke-width="0.35"/>
<text x="1276" y="284.3" font-size="2.9" fill="#555">5</text>
<text x="1199.6" y="283.2" font-size="2.7" fill="#222" font-weight="bold">H8</text>
<path d="M1198.3 286.5L1243.6 286.5" stroke="#989898" stroke-width="1"/>
<rect x="1243.8" y="285" width="5.4" height="2.6" fill="#fff" stroke="#9a9a9a" stroke-width="0.5" rx="0.8"/>
<text x="1251" y="287.3" font-size="2.9" fill="#3030b4" font-weight="bold" textLength="11" lengthAdjust="spacingAndGlyphs">AU_VIN</text>
<path d="M1251 287.8L1262 287.8" stroke="#8a8ad8" stroke-width="0.35"/>
<text x="1276" y="287.2" font-size="2.9" fill="#555">5</text>
<text x="1199.6" y="286.1" font-size="2.7" fill="#222" font-weight="bold">F6</text>
<path d="M1198.3 289.5L1243.6 289.5" stroke="#989898" stroke-width="1"/>
<rect x="1243.8" y="287.9" width="5.4" height="2.6" fill="#fff" stroke="#9a9a9a" stroke-width="0.5" rx="0.8"/>
<text x="1251" y="290.2" font-size="2.9" fill="#3030b4" font-weight="bold" textLength="11" lengthAdjust="spacingAndGlyphs">URXD0</text>
<path d="M1251 290.7L1262 290.7" stroke="#8a8ad8" stroke-width="0.35"/>
<text x="1276" y="290.1" font-size="2.9" fill="#555">4</text>
<text x="1199.6" y="289" font-size="2.7" fill="#222" font-weight="bold">A1</text>
<path d="M1198.3 292.5L1243.6 292.5" stroke="#989898" stroke-width="1"/>
<rect x="1243.8" y="290.8" width="5.4" height="2.6" fill="#fff" stroke="#9a9a9a" stroke-width="0.5" rx="0.8"/>
<text x="1251" y="293.1" font-size="2.9" fill="#3030b4" font-weight="bold" textLength="11" lengthAdjust="spacingAndGlyphs">SRCLKE</text>
<path d="M1251 293.6L1262 293.6" stroke="#8a8ad8" stroke-width="0.35"/>
<text x="1276" y="293" font-size="2.9" fill="#555">7</text>
<text x="1199.6" y="291.9" font-size="2.7" fill="#222" font-weight="bold">AB22</text>
<path d="M1198.3 306.5L1243.6 306.5" stroke="#989898" stroke-width="1"/>
<rect x="1243.8" y="305.3" width="5.4" height="2.6" fill="#fff" stroke="#9a9a9a" stroke-width="0.5" rx="0.8"/>
<text x="1251" y="307.6" font-size="2.9" fill="#3030b4" font-weight="bold" textLength="29" lengthAdjust="spacingAndGlyphs">SPI0_MOSI_CAM_R</text>
<path d="M1251 308.1L1280 308.1" stroke="#8a8ad8" stroke-width="0.35"/>
<text x="1199.6" y="306.4" font-size="2.7" fill="#222" font-weight="bold">H8</text>
<path d="M1198.3 320.5L1243.6 320.5" stroke="#989898" stroke-width="1"/>
<rect x="1243.8" y="319.4" width="5.4" height="2.6" fill="#fff" stroke="#9a9a9a" stroke-width="0.5" rx="0.8"/>
<text x="1251" y="321.7" font-size="2.9" fill="#3030b4" font-weight="bold" textLength="29" lengthAdjust="spacingAndGlyphs">RTC32K_SRCLKENA</text>
<path d="M1251 322.2L1280 322.2" stroke="#8a8ad8" stroke-width="0.35"/>
<text x="1199.6" y="320.5" font-size="2.7" fill="#222" font-weight="bold">K10</text>
<path d="M1198.3 326.5L1243.6 326.5" stroke="#989898" stroke-width="1"/>
<rect x="1243.8" y="325.3" width="5.4" height="2.6" fill="#fff" stroke="#9a9a9a" stroke-width="0.5" rx="0.8"/>
<text x="1251" y="327.6" font-size="2.9" fill="#3030b4" font-weight="bold" textLength="29" lengthAdjust="spacingAndGlyphs">GPIO_LCD_RST_KP</text>
<path d="M1251 328.1L1280 328.1" stroke="#8a8ad8" stroke-width="0.35"/>
<text x="1199.6" y="326.4" font-size="2.7" fill="#222" font-weight="bold">V18</text>
<path d="M1198.3 335.5L1243.6 335.5" stroke="#989898" stroke-width="1"/>
<rect x="1243.8" y="334.1" width="5.4" height="2.6" fill="#fff" stroke="#9a9a9a" stroke-width="0.5" rx="0.8"/>
<text x="1251" y="336.4" font-size="2.9" fill="#3030b4" font-weight="bold" textLength="13" lengthAdjust="spacingAndGlyphs">WATCHDO</text>
<path d="M1251 336.9L1264 336.9" stroke="#8a8ad8" stroke-width="0.35"/>
<text x="1276" y="336.3" font-size="2.9" fill="#555">4</text>
<text x="1199.6" y="335.2" font-size="2.7" fill="#222" font-weight="bold">M12</text>
<path d="M1198.3 338.5L1243.6 338.5" stroke="#989898" stroke-width="1"/>
<rect x="1243.8" y="337.1" width="5.4" height="2.6" fill="#fff" stroke="#9a9a9a" stroke-width="0.5" rx="0.8"/>
<text x="1251" y="339.4" font-size="2.9" fill="#3030b4" font-weight="bold" textLength="15" lengthAdjust="spacingAndGlyphs">UTXD0_CH</text>
<path d="M1251 339.9L1266 339.9" stroke="#8a8ad8" stroke-width="0.35"/>
<text x="1276" y="339.3" font-size="2.9" fill="#555">12</text>
<text x="1199.6" y="338.2" font-size="2.7" fill="#222" font-weight="bold">A1</text>
<path d="M1198.3 343.5L1243.6 343.5" stroke="#989898" stroke-width="1"/>
<rect x="1243.8" y="342.6" width="5.4" height="2.6" fill="#fff" stroke="#9a9a9a" stroke-width="0.5" rx="0.8"/>
<text x="1251" y="344.9" font-size="2.9" fill="#3030b4" font-weight="bold" textLength="13" lengthAdjust="spacingAndGlyphs">SIM1_SR</text>
<path d="M1251 345.4L1264 345.4" stroke="#8a8ad8" stroke-width="0.35"/>
<text x="1276" y="344.8" font-size="2.9" fill="#555">4</text>
<text x="1199.6" y="343.7" font-size="2.7" fill="#222" font-weight="bold">M12</text>
<path d="M1198.3 352.5L1243.6 352.5" stroke="#989898" stroke-width="1"/>
<rect x="1243.8" y="351.3" width="5.4" height="2.6" fill="#fff" stroke="#9a9a9a" stroke-width="0.5" rx="0.8"/>
<text x="1251" y="353.6" font-size="2.9" fill="#3030b4" font-weight="bold" textLength="13" lengthAdjust="spacingAndGlyphs">RTC32K</text>
<path d="M1251 354.1L1264 354.1" stroke="#8a8ad8" stroke-width="0.35"/>
<text x="1276" y="353.5" font-size="2.9" fill="#555">5</text>
<text x="1199.6" y="352.4" font-size="2.7" fill="#222" font-weight="bold">AA21</text>
<path d="M1198.3 358.5L1243.6 358.5" stroke="#989898" stroke-width="1"/>
<rect x="1243.8" y="357.1" width="5.4" height="2.6" fill="#fff" stroke="#9a9a9a" stroke-width="0.5" rx="0.8"/>
<text x="1251" y="359.4" font-size="2.9" fill="#3030b4" font-weight="bold" textLength="13" lengthAdjust="spacingAndGlyphs">PWM_BL</text>
<path d="M1251 359.9L1264 359.9" stroke="#8a8ad8" stroke-width="0.35"/>
<text x="1276" y="359.3" font-size="2.9" fill="#555">10</text>
<text x="1199.6" y="358.2" font-size="2.7" fill="#222" font-weight="bold">Y20</text>
<path d="M1198.3 372.5L1243.6 372.5" stroke="#989898" stroke-width="1"/>
<rect x="1243.8" y="371.3" width="5.4" height="2.6" fill="#fff" stroke="#9a9a9a" stroke-width="0.5" rx="0.8"/>
<text x="1251" y="373.6" font-size="2.9" fill="#3030b4" font-weight="bold" textLength="11" lengthAdjust="spacingAndGlyphs">CAM_PD</text>
<path d="M1251 374.1L1262 374.1" stroke="#8a8ad8" stroke-width="0.35"/>
<text x="1276" y="373.5" font-size="2.9" fill="#555">4</text>
<text x="1199.6" y="372.4" font-size="2.7" fill="#222" font-weight="bold">T16</text>
<path d="M1198.3 377.5L1243.6 377.5" stroke="#989898" stroke-width="1"/>
<rect x="1243.8" y="376.6" width="5.4" height="2.6" fill="#fff" stroke="#9a9a9a" stroke-width="0.5" rx="0.8"/>
<text x="1251" y="378.9" font-size="2.9" fill="#3030b4" font-weight="bold" textLength="11" lengthAdjust="spacingAndGlyphs">SIM1_S</text>
<path d="M1251 379.4L1262 379.4" stroke="#8a8ad8" stroke-width="0.35"/>
<text x="1276" y="378.8" font-size="2.9" fill="#555">5</text>
<text x="1199.6" y="377.7" font-size="2.7" fill="#222" font-weight="bold">V18</text>
<path d="M1198.3 398.5L1243.6 398.5" stroke="#989898" stroke-width="1"/>
<rect x="1243.8" y="396.9" width="5.4" height="2.6" fill="#fff" stroke="#9a9a9a" stroke-width="0.5" rx="0.8"/>
<text x="1251" y="399.2" font-size="2.9" fill="#3030b4" font-weight="bold" textLength="10" lengthAdjust="spacingAndGlyphs">USB_D</text>
<path d="M1251 399.7L1261 399.7" stroke="#8a8ad8" stroke-width="0.35"/>
<text x="1276" y="399.1" font-size="2.9" fill="#555">5</text>
<text x="1199.6" y="398" font-size="2.7" fill="#222" font-weight="bold">R15</text>
<path d="M1198.3 432.5L1243.6 432.5" stroke="#989898" stroke-width="1"/>
<rect x="1243.8" y="431.5" width="5.4" height="2.6" fill="#fff" stroke="#9a9a9a" stroke-width="0.5" rx="0.8"/>
<text x="1251" y="433.8" font-size="2.9" fill="#3030b4" font-weight="bold" textLength="13" lengthAdjust="spacingAndGlyphs">VM1_PWM</text>
<path d="M1251 434.3L1264 434.3" stroke="#8a8ad8" stroke-width="0.35"/>
<text x="1276" y="433.7" font-size="2.9" fill="#555">12</text>
<text x="1199.6" y="432.6" font-size="2.7" fill="#222" font-weight="bold">D4</text>
<rect x="1210" y="310.9" width="34" height="6" fill="#fffff2" stroke="none" stroke-width="1"/>
<path d="M1198.5 312.5L1237.5 312.5L1237.5 306.5" stroke="#989898" stroke-width="1" fill="none"/>
<text x="1215" y="312.1" font-size="2.5" fill="#222">R1040</text>
<text x="1233" y="312.1" font-size="2.5" fill="#222">100K</text>
<path d="M1225 312.4L1226 313.5L1227 311.4L1228 313.5L1229 311.4L1230 312.4" stroke="#555" stroke-width="0.5" fill="none"/>
<text x="1199.6" y="312.2" font-size="2.7" fill="#222" font-weight="bold">H8</text>
<rect x="1210" y="362.7" width="34" height="6" fill="#fffff2" stroke="none" stroke-width="1"/>
<path d="M1198.3 364.2L1211 364.2L1212 366.2L1243 366.2" stroke="#999" stroke-width="0.7" fill="none"/>
<path d="M1243 364.2L1243 368.7" stroke="#aaa" stroke-width="0.6"/>
<text x="1215" y="365.9" font-size="2.5" fill="#222">R1040</text>
<text x="1233" y="365.9" font-size="2.5" fill="#222">100K</text>
<path d="M1225 366.2L1226 367.3L1227 365.2L1228 367.3L1229 365.2L1230 366.2" stroke="#555" stroke-width="0.5" fill="none"/>
<text x="1199.6" y="364" font-size="2.7" fill="#222" font-weight="bold">D4</text>
<rect x="1210" y="382.2" width="34" height="6" fill="#fffff2" stroke="none" stroke-width="1"/>
<path d="M1198.3 383.7L1211 383.7L1212 385.7L1243 385.7" stroke="#999" stroke-width="0.7" fill="none"/>
<path d="M1243 383.7L1243 388.2" stroke="#aaa" stroke-width="0.6"/>
<text x="1215" y="385.4" font-size="2.5" fill="#222">R1040</text>
<text x="1233" y="385.4" font-size="2.5" fill="#222">100K</text>
<path d="M1225 385.7L1226 386.8L1227 384.7L1228 386.8L1229 384.7L1230 385.7" stroke="#555" stroke-width="0.5" fill="none"/>
<text x="1199.6" y="383.5" font-size="2.7" fill="#222" font-weight="bold">U17</text>
<path d="M1198.5 407.5L1229.5 407.5" stroke="#989898" stroke-width="1" fill="none"/>
<path d="M1229.4 405L1229.4 409" stroke="#999" stroke-width="0.7"/>
<path d="M1230.8 405.4L1230.8 408.6" stroke="#bbb" stroke-width="0.6"/>
<path d="M1198.5 412.5L1212.5 412.5L1212.5 407.5" stroke="#989898" stroke-width="1" fill="none"/>
<path d="M1198.3 301L1202 301" stroke="#666" stroke-width="0.5"/>
<text x="1199.6" y="300.8" font-size="2.7" fill="#222" font-weight="bold">V18</text>
<path d="M1198.3 375.4L1202 375.4" stroke="#666" stroke-width="0.5"/>
<text x="1199.6" y="375.2" font-size="2.7" fill="#222" font-weight="bold">H8</text>
<path d="M1198.3 392L1202 392" stroke="#666" stroke-width="0.5"/>
<text x="1199.6" y="391.8" font-size="2.7" fill="#222" font-weight="bold">K10</text>
<path d="M1198.3 400.5L1202 400.5" stroke="#666" stroke-width="0.5"/>
<text x="1199.6" y="400.3" font-size="2.7" fill="#222" font-weight="bold">B2</text>
<path d="M1198.3 418.4L1202 418.4" stroke="#666" stroke-width="0.5"/>
<text x="1199.6" y="418.2" font-size="2.7" fill="#222" font-weight="bold">AB22</text>
<path d="M1198.3 420.5L1202 420.5" stroke="#666" stroke-width="0.5"/>
<text x="1199.6" y="420.3" font-size="2.7" fill="#222" font-weight="bold">D4</text>
<path d="M1198.3 426.8L1202 426.8" stroke="#666" stroke-width="0.5"/>
<text x="1199.6" y="426.6" font-size="2.7" fill="#222" font-weight="bold">AC23</text>
<text x="1197" y="232.8" font-size="2.8" fill="#1c1c1c" text-anchor="end" textLength="9" lengthAdjust="spacingAndGlyphs">MSDC1</text>
<text x="1197" y="235.7" font-size="2.8" fill="#1c1c1c" text-anchor="end" textLength="9" lengthAdjust="spacingAndGlyphs">CAM_P</text>
<text x="1197" y="238.6" font-size="2.8" fill="#1c1c1c" text-anchor="end" textLength="11" lengthAdjust="spacingAndGlyphs">VSYS/MI</text>
<text x="1197" y="241.5" font-size="2.8" fill="#1c1c1c" text-anchor="end" textLength="11" lengthAdjust="spacingAndGlyphs">MSDC1_D</text>
<text x="1197" y="250.2" font-size="2.8" fill="#1c1c1c" text-anchor="end" textLength="8" lengthAdjust="spacingAndGlyphs">BPI_B</text>
<text x="1197" y="253.1" font-size="2.8" fill="#1c1c1c" text-anchor="end" textLength="8" lengthAdjust="spacingAndGlyphs">MIPI</text>
<text x="1197" y="256" font-size="2.8" fill="#1c1c1c" text-anchor="end" textLength="10" lengthAdjust="spacingAndGlyphs">USB_DP</text>
<text x="1197" y="258.9" font-size="2.8" fill="#1c1c1c" text-anchor="end" textLength="10" lengthAdjust="spacingAndGlyphs">SIM1_S</text>
<text x="1197" y="267.3" font-size="2.8" fill="#1c1c1c" text-anchor="end" textLength="14" lengthAdjust="spacingAndGlyphs">I2C_SDA0</text>
<text x="1197" y="270.2" font-size="2.8" fill="#1c1c1c" text-anchor="end" textLength="14" lengthAdjust="spacingAndGlyphs">MIPI_TCP</text>
<text x="1197" y="273.1" font-size="2.8" fill="#1c1c1c" text-anchor="end" textLength="16" lengthAdjust="spacingAndGlyphs">CAM_RST/MI</text>
<text x="1197" y="276" font-size="2.8" fill="#1c1c1c" text-anchor="end" textLength="16" lengthAdjust="spacingAndGlyphs">SRCLKENA/A</text>
<text x="1197" y="284.4" font-size="2.8" fill="#1c1c1c" text-anchor="end" textLength="15" lengthAdjust="spacingAndGlyphs">VM0/USB_D</text>
<text x="1197" y="287.3" font-size="2.8" fill="#1c1c1c" text-anchor="end" textLength="15" lengthAdjust="spacingAndGlyphs">SPI0_MISO</text>
<text x="1197" y="290.2" font-size="2.8" fill="#1c1c1c" text-anchor="end" textLength="17" lengthAdjust="spacingAndGlyphs">WATCHDOG/B</text>
<text x="1197" y="293.1" font-size="2.8" fill="#1c1c1c" text-anchor="end" textLength="17" lengthAdjust="spacingAndGlyphs">MSDC1_DAT0</text>
<text x="1197" y="302" font-size="2.8" fill="#1c1c1c" text-anchor="end" textLength="14" lengthAdjust="spacingAndGlyphs">SIM1_SRS</text>
<text x="1197" y="307.6" font-size="2.8" fill="#1c1c1c" text-anchor="end" textLength="14" lengthAdjust="spacingAndGlyphs">MIPI_TCP</text>
<text x="1197" y="313.4" font-size="2.8" fill="#1c1c1c" text-anchor="end" textLength="11" lengthAdjust="spacingAndGlyphs">SPI0_CL</text>
<text x="1197" y="321.7" font-size="2.8" fill="#1c1c1c" text-anchor="end" textLength="17" lengthAdjust="spacingAndGlyphs">KPCOL0/GPI</text>
<text x="1197" y="327.6" font-size="2.8" fill="#1c1c1c" text-anchor="end" textLength="16" lengthAdjust="spacingAndGlyphs">MSDC1_CLK</text>
<text x="1197" y="336.4" font-size="2.8" fill="#1c1c1c" text-anchor="end" textLength="9" lengthAdjust="spacingAndGlyphs">I2C_S</text>
<text x="1197" y="339.4" font-size="2.8" fill="#1c1c1c" text-anchor="end" textLength="10" lengthAdjust="spacingAndGlyphs">VM1/CA</text>
<text x="1197" y="344.9" font-size="2.8" fill="#1c1c1c" text-anchor="end" textLength="8" lengthAdjust="spacingAndGlyphs">MSDC1</text>
<text x="1197" y="353.6" font-size="2.8" fill="#1c1c1c" text-anchor="end" textLength="7" lengthAdjust="spacingAndGlyphs">TX_B</text>
<text x="1197" y="359.4" font-size="2.8" fill="#1c1c1c" text-anchor="end" textLength="7" lengthAdjust="spacingAndGlyphs">MSDC</text>
<text x="1197" y="365.2" font-size="2.8" fill="#1c1c1c" text-anchor="end" textLength="6" lengthAdjust="spacingAndGlyphs">SPI0</text>
<text x="1197" y="373.6" font-size="2.8" fill="#1c1c1c" text-anchor="end" textLength="9" lengthAdjust="spacingAndGlyphs">CHD_D</text>
<text x="1197" y="376.4" font-size="2.8" fill="#1c1c1c" text-anchor="end" textLength="8" lengthAdjust="spacingAndGlyphs">MSDC1</text>
<text x="1197" y="378.9" font-size="2.8" fill="#1c1c1c" text-anchor="end" textLength="8" lengthAdjust="spacingAndGlyphs">USB_D</text>
<text x="1197" y="384.7" font-size="2.8" fill="#1c1c1c" text-anchor="end" textLength="15" lengthAdjust="spacingAndGlyphs">SIM1_SIO</text>
<text x="1197" y="393" font-size="2.8" fill="#1c1c1c" text-anchor="end" textLength="10" lengthAdjust="spacingAndGlyphs">VM0/CH</text>
<text x="1197" y="399.2" font-size="2.8" fill="#1c1c1c" text-anchor="end" textLength="6" lengthAdjust="spacingAndGlyphs">SPI0</text>
<text x="1197" y="401.5" font-size="2.8" fill="#1c1c1c" text-anchor="end" textLength="8" lengthAdjust="spacingAndGlyphs">MSDC1</text>
<text x="1197" y="408" font-size="2.8" fill="#1c1c1c" text-anchor="end" textLength="7" lengthAdjust="spacingAndGlyphs">RESE</text>
<text x="1197" y="413.6" font-size="2.8" fill="#1c1c1c" text-anchor="end" textLength="7" lengthAdjust="spacingAndGlyphs">MSDC</text>
<text x="1197" y="419.4" font-size="2.8" fill="#1c1c1c" text-anchor="end" textLength="15" lengthAdjust="spacingAndGlyphs">MSDC1_DAT</text>
<text x="1197" y="421.5" font-size="2.8" fill="#1c1c1c" text-anchor="end" textLength="15" lengthAdjust="spacingAndGlyphs">USB_DM/EI</text>
<text x="1197" y="427.8" font-size="2.8" fill="#1c1c1c" text-anchor="end" textLength="13" lengthAdjust="spacingAndGlyphs">SPI0_CS</text>
<text x="1197" y="433.8" font-size="2.8" fill="#1c1c1c" text-anchor="end" textLength="9" lengthAdjust="spacingAndGlyphs">CAM_R</text>
<rect x="1142.4" y="633" width="22" height="22" fill="#fffff4" stroke="none" stroke-width="1"/>
<rect x="1184.2" y="633" width="22" height="22" fill="#fffff4" stroke="none" stroke-width="1"/>
<rect x="1221.3" y="633" width="22" height="22" fill="#fffff4" stroke="none" stroke-width="1"/>
<rect x="1166" y="610" width="18" height="19" fill="#fffff4" stroke="none" stroke-width="1"/>
<path d="M1242.5 599.5L1154.5 599.5L1154.5 639.5" stroke="#989898" stroke-width="1" fill="none"/>
<path d="M1154.4 619.5L1189.2 619.5" stroke="#989898" stroke-width="1"/>
<path d="M1242.9 610.7L1189.2 610.7L1189.2 639" stroke="#b4b4b4" stroke-width="1.3" fill="none"/>
<path d="M1242.5 622.5L1235.5 622.5L1235.5 628.5L1226.5 628.5L1226.5 639.5" stroke="#989898" stroke-width="1" fill="none"/>
<rect x="1171.4" y="613.5" width="6.6" height="12.3" fill="#fff" stroke="#777" stroke-width="0.6"/>
<rect x="1173.3" y="616" width="2.8" height="7" fill="#fff" stroke="#444" stroke-width="0.6"/>
<text x="1171" y="612.9" font-size="2.5" fill="#222">X1001</text>
<text x="1169" y="619.4" font-size="2" fill="#444">1</text>
<text x="1179.4" y="619.4" font-size="2" fill="#444">2</text>
<path d="M1151.1 639.4L1157.7 639.4" stroke="#111" stroke-width="1.1"/>
<path d="M1151.1 643Q1154.4 640.3 1157.7 643" stroke="#111" stroke-width="1.1" fill="none"/>
<path d="M1154.4 641.6L1154.4 648.7" stroke="#333" stroke-width="0.8"/>
<path d="M1152 651.2L1156.8 651.2" stroke="#c8c8d8" stroke-width="0.6"/>
<path d="M1154.4 648.7L1154.4 651.2" stroke="#c8c8d8" stroke-width="0.6"/>
<path d="M1153.2 652.6L1155.6 652.6" stroke="#d4d4e0" stroke-width="0.5"/>
<path d="M1185.9 639.4L1192.5 639.4" stroke="#111" stroke-width="1.1"/>
<path d="M1185.9 643Q1189.2 640.3 1192.5 643" stroke="#111" stroke-width="1.1" fill="none"/>
<path d="M1189.2 641.6L1189.2 648.7" stroke="#333" stroke-width="0.8"/>
<path d="M1186.8 651.2L1191.6 651.2" stroke="#c8c8d8" stroke-width="0.6"/>
<path d="M1189.2 648.7L1189.2 651.2" stroke="#c8c8d8" stroke-width="0.6"/>
<path d="M1188 652.6L1190.4 652.6" stroke="#d4d4e0" stroke-width="0.5"/>
<path d="M1223 639.4L1229.6 639.4" stroke="#111" stroke-width="1.1"/>
<path d="M1223 643Q1226.3 640.3 1229.6 643" stroke="#111" stroke-width="1.1" fill="none"/>
<path d="M1226.3 641.6L1226.3 648.7" stroke="#333" stroke-width="0.8"/>
<path d="M1223.9 651.2L1228.7 651.2" stroke="#c8c8d8" stroke-width="0.6"/>
<path d="M1226.3 648.7L1226.3 651.2" stroke="#c8c8d8" stroke-width="0.6"/>
<path d="M1225.1 652.6L1227.5 652.6" stroke="#d4d4e0" stroke-width="0.5"/>
<text x="1141.5" y="639.6" font-size="2.5" fill="#222">C1078</text>
<text x="1143.5" y="643" font-size="2.5" fill="#222">18pF</text>
<text x="1194" y="639.6" font-size="2.5" fill="#222">C1077</text>
<text x="1194" y="643" font-size="2.5" fill="#222">18pF</text>
<text x="1231" y="639.6" font-size="2.5" fill="#222">C1068</text>
<rect x="1243.8" y="598.3" width="5.4" height="2.6" fill="#fff" stroke="#9a9a9a" stroke-width="0.5" rx="0.8"/>
<text x="1251.3" y="600.6" font-size="2.9" fill="#3030b4" font-weight="bold" textLength="14.5" lengthAdjust="spacingAndGlyphs">EINT_TP</text>
<path d="M1251.3 601.1L1265.8 601.1" stroke="#8a8ad8" stroke-width="0.35"/>
<text x="1276.4" y="599.9" font-size="2.9" fill="#555">5</text>
<rect x="1243.8" y="609.4" width="5.4" height="2.6" fill="#fff" stroke="#9a9a9a" stroke-width="0.5" rx="0.8"/>
<text x="1251.3" y="611.7" font-size="2.9" fill="#3030b4" font-weight="bold" textLength="14" lengthAdjust="spacingAndGlyphs">MSDC1_C</text>
<path d="M1251.3 612.2L1265.3 612.2" stroke="#8a8ad8" stroke-width="0.35"/>
<text x="1276.4" y="611" font-size="2.9" fill="#555">5</text>
<rect x="1243.8" y="620.9" width="5.4" height="2.6" fill="#fff" stroke="#9a9a9a" stroke-width="0.5" rx="0.8"/>
<text x="1251.3" y="623.2" font-size="2.9" fill="#3030b4" font-weight="bold" textLength="12.5" lengthAdjust="spacingAndGlyphs">SIM1_SR</text>
<path d="M1251.3 623.7L1263.8 623.7" stroke="#8a8ad8" stroke-width="0.35"/>
<text x="1276.4" y="622.5" font-size="2.9" fill="#555">11</text>
<rect x="1072" y="680" width="18" height="17" fill="#fffff2" stroke="none" stroke-width="1"/>
<rect x="1076" y="685" width="6.5" height="6.5" fill="#fff" stroke="#666" stroke-width="0.6"/>
<text x="1075" y="684.4" font-size="2.5" fill="#222">TP1001</text>
<path d="M1082.5 688.5L1100 688.5" stroke="#989898" stroke-width="1"/>
<rect x="1100.2" y="687" width="5.4" height="2.6" fill="#fff" stroke="#9a9a9a" stroke-width="0.5" rx="0.8"/>
<text x="1107.6" y="689.3" font-size="2.9" fill="#3030b4" font-weight="bold">SPI0_MIS</text>
<path d="M1107.6 689.8L1123 689.8" stroke="#8a8ad8" stroke-width="0.35"/>
<text x="1133" y="687.6" font-size="2.9" fill="#555">12</text>
<rect x="1073.2" y="752.5" width="13.6" height="19.5" fill="#ffffe2" stroke="none" stroke-width="1"/>
<circle cx="1080" cy="763" r="5.5" fill="#fff" stroke="#666" stroke-width="0.7"/>
<path d="M1078.8 763.6L1081.2 763.6" stroke="#777" stroke-width="0.5"/>
<path d="M1080 761.4L1080 763.6" stroke="#777" stroke-width="0.5"/>
<text x="1080" y="756.9" font-size="2.2" fill="#222" text-anchor="middle" font-weight="bold">MARK1</text>
<text x="1080" y="771.2" font-size="2.2" fill="#222" text-anchor="middle" font-weight="bold">MARK</text>
<rect x="1087.2" y="752.5" width="13.6" height="19.5" fill="#ffffe2" stroke="none" stroke-width="1"/>
<circle cx="1094" cy="763" r="5.5" fill="#fff" stroke="#666" stroke-width="0.7"/>
<path d="M1092.8 763.6L1095.2 763.6" stroke="#777" stroke-width="0.5"/>
<path d="M1094 761.4L1094 763.6" stroke="#777" stroke-width="0.5"/>
<text x="1094" y="756.9" font-size="2.2" fill="#222" text-anchor="middle" font-weight="bold">MARK1</text>
<text x="1094" y="771.2" font-size="2.2" fill="#222" text-anchor="middle" font-weight="bold">MARK</text>
<rect x="1101.4" y="752.5" width="13.6" height="19.5" fill="#ffffe2" stroke="none" stroke-width="1"/>
<circle cx="1108.2" cy="763" r="5.5" fill="#fff" stroke="#666" stroke-width="0.7"/>
<path d="M1107 763.6L1109.4 763.6" stroke="#777" stroke-width="0.5"/>
<path d="M1108.2 761.4L1108.2 763.6" stroke="#777" stroke-width="0.5"/>
<text x="1108.2" y="756.9" font-size="2.2" fill="#222" text-anchor="middle" font-weight="bold">MARK1</text>
<text x="1108.2" y="771.2" font-size="2.2" fill="#222" text-anchor="middle" font-weight="bold">MARK</text>
<rect x="1115.9" y="752.5" width="13.6" height="19.5" fill="#ffffe2" stroke="none" stroke-width="1"/>
<circle cx="1122.7" cy="763" r="5.5" fill="#fff" stroke="#666" stroke-width="0.7"/>
<path d="M1121.5 763.6L1123.9 763.6" stroke="#777" stroke-width="0.5"/>
<path d="M1122.7 761.4L1122.7 763.6" stroke="#777" stroke-width="0.5"/>
<text x="1122.7" y="756.9" font-size="2.2" fill="#222" text-anchor="middle" font-weight="bold">MARK1</text>
<text x="1122.7" y="771.2" font-size="2.2" fill="#222" text-anchor="middle" font-weight="bold">MARK</text>
<rect x="1213.5" y="668" width="14.5" height="72" fill="#ffffe6" stroke="none" stroke-width="1"/>
<circle cx="1220.6" cy="674.2" r="3.3" fill="#fff" stroke="#666" stroke-width="0.6"/>
<text x="1214.6" y="670.8" font-size="2.5" fill="#222" font-weight="bold">TP1010</text>
<path d="M1223.8 674.5L1244.3 674.5" stroke="#989898" stroke-width="1"/>
<rect x="1244.1" y="672.9" width="5.4" height="2.6" fill="#fff" stroke="#9a9a9a" stroke-width="0.5" rx="0.8"/>
<text x="1251" y="675.2" font-size="2.9" fill="#3030b4" font-weight="bold" textLength="9" lengthAdjust="spacingAndGlyphs">KPROW</text>
<path d="M1251 675.7L1260 675.7" stroke="#8a8ad8" stroke-width="0.35"/>
<text x="1280" y="674.5" font-size="2.8" fill="#444" text-anchor="end">1,2,3,6,7,8,10</text>
<path d="M1219.2 674.2L1222 674.2" stroke="#555" stroke-width="0.5"/>
<circle cx="1220.6" cy="682" r="3.3" fill="#fff" stroke="#666" stroke-width="0.6"/>
<text x="1214.6" y="678.6" font-size="2.5" fill="#222" font-weight="bold">TP1010</text>
<path d="M1223.8 682.5L1244.3 682.5" stroke="#989898" stroke-width="1"/>
<rect x="1244.1" y="680.7" width="5.4" height="2.6" fill="#fff" stroke="#9a9a9a" stroke-width="0.5" rx="0.8"/>
<text x="1251" y="683" font-size="2.9" fill="#3030b4" font-weight="bold" textLength="9" lengthAdjust="spacingAndGlyphs">VM0_B</text>
<path d="M1251 683.5L1260 683.5" stroke="#8a8ad8" stroke-width="0.35"/>
<text x="1280" y="682.3" font-size="2.8" fill="#444" text-anchor="end">11,12</text>
<path d="M1219.2 682L1222 682" stroke="#555" stroke-width="0.5"/>
<circle cx="1220.6" cy="691.4" r="3.3" fill="#fff" stroke="#666" stroke-width="0.6"/>
<text x="1214.6" y="688" font-size="2.5" fill="#222" font-weight="bold">TP1010</text>
<rect x="1228" y="686.5" width="17" height="9.5" fill="#fffff2" stroke="none" stroke-width="1"/>
<path d="M1223.8 691.5L1231.6 691.5" stroke="#989898" stroke-width="1"/>
<circle cx="1234.7" cy="691.4" r="3.1" fill="#fff" stroke="#555" stroke-width="0.7"/>
<path d="M1229.6 688.4L1229.6 694.4" stroke="#999" stroke-width="0.6"/>
<path d="M1237.8 691.4L1243 691.4" stroke="#999" stroke-width="0.7"/>
<path d="M1240.5 688.4L1240.5 694.4" stroke="#999" stroke-width="0.6"/>
<path d="M1242.4 689L1242.4 693.8" stroke="#ccc" stroke-width="0.6"/>
<text x="1230" y="687.4" font-size="2.1" fill="#222">TP1020</text>
<path d="M1233.2 691.4L1236.2 691.4" stroke="#555" stroke-width="0.5"/>
<path d="M1234.7 689.9L1234.7 692.9" stroke="#555" stroke-width="0.5"/>
<path d="M1219.2 691.4L1222 691.4" stroke="#555" stroke-width="0.5"/>
<circle cx="1220.6" cy="699.8" r="3.3" fill="#fff" stroke="#666" stroke-width="0.6"/>
<text x="1214.6" y="696.4" font-size="2.5" fill="#222" font-weight="bold">TP1010</text>
<path d="M1223.8 699.8L1244.3 699.8" stroke="#b8b8b8" stroke-width="1.2"/>
<rect x="1244.1" y="698.5" width="5.4" height="2.6" fill="#fff" stroke="#9a9a9a" stroke-width="0.5" rx="0.8"/>
<text x="1251" y="700.8" font-size="2.9" fill="#3030b4" font-weight="bold" textLength="12.5" lengthAdjust="spacingAndGlyphs">BSI_CLK</text>
<path d="M1251 701.3L1263.5 701.3" stroke="#8a8ad8" stroke-width="0.35"/>
<text x="1280" y="700.1" font-size="2.8" fill="#444" text-anchor="end">12</text>
<path d="M1219.2 699.8L1222 699.8" stroke="#555" stroke-width="0.5"/>
<circle cx="1220.6" cy="708.2" r="3.3" fill="#fff" stroke="#666" stroke-width="0.6"/>
<text x="1214.6" y="704.8" font-size="2.5" fill="#222" font-weight="bold">TP1010</text>
<path d="M1223.8 708.5L1244.3 708.5" stroke="#989898" stroke-width="1"/>
<rect x="1244.1" y="706.9" width="5.4" height="2.6" fill="#fff" stroke="#9a9a9a" stroke-width="0.5" rx="0.8"/>
<text x="1251" y="709.2" font-size="2.9" fill="#3030b4" font-weight="bold" textLength="12" lengthAdjust="spacingAndGlyphs">SIM1_S</text>
<path d="M1251 709.7L1263 709.7" stroke="#8a8ad8" stroke-width="0.35"/>
<text x="1280" y="708.5" font-size="2.8" fill="#444" text-anchor="end">12</text>
<path d="M1219.2 708.2L1222 708.2" stroke="#555" stroke-width="0.5"/>
<circle cx="1220.6" cy="716.5" r="3.3" fill="#fff" stroke="#666" stroke-width="0.6"/>
<text x="1214.6" y="713.1" font-size="2.5" fill="#222" font-weight="bold">TP1010</text>
<path d="M1223.8 716.5L1244.3 716.5" stroke="#989898" stroke-width="1"/>
<rect x="1244.1" y="715.2" width="5.4" height="2.6" fill="#fff" stroke="#9a9a9a" stroke-width="0.5" rx="0.8"/>
<text x="1251" y="717.5" font-size="2.9" fill="#3030b4" font-weight="bold" textLength="12.5" lengthAdjust="spacingAndGlyphs">KPCOL0</text>
<path d="M1251 718L1263.5 718" stroke="#8a8ad8" stroke-width="0.35"/>
<text x="1280" y="716.8" font-size="2.8" fill="#444" text-anchor="end">12</text>
<path d="M1219.2 716.5L1222 716.5" stroke="#555" stroke-width="0.5"/>
<circle cx="1220.6" cy="725.3" r="3.3" fill="#fff" stroke="#666" stroke-width="0.6"/>
<text x="1214.6" y="721.9" font-size="2.5" fill="#222" font-weight="bold">TP1010</text>
<path d="M1223.8 725.5L1244.3 725.5" stroke="#989898" stroke-width="1"/>
<rect x="1244.1" y="724" width="5.4" height="2.6" fill="#fff" stroke="#9a9a9a" stroke-width="0.5" rx="0.8"/>
<text x="1251" y="726.3" font-size="2.9" fill="#3030b4" font-weight="bold" textLength="12" lengthAdjust="spacingAndGlyphs">SPI0_C</text>
<path d="M1251 726.8L1263 726.8" stroke="#8a8ad8" stroke-width="0.35"/>
<text x="1280" y="725.6" font-size="2.8" fill="#444" text-anchor="end">12</text>
<path d="M1219.2 725.3L1222 725.3" stroke="#555" stroke-width="0.5"/>
<circle cx="1220.6" cy="733.7" r="3.3" fill="#fff" stroke="#666" stroke-width="0.6"/>
<text x="1214.6" y="730.3" font-size="2.5" fill="#222" font-weight="bold">TP1010</text>
<path d="M1223.8 733.5L1244.3 733.5" stroke="#989898" stroke-width="1"/>
<rect x="1244.1" y="732.4" width="5.4" height="2.6" fill="#fff" stroke="#9a9a9a" stroke-width="0.5" rx="0.8"/>
<text x="1251" y="734.7" font-size="2.9" fill="#3030b4" font-weight="bold" textLength="11.5" lengthAdjust="spacingAndGlyphs">BPI_BU</text>
<path d="M1251 735.2L1262.5 735.2" stroke="#8a8ad8" stroke-width="0.35"/>
<text x="1280" y="734" font-size="2.8" fill="#444" text-anchor="end">12</text>
<path d="M1219.2 733.7L1222 733.7" stroke="#555" stroke-width="0.5"/>
<rect x="1068.5" y="774" width="72" height="46.2" fill="#fff" stroke="#969696" stroke-width="0.8"/>
<path d="M1068.5 785.7L1140.5 785.7" stroke="#969696" stroke-width="0.8"/>
<path d="M1068.5 797.2L1140.5 797.2" stroke="#969696" stroke-width="0.8"/>
<path d="M1068.5 808.7L1140.5 808.7" stroke="#969696" stroke-width="0.8"/>
<path d="M1111.4 774L1111.4 820.2" stroke="#969696" stroke-width="0.8"/>
<rect x="1140.5" y="749" width="143" height="71.2" fill="#fff" stroke="#969696" stroke-width="0.8"/>
<path d="M1140.5 763.2L1283.5 763.2" stroke="#969696" stroke-width="0.8"/>
<path d="M1140.5 786.3L1283.5 786.3" stroke="#969696" stroke-width="0.8"/>
<path d="M1140.5 813.5L1283.5 813.5" stroke="#969696" stroke-width="0.8"/>
<path d="M1174.1 786.3L1174.1 813.5" stroke="#969696" stroke-width="0.8"/>
<path d="M1194.5 786.3L1194.5 813.5" stroke="#969696" stroke-width="0.8"/>
<path d="M1269.4 786.3L1269.4 813.5" stroke="#969696" stroke-width="0.8"/>
<path d="M1232.1 813.5L1232.1 820.2" stroke="#969696" stroke-width="0.8"/>
<text x="1069.5" y="778" font-size="2.8" fill="#000" font-weight="bold" textLength="9" lengthAdjust="spacingAndGlyphs">DRAWN:</text>
<text x="1112.4" y="778" font-size="2.8" fill="#000" font-weight="bold" textLength="9" lengthAdjust="spacingAndGlyphs">DATED:</text>
<text x="1069.5" y="789.6" font-size="2.8" fill="#000" font-weight="bold" textLength="12" lengthAdjust="spacingAndGlyphs">CHECKED:</text>
<text x="1112.4" y="789.6" font-size="2.8" fill="#000" font-weight="bold" textLength="9" lengthAdjust="spacingAndGlyphs">DATED:</text>
<text x="1069.5" y="801" font-size="2.8" fill="#000" font-weight="bold" textLength="24" lengthAdjust="spacingAndGlyphs">QUALITY CONTROL:</text>
<text x="1112.4" y="801" font-size="2.8" fill="#000" font-weight="bold" textLength="9" lengthAdjust="spacingAndGlyphs">DATED:</text>
<text x="1069.5" y="812.5" font-size="2.8" fill="#000" font-weight="bold" textLength="13.5" lengthAdjust="spacingAndGlyphs">RELEASED:</text>
<text x="1112.4" y="812.5" font-size="2.8" fill="#000" font-weight="bold" textLength="9" lengthAdjust="spacingAndGlyphs">DATED:</text>
<text x="1141.6" y="754" font-size="2.8" fill="#000" font-weight="bold" textLength="12" lengthAdjust="spacingAndGlyphs">COMPANY:</text>
<text x="1141.6" y="768" font-size="2.8" fill="#000" font-weight="bold" textLength="9" lengthAdjust="spacingAndGlyphs">TITLE:</text>
<text x="1153" y="791.6" font-size="2.8" fill="#000" font-weight="bold" textLength="7.5" lengthAdjust="spacingAndGlyphs">CODE:</text>
<text x="1181" y="791.6" font-size="2.8" fill="#000" font-weight="bold" textLength="7.5" lengthAdjust="spacingAndGlyphs">SIZE:</text>
<text x="1221" y="791.6" font-size="2.8" fill="#000" font-weight="bold" textLength="16.5" lengthAdjust="spacingAndGlyphs">DRAWING NO:</text>
<text x="1272" y="791.6" font-size="2.8" fill="#000" font-weight="bold" textLength="6" lengthAdjust="spacingAndGlyphs">REV:</text>
<text x="1077.5" y="783.2" font-size="3.7" fill="#2a2a2a" font-family="Liberation Mono,monospace" textLength="24.5" lengthAdjust="spacingAndGlyphs">&lt;Drawn By&gt;</text>
<text x="1112.6" y="783.2" font-size="3.7" fill="#2a2a2a" font-family="Liberation Mono,monospace" textLength="29.4" lengthAdjust="spacingAndGlyphs">&lt;Drawn Date&gt;</text>
<text x="1072.5" y="794.7" font-size="3.7" fill="#2a2a2a" font-family="Liberation Mono,monospace" textLength="29.4" lengthAdjust="spacingAndGlyphs">&lt;Checked By&gt;</text>
<text x="1112.6" y="794.7" font-size="3.7" fill="#2a2a2a" font-family="Liberation Mono,monospace" textLength="34.3" lengthAdjust="spacingAndGlyphs">&lt;Checked Date&gt;</text>
<text x="1084" y="806.2" font-size="3.7" fill="#2a2a2a" font-family="Liberation Mono,monospace" textLength="17.15" lengthAdjust="spacingAndGlyphs">&lt;QC By&gt;</text>
<text x="1112.6" y="806.2" font-size="3.7" fill="#2a2a2a" font-family="Liberation Mono,monospace" textLength="22.05" lengthAdjust="spacingAndGlyphs">&lt;QC Date&gt;</text>
<text x="1072.5" y="817.7" font-size="3.7" fill="#2a2a2a" font-family="Liberation Mono,monospace" textLength="31.85" lengthAdjust="spacingAndGlyphs">&lt;Released By&gt;</text>
<text x="1111.6" y="817.7" font-size="3.7" fill="#2a2a2a" font-family="Liberation Mono,monospace" textLength="34.3" lengthAdjust="spacingAndGlyphs">&lt;Release Date&gt;</text>
<text x="1140.8" y="818.3" font-size="3.2" fill="#333" font-family="Liberation Mono,monospace" textLength="28" lengthAdjust="spacingAndGlyphs">SCALE: &lt;Scale&gt;</text>
<text x="1233.2" y="818.3" font-size="3.2" fill="#333" font-family="Liberation Mono,monospace" textLength="30.5" lengthAdjust="spacingAndGlyphs">SHEET: 2  OF 20</text>
<text x="1211.8" y="759.3" font-size="7.5" fill="#8a8a8a" text-anchor="middle" font-family="Liberation Mono,monospace">&lt;Company Name&gt;</text>
<text x="1217.5" y="777.8" font-size="6.6" fill="#8a8a8a" text-anchor="middle" font-family="Liberation Mono,monospace">&lt;TITLE&gt;</text>
<text x="1142" y="807" font-size="8.4" fill="#8a8a8a" font-family="Liberation Mono,monospace">&lt;Code&gt;</text>
<text x="1180" y="807" font-size="8.4" fill="#8a8a8a" font-family="Liberation Mono,monospace">A4</text>
<text x="1191.3" y="807" font-size="7.35" fill="#8a8a8a" font-family="Liberation Mono,monospace">Drawing Number</text>
<text x="1254.8" y="807" font-size="7" fill="#8a8a8a" font-family="Liberation Mono,monospace">&lt;Revision&gt;</text>
</svg>
  </div>
</div>
<div class="abs" id="rvsb">
  <svg width="15" height="673"><path d="M3.500 12 L7.500 8 L11.500 12" fill="none" stroke="#444" stroke-width="1.300"/>
  <rect x="0" y="16.500" width="15" height="1" fill="#ccc"/>
  <rect x="0" y="17.500" width="15" height="63" fill="#dcdcdc"/><path d="M4 46.500 H11 M4 49 H11 M4 51.500 H11" stroke="#444" stroke-width="1.300"/>
  <rect x="0" y="80.500" width="15" height="1" fill="#ccc"/>
  <rect x="0" y="659" width="15" height="1" fill="#ccc"/>
  <path d="M3.500 665 L7.500 669 L11.500 665" fill="none" stroke="#444" stroke-width="1.300"/></svg>
</div>

<div class="abs" id="status">
  <span class="mono" style="left:0">Version:1.0.0.52</span>
  <span class="mono" style="right:1px;color:#fff">Current [PCB_Main_V606_B1-1(IT1702B) Schematics]</span>
</div>

</body></html>
